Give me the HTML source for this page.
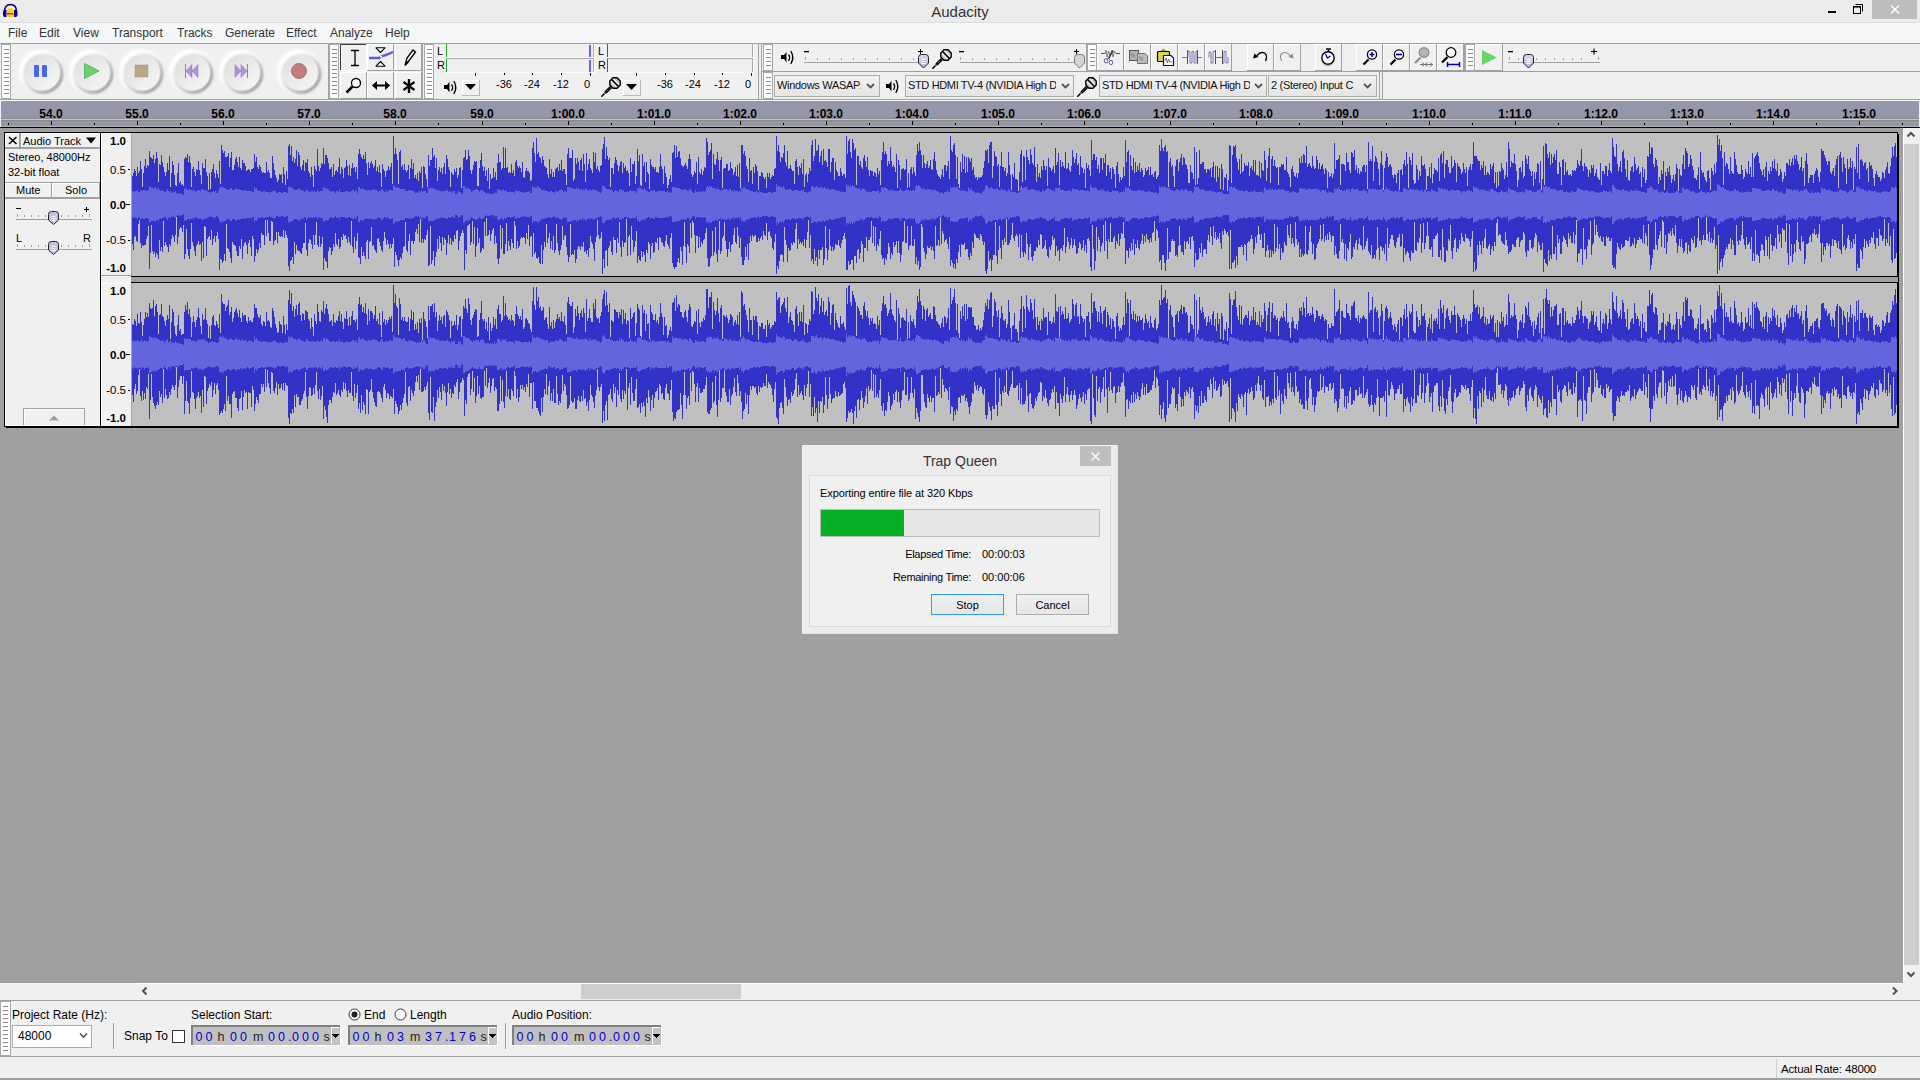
<!DOCTYPE html>
<html><head><meta charset="utf-8">
<style>
*{box-sizing:border-box}
html,body{margin:0;padding:0}
body{width:1920px;height:1080px;position:relative;overflow:hidden;background:#f0f0f0;font-family:"Liberation Sans",sans-serif;font-size:12px;color:#000}
.a{position:absolute}
#title{left:0;top:0;width:1920px;height:23px;background:#ebebeb;border-bottom:1px solid #dcdcdc}
#title .t{position:absolute;left:0;width:1920px;top:3px;text-align:center;font-size:15px;color:#333}
#menu{left:0;top:23px;width:1920px;height:20px;background:#f5f6f7}
#menu span{position:absolute;top:3px;font-size:12px;color:#333}
#tb{left:0;top:43px;width:1920px;height:57px;background:#f0f0f0}
.grip{position:absolute;width:10px;background:#fafafa;border:1px solid #a8a8a8;border-right:2px solid #a8a8a8}
.grip i{position:absolute;left:3px;width:5px;height:1px;background:#888}
.tbr{position:absolute;border-top:1px solid #a0a0a0;border-bottom:1px solid #a0a0a0}
#ruler{left:1px;top:101px;width:1918px;height:26px;background:#9696aa}
.rl{position:absolute;top:6px;width:60px;text-align:center;font-weight:bold;font-size:12px;color:#000}
.rt{position:absolute;top:20px;width:1px;height:4px;background:#000}
.rtm{position:absolute;top:22px;width:1px;height:2px;background:#000}
#tracks{left:0;top:128px;width:1903px;height:855px;background:#a0a0a0}
#vsb{left:1903px;top:128px;width:17px;height:855px;background:#f0f0f0;border-left:1px solid #fff}
#hsb{left:0;top:983px;width:1920px;height:17px;background:#f0f0f0;border-top:1px solid #fff}
#seltb{left:0;top:1000px;width:1920px;height:57px;background:#f0f0f0;border-top:1px solid #a0a0a0;border-bottom:1px solid #a0a0a0}
#status{left:0;top:1057px;width:1920px;height:23px;background:#f0f0f0}
.lbl{position:absolute;font-size:12px;color:#000}
.tc{position:absolute;height:21px;width:150px;background:#c0c0c0;border:1px solid #777;border-right-color:#fff;border-bottom-color:#fff;font-family:"Liberation Sans",sans-serif;font-size:13px}
.tc span{position:absolute;top:2px}
.vr{position:absolute;left:101px;width:25px;text-align:right;font-size:11.5px;line-height:12px}
.vr b{font-weight:bold}
#dlg{left:802px;top:446px;width:316px;height:188px;background:#f0f0f0;border:1px solid #888;box-shadow:0 0 0 1px #ddd}
</style></head><body>
<div id="title" class="a"><div class="t">Audacity</div></div>
<div id="menu" class="a">
<span style="left:8px">File</span><span style="left:39px">Edit</span><span style="left:73px">View</span><span style="left:112px">Transport</span><span style="left:177px">Tracks</span><span style="left:225px">Generate</span><span style="left:286px">Effect</span><span style="left:330px">Analyze</span><span style="left:385px">Help</span>
</div>
<div id="tb" class="a"></div>
<svg class="a" style="left:0;top:0" width="1920" height="100">
<defs>
<filter id="bl1" x="-30%" y="-30%" width="160%" height="160%"><feGaussianBlur stdDeviation="1.6"/></filter>
<filter id="bl2" x="-30%" y="-30%" width="160%" height="160%"><feGaussianBlur stdDeviation="1"/></filter><filter id="bl3" x="-30%" y="-30%" width="160%" height="160%"><feGaussianBlur stdDeviation="0.6"/></filter>
<linearGradient id="face" x1="0.2" y1="0.2" x2="0.8" y2="0.8"><stop offset="0" stop-color="#e3e3e3"/><stop offset="1" stop-color="#f2f2f2"/></linearGradient>
<linearGradient id="thumbg" x1="0" y1="0" x2="0" y2="1"><stop offset="0" stop-color="#d8d8f0"/><stop offset="1" stop-color="#b8b8e0"/></linearGradient>
<linearGradient id="combo" x1="0" y1="0" x2="0" y2="1"><stop offset="0" stop-color="#f2f2f2"/><stop offset="1" stop-color="#e4e4e4"/></linearGradient>
<linearGradient id="ringg" x1="0.15" y1="0.15" x2="0.85" y2="0.85"><stop offset="0" stop-color="#ffffff" stop-opacity="1"/><stop offset="0.55" stop-color="#ffffff" stop-opacity="0.6"/><stop offset="1" stop-color="#ffffff" stop-opacity="0"/></linearGradient>
<linearGradient id="shadg" x1="0.15" y1="0.15" x2="0.85" y2="0.85"><stop offset="0" stop-color="#a0a0a0" stop-opacity="0"/><stop offset="0.5" stop-color="#a0a0a0" stop-opacity="0.35"/><stop offset="1" stop-color="#999" stop-opacity="1"/></linearGradient>
<g id="tbtn"><circle cx="-0.5" cy="-0.5" r="20.5" fill="none" stroke="url(#ringg)" stroke-width="4.5" filter="url(#bl2)"/><circle cx="0.8" cy="0.8" r="19" fill="none" stroke="url(#shadg)" stroke-width="3" filter="url(#bl2)"/><circle cx="0" cy="0" r="17.8" fill="url(#face)" filter="url(#bl3)"/></g>
<g id="thumb"><path d="M0.5 3.5 Q0.5 0.5 3.5 0.5 H7.5 Q10.5 0.5 10.5 3.5 V9 L5.5 14 L0.5 9 Z" fill="url(#thumbg)" stroke="#222" stroke-width="1"/><path d="M3.5 5.5H7.5M3.5 7.5H7.5M3.5 9.5H7.5" stroke="#fff" stroke-width="1"/></g>
<g id="spk"><path d="M0 5 H3 L5.5 2 V12.5 L3 9 H0 Z" fill="#000"/><path d="M7.5 4.5 Q9.8 7.5 7.5 10.8" stroke="#000" stroke-width="1.3" fill="none"/><path d="M9.8 1 Q13.8 7.5 9.8 14" stroke="#000" stroke-width="1.3" fill="none"/></g>
<g id="mic"><path d="M0.8 19.2 L5 15" stroke="#000" stroke-width="1.6" stroke-linecap="round"/><path d="M4.5 15.5 L10 10" stroke="#000" stroke-width="3"/><path d="M3 17 L9.5 10.5" stroke="#fff" stroke-width="0.6" stroke-dasharray="1 1.2"/><path d="M12 0.8 H16 L19.2 4 V8 L16 11.2 H12 L8.8 8 V4 Z" fill="#c4c4c4" stroke="#000" stroke-width="1.4"/><path d="M12.5 2 L18 7.5 M10 4.5 L15.5 10" stroke="#f4f4f4" stroke-width="1.1"/><path d="M10.8 2.8 L17.2 9.2" stroke="#000" stroke-width="1.6"/></g>
<g id="chev"><path d="M0 0 L3.5 3.5 L7 0" stroke="#555" stroke-width="1.8" fill="none"/></g>
</defs>
<!-- dock lines -->
<rect x="0" y="43" width="1920" height="1" fill="#a0a0a0"/>
<rect x="0" y="99" width="1920" height="1" fill="#a0a0a0"/>
<rect x="762" y="71" width="1158" height="1" fill="#a0a0a0"/>
<!-- toolbar separators -->
<rect x="328" y="43" width="1" height="56" fill="#a0a0a0"/>
<rect x="422" y="43" width="1" height="56" fill="#a0a0a0"/>
<rect x="758" y="43" width="1" height="56" fill="#a0a0a0"/>
<rect x="761" y="43" width="1" height="56" fill="#a0a0a0"/>
<rect x="1086" y="43" width="1" height="28" fill="#a0a0a0"/>
<rect x="1464" y="43" width="1" height="28" fill="#a0a0a0"/>
<rect x="1379" y="71" width="1" height="28" fill="#a0a0a0"/>
<rect x="1382" y="71" width="1" height="28" fill="#a0a0a0"/>
<!-- grips -->
<g id="grips"></g>
<rect x="1.5" y="44.5" width="9" height="54" fill="#fcfcfc" stroke="#a8a8a8"/><rect x="4" y="49" width="5" height="1" fill="#8a8a8a"/><rect x="4" y="53" width="5" height="1" fill="#8a8a8a"/><rect x="4" y="57" width="5" height="1" fill="#8a8a8a"/><rect x="4" y="61" width="5" height="1" fill="#8a8a8a"/><rect x="4" y="65" width="5" height="1" fill="#8a8a8a"/><rect x="4" y="69" width="5" height="1" fill="#8a8a8a"/><rect x="4" y="73" width="5" height="1" fill="#8a8a8a"/><rect x="4" y="77" width="5" height="1" fill="#8a8a8a"/><rect x="4" y="81" width="5" height="1" fill="#8a8a8a"/><rect x="4" y="85" width="5" height="1" fill="#8a8a8a"/><rect x="4" y="89" width="5" height="1" fill="#8a8a8a"/><rect x="4" y="93" width="5" height="1" fill="#8a8a8a"/><rect x="329.5" y="44.5" width="9" height="54" fill="#fcfcfc" stroke="#a8a8a8"/><rect x="332" y="49" width="5" height="1" fill="#8a8a8a"/><rect x="332" y="53" width="5" height="1" fill="#8a8a8a"/><rect x="332" y="57" width="5" height="1" fill="#8a8a8a"/><rect x="332" y="61" width="5" height="1" fill="#8a8a8a"/><rect x="332" y="65" width="5" height="1" fill="#8a8a8a"/><rect x="332" y="69" width="5" height="1" fill="#8a8a8a"/><rect x="332" y="73" width="5" height="1" fill="#8a8a8a"/><rect x="332" y="77" width="5" height="1" fill="#8a8a8a"/><rect x="332" y="81" width="5" height="1" fill="#8a8a8a"/><rect x="332" y="85" width="5" height="1" fill="#8a8a8a"/><rect x="332" y="89" width="5" height="1" fill="#8a8a8a"/><rect x="332" y="93" width="5" height="1" fill="#8a8a8a"/><rect x="424.5" y="44.5" width="9" height="54" fill="#fcfcfc" stroke="#a8a8a8"/><rect x="427" y="49" width="5" height="1" fill="#8a8a8a"/><rect x="427" y="53" width="5" height="1" fill="#8a8a8a"/><rect x="427" y="57" width="5" height="1" fill="#8a8a8a"/><rect x="427" y="61" width="5" height="1" fill="#8a8a8a"/><rect x="427" y="65" width="5" height="1" fill="#8a8a8a"/><rect x="427" y="69" width="5" height="1" fill="#8a8a8a"/><rect x="427" y="73" width="5" height="1" fill="#8a8a8a"/><rect x="427" y="77" width="5" height="1" fill="#8a8a8a"/><rect x="427" y="81" width="5" height="1" fill="#8a8a8a"/><rect x="427" y="85" width="5" height="1" fill="#8a8a8a"/><rect x="427" y="89" width="5" height="1" fill="#8a8a8a"/><rect x="427" y="93" width="5" height="1" fill="#8a8a8a"/><rect x="763.5" y="44.5" width="9" height="26" fill="#fcfcfc" stroke="#a8a8a8"/><rect x="766" y="49" width="5" height="1" fill="#8a8a8a"/><rect x="766" y="53" width="5" height="1" fill="#8a8a8a"/><rect x="766" y="57" width="5" height="1" fill="#8a8a8a"/><rect x="766" y="61" width="5" height="1" fill="#8a8a8a"/><rect x="766" y="65" width="5" height="1" fill="#8a8a8a"/><rect x="763.5" y="72.5" width="9" height="26" fill="#fcfcfc" stroke="#a8a8a8"/><rect x="766" y="77" width="5" height="1" fill="#8a8a8a"/><rect x="766" y="81" width="5" height="1" fill="#8a8a8a"/><rect x="766" y="85" width="5" height="1" fill="#8a8a8a"/><rect x="766" y="89" width="5" height="1" fill="#8a8a8a"/><rect x="766" y="93" width="5" height="1" fill="#8a8a8a"/><rect x="1087.5" y="44.5" width="9" height="26" fill="#fcfcfc" stroke="#a8a8a8"/><rect x="1090" y="49" width="5" height="1" fill="#8a8a8a"/><rect x="1090" y="53" width="5" height="1" fill="#8a8a8a"/><rect x="1090" y="57" width="5" height="1" fill="#8a8a8a"/><rect x="1090" y="61" width="5" height="1" fill="#8a8a8a"/><rect x="1090" y="65" width="5" height="1" fill="#8a8a8a"/><rect x="1465.5" y="44.5" width="9" height="26" fill="#fcfcfc" stroke="#a8a8a8"/><rect x="1468" y="49" width="5" height="1" fill="#8a8a8a"/><rect x="1468" y="53" width="5" height="1" fill="#8a8a8a"/><rect x="1468" y="57" width="5" height="1" fill="#8a8a8a"/><rect x="1468" y="61" width="5" height="1" fill="#8a8a8a"/><rect x="1468" y="65" width="5" height="1" fill="#8a8a8a"/>
<!-- transport buttons -->
<use href="#tbtn" x="42" y="72.5"/>
<use href="#tbtn" x="92" y="72.5"/>
<use href="#tbtn" x="142" y="72.5"/>
<use href="#tbtn" x="192" y="72.5"/>
<use href="#tbtn" x="242" y="72.5"/>
<use href="#tbtn" x="300" y="72.5"/>
<rect x="34" y="65" width="5" height="12" rx="1" fill="#4466ee"/>
<rect x="42" y="65" width="5" height="12" rx="1" fill="#4466ee"/>
<path d="M84.5 63.5 L99 71 L84.5 78.5 Z" fill="#6ad46a" stroke="#3a9a3a" stroke-width="0.6"/>
<rect x="135" y="65" width="13" height="12" fill="#b8a888" stroke="#a89878" stroke-width="0.5"/>
<rect x="185" y="64" width="1" height="14" fill="#a070d0"/>
<path d="M186 71 L192 64.5 V77.5 Z M192 71 L198 64.5 V77.5 Z" fill="#b490e0" stroke="#9070c0" stroke-width="0.5"/>
<rect x="247" y="64" width="1" height="14" fill="#a070d0"/>
<path d="M247 71 L241 64.5 V77.5 Z M241 71 L235 64.5 V77.5 Z" fill="#b490e0" stroke="#9070c0" stroke-width="0.5"/>
<circle cx="299" cy="71" r="7.5" fill="#c27f80" stroke="#9a5f60" stroke-width="0.8"/>
<!-- tool buttons -->
<rect x="340" y="44" width="27" height="27" fill="#f0f0f0"/><rect x="340" y="44" width="27" height="1" fill="#404040"/><rect x="340" y="44" width="1" height="27" fill="#404040"/><rect x="340" y="70" width="27" height="1" fill="#fff"/><rect x="366" y="44" width="1" height="27" fill="#fff"/><rect x="367" y="44" width="27" height="27" fill="#f0f0f0"/><rect x="367" y="44" width="27" height="1" fill="#fff"/><rect x="367" y="44" width="1" height="27" fill="#fff"/><rect x="367" y="70" width="27" height="1" fill="#a0a0a0"/><rect x="393" y="44" width="1" height="27" fill="#a0a0a0"/><rect x="395" y="44" width="27" height="27" fill="#f0f0f0"/><rect x="395" y="44" width="27" height="1" fill="#fff"/><rect x="395" y="44" width="1" height="27" fill="#fff"/><rect x="395" y="70" width="27" height="1" fill="#a0a0a0"/><rect x="421" y="44" width="1" height="27" fill="#a0a0a0"/><rect x="340" y="72" width="27" height="27" fill="#f0f0f0"/><rect x="340" y="72" width="27" height="1" fill="#fff"/><rect x="340" y="72" width="1" height="27" fill="#fff"/><rect x="340" y="98" width="27" height="1" fill="#a0a0a0"/><rect x="366" y="72" width="1" height="27" fill="#a0a0a0"/><rect x="367" y="72" width="27" height="27" fill="#f0f0f0"/><rect x="367" y="72" width="27" height="1" fill="#fff"/><rect x="367" y="72" width="1" height="27" fill="#fff"/><rect x="367" y="98" width="27" height="1" fill="#a0a0a0"/><rect x="393" y="72" width="1" height="27" fill="#a0a0a0"/><rect x="395" y="72" width="27" height="27" fill="#f0f0f0"/><rect x="395" y="72" width="27" height="1" fill="#fff"/><rect x="395" y="72" width="1" height="27" fill="#fff"/><rect x="395" y="98" width="27" height="1" fill="#a0a0a0"/><rect x="421" y="72" width="1" height="27" fill="#a0a0a0"/>
<!-- tool icons -->
<path d="M351 50.5H359M351 65.5H359M355 50.5V65.5" stroke="#000" stroke-width="1.3" fill="none"/>
<path d="M376 47.8 H385 L380.5 52.5 Z" fill="#fff" stroke="#000" stroke-width="1.1" stroke-linejoin="round"/>
<path d="M376 66.2 H385 L380.5 61.5 Z" fill="#fff" stroke="#000" stroke-width="1.1" stroke-linejoin="round"/>
<path d="M369 58 H379 L382 56 L386 55 L393 52" stroke="#5a5adc" stroke-width="2.4" fill="none"/>
<circle cx="381" cy="56.5" r="1.1" fill="#fff"/>
<path d="M405 65.5 L407 58 L413 50 L415.5 52 L409.5 60 Z" fill="#fff" stroke="#000" stroke-width="1.3"/>
<path d="M405 65.5 L407 61 L409 62.5 Z" fill="#000"/>
<circle cx="356" cy="83" r="4.5" fill="#fff" stroke="#000" stroke-width="1.3"/>
<path d="M346.5 92.5 L352.5 86.5" stroke="#000" stroke-width="2.5"/>
<path d="M373 85.5 H389" stroke="#000" stroke-width="2"/>
<path d="M372 85.5 L377 81 V90 Z M390 85.5 L385 81 V90 Z" fill="#000"/>
<path d="M409 79 V93" stroke="#000" stroke-width="2.4"/>
<path d="M403.5 82 L409 86 L414.5 82 M403.5 90 L409 86 L414.5 90" stroke="#000" stroke-width="2.2" fill="none"/>
<!-- meters -->
<rect x="446" y="44" width="148" height="13" fill="#f0f0f0"/>
<rect x="446" y="57" width="149" height="1" fill="#ffffff"/>
<rect x="446" y="58" width="148" height="1" fill="#a8a8a8"/>
<rect x="446" y="59" width="148" height="13" fill="#f0f0f0"/>
<rect x="446" y="72" width="149" height="1" fill="#ffffff"/>
<rect x="594" y="44" width="1" height="29" fill="#ffffff"/>
<rect x="593" y="44" width="1" height="13" fill="#a8a8a8"/><rect x="593" y="59" width="1" height="13" fill="#a8a8a8"/>
<rect x="446" y="44" width="1" height="13" fill="#20a020"/>
<rect x="446" y="59" width="1" height="13" fill="#20a020"/>
<rect x="589" y="45" width="2" height="12" fill="#6464ee"/>
<rect x="589" y="60" width="2" height="12" fill="#6464ee"/>
<g fill="#000"><rect x="475" y="73" width="1" height="3"/><rect x="504" y="73" width="1" height="2"/><rect x="532" y="73" width="1" height="2"/><rect x="561" y="73" width="1" height="2"/><rect x="590" y="73" width="1" height="3"/></g>
<rect x="607" y="44" width="146" height="13" fill="#f0f0f0"/>
<rect x="607" y="57" width="147" height="1" fill="#ffffff"/>
<rect x="607" y="58" width="146" height="1" fill="#a8a8a8"/>
<rect x="607" y="72" width="147" height="1" fill="#ffffff"/>
<rect x="753" y="44" width="1" height="29" fill="#ffffff"/>
<rect x="752" y="44" width="1" height="13" fill="#a8a8a8"/><rect x="752" y="59" width="1" height="13" fill="#a8a8a8"/>
<rect x="607" y="44" width="1" height="13" fill="#b03030"/>
<rect x="607" y="59" width="1" height="13" fill="#b03030"/>
<g fill="#000"><rect x="636" y="73" width="1" height="3"/><rect x="665" y="73" width="1" height="2"/><rect x="694" y="73" width="1" height="2"/><rect x="722" y="73" width="1" height="2"/><rect x="751" y="73" width="1" height="3"/></g>
<use href="#spk" x="444" y="80"/>
<rect x="462" y="80" width="18" height="16" fill="#f0f0f0"/><rect x="462" y="80" width="18" height="1" fill="#fff"/><rect x="462" y="80" width="1" height="16" fill="#fff"/><rect x="462" y="95" width="18" height="1" fill="#b8b8b8"/><rect x="479" y="80" width="1" height="16" fill="#b8b8b8"/>
<path d="M465 84 H476 L470.5 90 Z" fill="#000"/>
<use href="#mic" x="601" y="77"/>
<rect x="623" y="80" width="18" height="16" fill="#f0f0f0"/><rect x="623" y="80" width="18" height="1" fill="#fff"/><rect x="623" y="80" width="1" height="16" fill="#fff"/><rect x="623" y="95" width="18" height="1" fill="#b8b8b8"/><rect x="640" y="80" width="1" height="16" fill="#b8b8b8"/>
<path d="M626 84 H637 L631.5 90 Z" fill="#000"/>
<!-- mixer -->
<use href="#spk" x="781" y="50"/>
<rect x="804" y="62" width="118" height="1" fill="#a0a0a0"/>
<g fill="#a0a0a0"><rect x="805" y="57" width="1" height="3"/><rect x="817" y="58" width="1" height="2"/><rect x="829" y="58" width="1" height="2"/><rect x="841" y="58" width="1" height="2"/><rect x="853" y="58" width="1" height="2"/><rect x="865" y="58" width="1" height="2"/><rect x="877" y="58" width="1" height="2"/><rect x="889" y="58" width="1" height="2"/><rect x="901" y="58" width="1" height="2"/><rect x="913" y="58" width="1" height="2"/></g>
<rect x="804" y="51" width="5" height="1.3" fill="#000"/>
<path d="M918 51.5 H923 M920.5 49 V54" stroke="#000" stroke-width="1"/>
<use href="#thumb" x="918" y="54"/>
<use href="#mic" x="932" y="49"/>
<rect x="960" y="62" width="120" height="1" fill="#a0a0a0"/>
<g fill="#a0a0a0"><rect x="960" y="57" width="1" height="3"/><rect x="972" y="58" width="1" height="2"/><rect x="984" y="58" width="1" height="2"/><rect x="996" y="58" width="1" height="2"/><rect x="1008" y="58" width="1" height="2"/><rect x="1020" y="58" width="1" height="2"/><rect x="1032" y="58" width="1" height="2"/><rect x="1044" y="58" width="1" height="2"/><rect x="1056" y="58" width="1" height="2"/><rect x="1068" y="58" width="1" height="2"/></g>
<rect x="959" y="51" width="5" height="1.3" fill="#000"/>
<path d="M1074 51.5 H1079 M1076.5 49 V54" stroke="#000" stroke-width="1"/>
<g transform="translate(1074,54)"><path d="M0.5 3.5 Q0.5 0.5 3.5 0.5 H7.5 Q10.5 0.5 10.5 3.5 V9 L5.5 14 L0.5 9 Z" fill="#d4d4d4" stroke="#777" stroke-width="1"/></g>
<!-- device -->
<rect x="774.5" y="75.5" width="105" height="21" fill="url(#combo)" stroke="#acacac"/>
<use href="#chev" x="867" y="84"/>
<use href="#spk" x="886" y="79"/>
<rect x="905.5" y="75.5" width="168" height="21" fill="url(#combo)" stroke="#acacac"/>
<use href="#chev" x="1062" y="84"/>
<use href="#mic" x="1077" y="77"/>
<rect x="1099.5" y="75.5" width="167" height="21" fill="url(#combo)" stroke="#acacac"/>
<use href="#chev" x="1255" y="84"/>
<rect x="1268.5" y="75.5" width="108" height="21" fill="url(#combo)" stroke="#acacac"/>
<use href="#chev" x="1364" y="84"/>
<!-- edit toolbar buttons -->
<rect x="1097" y="44" width="27" height="27" fill="#f0f0f0"/><rect x="1097" y="44" width="27" height="1" fill="#fff"/><rect x="1097" y="44" width="1" height="27" fill="#fff"/><rect x="1097" y="70" width="27" height="1" fill="#a0a0a0"/><rect x="1123" y="44" width="1" height="27" fill="#a0a0a0"/><rect x="1124" y="44" width="27" height="27" fill="#f0f0f0"/><rect x="1124" y="44" width="27" height="1" fill="#fff"/><rect x="1124" y="44" width="1" height="27" fill="#fff"/><rect x="1124" y="70" width="27" height="1" fill="#a0a0a0"/><rect x="1150" y="44" width="1" height="27" fill="#a0a0a0"/><rect x="1151" y="44" width="27" height="27" fill="#f0f0f0"/><rect x="1151" y="44" width="27" height="1" fill="#fff"/><rect x="1151" y="44" width="1" height="27" fill="#fff"/><rect x="1151" y="70" width="27" height="1" fill="#a0a0a0"/><rect x="1177" y="44" width="1" height="27" fill="#a0a0a0"/><rect x="1178" y="44" width="27" height="27" fill="#f0f0f0"/><rect x="1178" y="44" width="27" height="1" fill="#fff"/><rect x="1178" y="44" width="1" height="27" fill="#fff"/><rect x="1178" y="70" width="27" height="1" fill="#a0a0a0"/><rect x="1204" y="44" width="1" height="27" fill="#a0a0a0"/><rect x="1205" y="44" width="27" height="27" fill="#f0f0f0"/><rect x="1205" y="44" width="27" height="1" fill="#fff"/><rect x="1205" y="44" width="1" height="27" fill="#fff"/><rect x="1205" y="70" width="27" height="1" fill="#a0a0a0"/><rect x="1231" y="44" width="1" height="27" fill="#a0a0a0"/><rect x="1247" y="44" width="27" height="27" fill="#f0f0f0"/><rect x="1247" y="44" width="27" height="1" fill="#fff"/><rect x="1247" y="44" width="1" height="27" fill="#fff"/><rect x="1247" y="70" width="27" height="1" fill="#a0a0a0"/><rect x="1273" y="44" width="1" height="27" fill="#a0a0a0"/><rect x="1274" y="44" width="27" height="27" fill="#f0f0f0"/><rect x="1274" y="44" width="27" height="1" fill="#fff"/><rect x="1274" y="44" width="1" height="27" fill="#fff"/><rect x="1274" y="70" width="27" height="1" fill="#a0a0a0"/><rect x="1300" y="44" width="1" height="27" fill="#a0a0a0"/><rect x="1315" y="44" width="27" height="27" fill="#f0f0f0"/><rect x="1315" y="44" width="27" height="1" fill="#fff"/><rect x="1315" y="44" width="1" height="27" fill="#fff"/><rect x="1315" y="70" width="27" height="1" fill="#a0a0a0"/><rect x="1341" y="44" width="1" height="27" fill="#a0a0a0"/><rect x="1356" y="44" width="27" height="27" fill="#f0f0f0"/><rect x="1356" y="44" width="27" height="1" fill="#fff"/><rect x="1356" y="44" width="1" height="27" fill="#fff"/><rect x="1356" y="70" width="27" height="1" fill="#a0a0a0"/><rect x="1382" y="44" width="1" height="27" fill="#a0a0a0"/><rect x="1383" y="44" width="27" height="27" fill="#f0f0f0"/><rect x="1383" y="44" width="27" height="1" fill="#fff"/><rect x="1383" y="44" width="1" height="27" fill="#fff"/><rect x="1383" y="70" width="27" height="1" fill="#a0a0a0"/><rect x="1409" y="44" width="1" height="27" fill="#a0a0a0"/><rect x="1410" y="44" width="27" height="27" fill="#f0f0f0"/><rect x="1410" y="44" width="27" height="1" fill="#fff"/><rect x="1410" y="44" width="1" height="27" fill="#fff"/><rect x="1410" y="70" width="27" height="1" fill="#a0a0a0"/><rect x="1436" y="44" width="1" height="27" fill="#a0a0a0"/><rect x="1437" y="44" width="27" height="27" fill="#f0f0f0"/><rect x="1437" y="44" width="27" height="1" fill="#fff"/><rect x="1437" y="44" width="1" height="27" fill="#fff"/><rect x="1437" y="70" width="27" height="1" fill="#a0a0a0"/><rect x="1463" y="44" width="1" height="27" fill="#a0a0a0"/><rect x="1475" y="44" width="28" height="27" fill="#f0f0f0"/><rect x="1475" y="44" width="28" height="1" fill="#fff"/><rect x="1475" y="44" width="1" height="27" fill="#fff"/><rect x="1475" y="70" width="28" height="1" fill="#a0a0a0"/><rect x="1502" y="44" width="1" height="27" fill="#a0a0a0"/>
<!-- edit icons -->
<path d="M1101 53.5 H1105 M1116 53.5 H1120" stroke="#505050" stroke-width="1"/>
<path d="M1105 53.5 L1106 50 L1107 57 L1108.5 51 L1110 56 L1111.5 50.5 L1113 57 L1114.5 51 L1116 53.5" stroke="#707070" stroke-width="0.9" fill="none"/>
<path d="M1113 50.5 L1108.5 58.5" stroke="#404040" stroke-width="1.6"/>
<ellipse cx="1106" cy="60.8" rx="1.8" ry="2.2" fill="none" stroke="#6060b0" stroke-width="1"/>
<ellipse cx="1111" cy="62.5" rx="1.8" ry="2.2" fill="none" stroke="#6060b0" stroke-width="1"/>
<path d="M1108.5 58.5 L1106.5 59 M1108.5 58.5 L1110.5 60.5" stroke="#6060b0" stroke-width="0.8"/>
<rect x="1129.5" y="50.5" width="9" height="10" fill="#b4b4b4" stroke="#555" stroke-width="1"/>
<path d="M1137.5 53.5 H1145 L1147.5 56 V63.5 H1137.5 Z" fill="#bcbcbc" stroke="#6a6aaa" stroke-width="1"/>
<path d="M1131 56 l1 -3 l1 5 l1 -4 l1 3 M1139 59 l1 -3 l1 5 l1 -4 l1 3" stroke="#888" stroke-width="0.7" fill="none"/>
<rect x="1157.5" y="51.5" width="12" height="10" rx="1" fill="#d8d840" stroke="#000" stroke-width="1.2"/>
<path d="M1161 51.5 Q1163.5 48 1166 51.5 Z" fill="#ffff40" stroke="#000" stroke-width="0.8"/>
<path d="M1163.5 55.5 H1171 L1173.5 58 V65.5 H1163.5 Z" fill="#fff" stroke="#0000c8" stroke-width="1.2"/>
<path d="M1165 61 l1.2 -3 l1.2 5 l1.2 -4 l1.2 3 H1172" stroke="#444" stroke-width="0.7" fill="none"/>
<path d="M1182 57.5 H1187 M1198 57.5 H1202" stroke="#7070b0" stroke-width="1"/>
<path d="M1187.5 50 V64 M1197.5 50 V64" stroke="#505050" stroke-width="1"/>
<path d="M1188 57 V51.5 H1190 V63 H1192 V51.5 H1194 V63 H1196 V51.5 H1197" stroke="#7070b0" stroke-width="0.9" fill="none"/>
<path d="M1209 57.5 V52 H1211 V63 H1213 V51.5 H1215 M1222 63 H1224 V51.5 H1226 V63 H1228 V57" stroke="#7070b0" stroke-width="0.9" fill="none"/>
<path d="M1215.5 50 V64 M1222.5 50 V64" stroke="#505050" stroke-width="1"/>
<path d="M1216 57.5 H1222" stroke="#7070b0" stroke-width="1"/>
<path d="M1256 57 Q1260 51 1264.5 53 Q1268 55.5 1265.5 61" stroke="#000" stroke-width="1.3" fill="none"/>
<path d="M1253 58.5 L1254.5 53.5 L1258.5 57 Z" fill="#000"/>
<path d="M1291 57 Q1287 51 1282.5 53 Q1279 55.5 1281.5 61" stroke="#8a8a8a" stroke-width="1.1" fill="none"/>
<path d="M1293.5 58.5 L1292.5 53.5 L1288.5 57 Z" fill="#8a8a8a"/>
<circle cx="1328" cy="58" r="6.2" fill="#f8f8f8" stroke="#000" stroke-width="1.4"/>
<path d="M1328.5 52 V50 M1326 49 H1331" stroke="#000" stroke-width="1.4"/>
<path d="M1325.5 54 L1327.5 58 L1330.5 56" stroke="#0000c0" stroke-width="1.2" fill="none"/>
<path d="M1333 63 A6 6 0 0 1 1323 63.5" stroke="#999" stroke-width="0.8" fill="none"/>
<g id="zin"><circle cx="1372" cy="54.5" r="4.6" fill="#fff" stroke="#000" stroke-width="1.3"/><path d="M1363.5 64.5 L1368.5 59.5" stroke="#000" stroke-width="2.3"/></g>
<path d="M1369.5 54.5 H1374.5 M1372 52 V57" stroke="#0000c0" stroke-width="1.6"/>
<circle cx="1399" cy="54.5" r="4.6" fill="#fff" stroke="#000" stroke-width="1.3"/><path d="M1390.5 64.5 L1395.5 59.5" stroke="#000" stroke-width="2.3"/>
<path d="M1396 54.5 H1402" stroke="#0000c0" stroke-width="1.8"/>
<circle cx="1424" cy="52.5" r="4.8" fill="#b4b4b4" stroke="#8a8a8a" stroke-width="1.3"/><path d="M1415 63 L1420.5 57.5" stroke="#8a8a8a" stroke-width="2.3"/>
<path d="M1420 64.5 H1433" stroke="#777" stroke-width="1"/>
<path d="M1422 62.5 L1424.5 64.5 L1422 66.5 M1427.5 62.5 L1425 64.5 L1427.5 66.5 M1430 62.5 L1432.5 64.5 L1430 66.5" stroke="#777" stroke-width="1" fill="none"/>
<circle cx="1451" cy="52.5" r="4.8" fill="#fff" stroke="#000" stroke-width="1.3"/><path d="M1442 62.5 L1447.5 57" stroke="#000" stroke-width="2.3"/>
<path d="M1447.5 64.5 H1459.5 M1447.5 62 V67 M1459.5 62 V67" stroke="#0000b0" stroke-width="1.5"/>
<!-- play at speed -->
<rect x="1508" y="62" width="92" height="1" fill="#a0a0a0"/>
<g fill="#a0a0a0"><rect x="1509" y="57" width="1" height="3"/><rect x="1518" y="58" width="1" height="2"/><rect x="1527" y="58" width="1" height="2"/><rect x="1536" y="58" width="1" height="2"/><rect x="1545" y="58" width="1" height="2"/><rect x="1554" y="58" width="1" height="2"/><rect x="1563" y="58" width="1" height="2"/><rect x="1572" y="58" width="1" height="2"/><rect x="1581" y="58" width="1" height="2"/><rect x="1598" y="57" width="1" height="3"/></g>
<rect x="1508" y="51" width="5" height="1.3" fill="#000"/>
<path d="M1591 51.5 H1597 M1594 48.5 V54.5" stroke="#000" stroke-width="1.2"/>
<use href="#thumb" x="1523" y="54"/>
<path d="M1482 50 L1497 57.5 L1482 65 Z" fill="#6ad46a"/>
</svg>
<div class="lbl" style="left:437px;top:45px;font-size:11px">L</div>
<div class="lbl" style="left:437px;top:59px;font-size:11px">R</div>
<div class="lbl" style="left:598px;top:45px;font-size:11px">L</div>
<div class="lbl" style="left:598px;top:59px;font-size:11px">R</div>
<div class="lbl" style="left:496px;top:78px;font-size:11px">-36</div>
<div class="lbl" style="left:524px;top:78px;font-size:11px">-24</div>
<div class="lbl" style="left:553px;top:78px;font-size:11px">-12</div>
<div class="lbl" style="left:584px;top:78px;font-size:11px">0</div>
<div class="lbl" style="left:657px;top:78px;font-size:11px">-36</div>
<div class="lbl" style="left:685px;top:78px;font-size:11px">-24</div>
<div class="lbl" style="left:714px;top:78px;font-size:11px">-12</div>
<div class="lbl" style="left:745px;top:78px;font-size:11px">0</div>
<div class="lbl" style="left:777px;top:79px;font-size:11px;letter-spacing:-0.3px;color:#111">Windows WASAP<span style="color:#c8a060">.</span></div>
<div class="lbl" style="left:908px;top:79px;font-size:11px;letter-spacing:-0.35px;color:#111;width:148px;overflow:hidden;white-space:nowrap">STD HDMI TV-4 (NVIDIA High D</div>
<div class="lbl" style="left:1102px;top:79px;font-size:11px;letter-spacing:-0.35px;color:#111;width:148px;overflow:hidden;white-space:nowrap">STD HDMI TV-4 (NVIDIA High D</div>
<div class="lbl" style="left:1271px;top:79px;font-size:11px;letter-spacing:-0.3px;color:#111;width:90px;overflow:hidden;white-space:nowrap">2 (Stereo) Input C</div>

<div id="ruler" class="a"><div style="position:absolute;left:0;top:17px;width:1918px;height:1px;background:#8a8a8a"></div><div style="position:absolute;left:0;top:18px;width:1918px;height:1px;background:#c8c8c8"></div><div style="position:absolute;left:0;top:19px;width:1918px;height:1px;background:#8a8a8a"></div><div style="position:absolute;left:0;top:25px;width:1918px;height:1px;background:#b0b0b0"></div><div class="rl" style="left:20px">54.0</div><div class="rl" style="left:106px">55.0</div><div class="rl" style="left:192px">56.0</div><div class="rl" style="left:278px">57.0</div><div class="rl" style="left:364px">58.0</div><div class="rl" style="left:451px">59.0</div><div class="rl" style="left:537px">1:00.0</div><div class="rl" style="left:623px">1:01.0</div><div class="rl" style="left:709px">1:02.0</div><div class="rl" style="left:795px">1:03.0</div><div class="rl" style="left:881px">1:04.0</div><div class="rl" style="left:967px">1:05.0</div><div class="rl" style="left:1053px">1:06.0</div><div class="rl" style="left:1139px">1:07.0</div><div class="rl" style="left:1225px">1:08.0</div><div class="rl" style="left:1311px">1:09.0</div><div class="rl" style="left:1398px">1:10.0</div><div class="rl" style="left:1484px">1:11.0</div><div class="rl" style="left:1570px">1:12.0</div><div class="rl" style="left:1656px">1:13.0</div><div class="rl" style="left:1742px">1:14.0</div><div class="rl" style="left:1828px">1:15.0</div><div class="rt" style="left:50px"></div><div class="rt" style="left:136px"></div><div class="rt" style="left:222px"></div><div class="rt" style="left:308px"></div><div class="rt" style="left:394px"></div><div class="rt" style="left:481px"></div><div class="rt" style="left:567px"></div><div class="rt" style="left:653px"></div><div class="rt" style="left:739px"></div><div class="rt" style="left:825px"></div><div class="rt" style="left:911px"></div><div class="rt" style="left:997px"></div><div class="rt" style="left:1083px"></div><div class="rt" style="left:1169px"></div><div class="rt" style="left:1255px"></div><div class="rt" style="left:1341px"></div><div class="rt" style="left:1428px"></div><div class="rt" style="left:1514px"></div><div class="rt" style="left:1600px"></div><div class="rt" style="left:1686px"></div><div class="rt" style="left:1772px"></div><div class="rt" style="left:1858px"></div><div class="rtm" style="left:7px"></div><div class="rtm" style="left:93px"></div><div class="rtm" style="left:179px"></div><div class="rtm" style="left:265px"></div><div class="rtm" style="left:351px"></div><div class="rtm" style="left:437px"></div><div class="rtm" style="left:524px"></div><div class="rtm" style="left:610px"></div><div class="rtm" style="left:696px"></div><div class="rtm" style="left:782px"></div><div class="rtm" style="left:868px"></div><div class="rtm" style="left:954px"></div><div class="rtm" style="left:1040px"></div><div class="rtm" style="left:1126px"></div><div class="rtm" style="left:1212px"></div><div class="rtm" style="left:1298px"></div><div class="rtm" style="left:1385px"></div><div class="rtm" style="left:1471px"></div><div class="rtm" style="left:1557px"></div><div class="rtm" style="left:1643px"></div><div class="rtm" style="left:1729px"></div><div class="rtm" style="left:1815px"></div><div class="rtm" style="left:1901px"></div></div>
<div class="a" style="left:0;top:100px;width:1920px;height:1px;background:#fff"></div>
<div style="position:absolute;left:0;top:127px;width:1920px;height:1px;background:#000"></div>
<div id="tracks" class="a"></div>
<svg class="a" style="left:0;top:0" width="1920" height="1080" shape-rendering="crispEdges">
<rect x="131" y="133" width="1766" height="143" fill="#c0c0c0"/>
<rect x="131" y="283" width="1766" height="143" fill="#c0c0c0"/>
<rect x="131" y="134" width="1" height="142" fill="#a0a0a0"/>
<rect x="131" y="284" width="1" height="142" fill="#a0a0a0"/>
<path d="M132.5 176V244M133.5 173V250M134.5 169V237M135.5 171V236M136.5 176V241M137.5 167V242M138.5 173V224M139.5 171V220M140.5 161V243M141.5 169V248M142.5 187V245M143.5 173V246M144.5 166V245M145.5 159V245M146.5 168V239M147.5 165V236M148.5 166V226M149.5 151V269M150.5 157V253M151.5 158V225M152.5 159V251M153.5 155V254M154.5 163V252M155.5 159V257M156.5 152V253M157.5 158V255M158.5 182V259M159.5 164V240M160.5 165V251M161.5 155V247M162.5 162V252M163.5 167V221M164.5 172V246M165.5 176V242M166.5 172V245M167.5 163V247M168.5 170V252M169.5 156V244M170.5 187V246M171.5 173V239M172.5 161V235M173.5 165V237M174.5 175V242M175.5 185V235M176.5 186V217M177.5 173V244M178.5 163V237M179.5 183V229M180.5 181V227M181.5 185V228M182.5 184V232M183.5 186V225M184.5 159V259M185.5 157V254M186.5 158V229M187.5 154V249M188.5 162V256M189.5 156V259M190.5 163V249M191.5 187V223M192.5 169V242M193.5 167V246M194.5 172V251M195.5 176V256M196.5 169V246M197.5 170V244M198.5 161V241M199.5 170V245M200.5 175V244M201.5 184V261M202.5 163V242M203.5 168V258M204.5 168V226M205.5 159V227M206.5 172V256M207.5 176V239M208.5 190V237M209.5 173V236M210.5 189V240M211.5 172V230M212.5 169V245M213.5 164V239M214.5 173V236M215.5 178V242M216.5 170V236M217.5 174V232M218.5 178V239M219.5 161V270M220.5 184V259M221.5 145V260M222.5 150V263M223.5 153V261M224.5 151V254M225.5 157V261M226.5 157V224M227.5 156V248M228.5 153V249M229.5 167V252M230.5 158V258M231.5 152V263M232.5 170V242M233.5 170V244M234.5 165V245M235.5 159V246M236.5 157V251M237.5 162V256M238.5 167V256M239.5 157V246M240.5 168V249M241.5 170V239M242.5 160V259M243.5 163V246M244.5 163V243M245.5 166V242M246.5 171V245M247.5 170V254M248.5 169V243M249.5 170V240M250.5 172V247M251.5 169V256M252.5 169V236M253.5 168V239M254.5 154V262M255.5 162V256M256.5 157V249M257.5 167V253M258.5 169V250M259.5 165V243M260.5 167V248M261.5 171V233M262.5 173V235M263.5 172V235M264.5 173V245M265.5 173V220M266.5 162V236M267.5 172V220M268.5 170V233M269.5 173V241M270.5 178V241M271.5 178V221M272.5 156V222M273.5 163V245M274.5 170V241M275.5 175V240M276.5 178V232M277.5 182V243M278.5 180V232M279.5 174V236M280.5 175V237M281.5 174V236M282.5 183V237M283.5 167V230M284.5 174V238M285.5 185V231M286.5 171V235M287.5 179V238M288.5 146V266M289.5 144V271M290.5 155V261M291.5 146V260M292.5 161V257M293.5 157V264M294.5 163V242M295.5 159V254M296.5 150V245M297.5 166V250M298.5 152V251M299.5 155V251M300.5 167V253M301.5 170V254M302.5 165V248M303.5 160V243M304.5 171V243M305.5 162V223M306.5 163V250M307.5 159V256M308.5 171V243M309.5 173V239M310.5 177V240M311.5 167V244M312.5 175V249M313.5 187V235M314.5 166V245M315.5 169V235M316.5 171V222M317.5 149V245M318.5 166V247M319.5 171V236M320.5 168V247M321.5 163V244M322.5 164V237M323.5 148V270M324.5 164V258M325.5 155V261M326.5 155V262M327.5 158V268M328.5 163V251M329.5 169V247M330.5 169V248M331.5 167V255M332.5 177V251M333.5 164V244M334.5 175V247M335.5 171V233M336.5 170V244M337.5 172V246M338.5 167V239M339.5 158V249M340.5 174V247M341.5 167V237M342.5 169V240M343.5 178V234M344.5 168V236M345.5 167V235M346.5 160V239M347.5 166V243M348.5 175V237M349.5 165V242M350.5 176V245M351.5 168V221M352.5 163V247M353.5 168V253M354.5 167V237M355.5 172V249M356.5 167V241M357.5 179V233M358.5 154V257M359.5 149V258M360.5 154V264M361.5 157V247M362.5 159V256M363.5 155V252M364.5 159V256M365.5 152V259M366.5 163V242M367.5 175V240M368.5 162V259M369.5 168V242M370.5 163V241M371.5 161V227M372.5 164V246M373.5 168V245M374.5 166V249M375.5 160V251M376.5 171V253M377.5 167V239M378.5 172V238M379.5 165V242M380.5 173V246M381.5 187V250M382.5 164V252M383.5 169V241M384.5 171V232M385.5 177V238M386.5 171V245M387.5 170V240M388.5 166V244M389.5 170V249M390.5 167V244M391.5 163V248M392.5 184V244M393.5 136V238M394.5 154V267M395.5 148V252M396.5 154V255M397.5 160V260M398.5 184V266M399.5 152V260M400.5 150V257M401.5 167V259M402.5 165V253M403.5 170V247M404.5 164V246M405.5 170V222M406.5 172V250M407.5 170V252M408.5 165V241M409.5 179V234M410.5 168V255M411.5 159V241M412.5 169V241M413.5 163V244M414.5 178V241M415.5 175V232M416.5 179V229M417.5 173V234M418.5 181V224M419.5 171V242M420.5 173V219M421.5 167V243M422.5 188V239M423.5 166V243M424.5 167V239M425.5 174V240M426.5 179V235M427.5 187V230M428.5 155V266M429.5 166V265M430.5 160V226M431.5 160V264M432.5 148V260M433.5 157V251M434.5 155V266M435.5 168V257M436.5 158V252M437.5 181V239M438.5 170V249M439.5 167V236M440.5 172V243M441.5 168V251M442.5 174V237M443.5 167V245M444.5 163V238M445.5 174V240M446.5 155V255M447.5 159V243M448.5 167V235M449.5 170V244M450.5 187V238M451.5 172V245M452.5 174V241M453.5 175V242M454.5 169V235M455.5 172V239M456.5 168V231M457.5 178V230M458.5 175V250M459.5 168V241M460.5 167V236M461.5 188V233M462.5 170V230M463.5 158V233M464.5 157V270M465.5 150V250M466.5 160V254M467.5 159V226M468.5 150V225M469.5 156V224M470.5 170V245M471.5 174V242M472.5 170V221M473.5 165V244M474.5 161V227M475.5 162V257M476.5 161V246M477.5 186V228M478.5 186V243M479.5 168V238M480.5 160V253M481.5 153V251M482.5 166V248M483.5 171V249M484.5 167V222M485.5 176V236M486.5 170V218M487.5 181V236M488.5 168V235M489.5 189V230M490.5 174V241M491.5 179V234M492.5 178V230M493.5 168V228M494.5 177V244M495.5 172V236M496.5 180V243M497.5 163V259M498.5 154V264M499.5 162V258M500.5 162V225M501.5 170V249M502.5 168V228M503.5 147V254M504.5 168V254M505.5 148V244M506.5 168V223M507.5 167V251M508.5 173V241M509.5 172V246M510.5 173V250M511.5 164V239M512.5 173V243M513.5 170V248M514.5 176V221M515.5 162V226M516.5 160V249M517.5 166V241M518.5 168V248M519.5 166V246M520.5 168V239M521.5 172V237M522.5 162V238M523.5 177V237M524.5 178V238M525.5 171V244M526.5 168V233M527.5 171V239M528.5 171V225M529.5 173V246M530.5 181V237M531.5 180V236M532.5 148V257M533.5 142V233M534.5 153V254M535.5 162V252M536.5 138V258M537.5 154V259M538.5 152V257M539.5 157V263M540.5 158V264M541.5 163V245M542.5 156V264M543.5 160V250M544.5 166V242M545.5 167V247M546.5 168V224M547.5 174V243M548.5 178V238M549.5 159V233M550.5 174V249M551.5 169V241M552.5 177V250M553.5 172V236M554.5 177V253M555.5 169V250M556.5 168V224M557.5 167V243M558.5 171V251M559.5 164V255M560.5 170V250M561.5 160V245M562.5 171V226M563.5 169V240M564.5 169V236M565.5 174V235M566.5 185V247M567.5 154V255M568.5 148V262M569.5 158V257M570.5 158V224M571.5 158V255M572.5 150V254M573.5 181V255M574.5 179V250M575.5 158V263M576.5 164V259M577.5 158V249M578.5 162V246M579.5 170V247M580.5 160V250M581.5 158V246M582.5 171V247M583.5 154V242M584.5 164V252M585.5 182V251M586.5 153V254M587.5 170V250M588.5 164V257M589.5 159V248M590.5 168V236M591.5 170V242M592.5 173V244M593.5 152V249M594.5 162V261M595.5 153V242M596.5 169V237M597.5 166V220M598.5 170V235M599.5 172V239M600.5 166V238M601.5 165V232M602.5 149V274M603.5 144V259M604.5 137V268M605.5 159V251M606.5 147V250M607.5 156V266M608.5 160V248M609.5 158V246M610.5 187V241M611.5 168V252M612.5 168V255M613.5 174V237M614.5 163V240M615.5 157V240M616.5 160V253M617.5 165V238M618.5 171V243M619.5 166V222M620.5 162V247M621.5 161V257M622.5 173V241M623.5 163V247M624.5 168V243M625.5 166V242M626.5 171V219M627.5 170V256M628.5 173V237M629.5 186V235M630.5 158V255M631.5 172V226M632.5 164V240M633.5 164V252M634.5 161V247M635.5 184V241M636.5 176V231M637.5 149V263M638.5 161V256M639.5 155V260M640.5 185V261M641.5 186V251M642.5 154V257M643.5 166V252M644.5 162V255M645.5 182V262M646.5 162V250M647.5 172V253M648.5 174V242M649.5 189V244M650.5 159V259M651.5 165V246M652.5 167V243M653.5 167V253M654.5 169V252M655.5 167V242M656.5 172V243M657.5 172V238M658.5 173V250M659.5 167V237M660.5 154V238M661.5 166V242M662.5 169V243M663.5 184V246M664.5 166V247M665.5 173V241M666.5 177V235M667.5 188V244M668.5 185V246M669.5 179V249M670.5 175V238M671.5 182V233M672.5 153V263M673.5 152V267M674.5 145V269M675.5 158V267M676.5 146V267M677.5 157V262M678.5 152V258M679.5 151V263M680.5 158V247M681.5 165V251M682.5 166V265M683.5 167V246M684.5 165V222M685.5 163V247M686.5 166V263M687.5 169V244M688.5 159V246M689.5 154V253M690.5 159V223M691.5 174V238M692.5 177V221M693.5 175V223M694.5 171V235M695.5 173V253M696.5 162V236M697.5 184V236M698.5 157V248M699.5 172V237M700.5 174V247M701.5 169V242M702.5 175V244M703.5 171V240M704.5 167V239M705.5 168V233M706.5 138V228M707.5 142V258M708.5 155V267M709.5 152V266M710.5 150V258M711.5 143V256M712.5 179V231M713.5 154V256M714.5 164V252M715.5 165V227M716.5 159V254M717.5 152V262M718.5 160V250M719.5 171V221M720.5 160V254M721.5 157V251M722.5 188V238M723.5 169V236M724.5 168V222M725.5 168V241M726.5 164V249M727.5 164V257M728.5 171V249M729.5 170V242M730.5 162V252M731.5 168V245M732.5 169V244M733.5 175V235M734.5 172V228M735.5 167V242M736.5 176V244M737.5 165V227M738.5 177V236M739.5 163V248M740.5 188V238M741.5 145V257M742.5 145V265M743.5 154V265M744.5 151V260M745.5 156V247M746.5 166V257M747.5 169V244M748.5 182V260M749.5 158V243M750.5 171V236M751.5 170V241M752.5 184V235M753.5 167V237M754.5 173V236M755.5 164V235M756.5 166V242M757.5 171V242M758.5 190V238M759.5 176V241M760.5 176V238M761.5 172V236M762.5 173V240M763.5 177V231M764.5 179V235M765.5 177V236M766.5 188V223M767.5 173V240M768.5 177V232M769.5 173V231M770.5 179V236M771.5 177V238M772.5 175V248M773.5 176V250M774.5 169V242M775.5 168V234M776.5 136V274M777.5 151V266M778.5 145V269M779.5 152V261M780.5 162V255M781.5 157V254M782.5 158V255M783.5 153V262M784.5 145V227M785.5 162V240M786.5 166V245M787.5 151V262M788.5 169V248M789.5 168V251M790.5 165V250M791.5 169V243M792.5 171V245M793.5 171V242M794.5 184V243M795.5 161V229M796.5 159V223M797.5 167V249M798.5 175V239M799.5 166V244M800.5 168V242M801.5 163V244M802.5 174V242M803.5 159V246M804.5 187V239M805.5 175V248M806.5 173V240M807.5 182V232M808.5 174V220M809.5 168V248M810.5 171V235M811.5 145V261M812.5 140V259M813.5 161V264M814.5 156V249M815.5 139V261M816.5 151V257M817.5 150V266M818.5 145V250M819.5 162V259M820.5 156V250M821.5 151V250M822.5 165V247M823.5 149V265M824.5 161V259M825.5 160V226M826.5 162V248M827.5 167V260M828.5 149V250M829.5 149V229M830.5 172V246M831.5 162V251M832.5 158V247M833.5 158V251M834.5 180V249M835.5 162V244M836.5 170V245M837.5 172V245M838.5 176V240M839.5 176V246M840.5 168V248M841.5 172V243M842.5 176V240M843.5 174V236M844.5 174V233M845.5 178V239M846.5 136V270M847.5 154V270M848.5 141V261M849.5 139V265M850.5 152V264M851.5 158V260M852.5 139V260M853.5 143V270M854.5 150V256M855.5 148V256M856.5 185V263M857.5 156V250M858.5 156V249M859.5 165V259M860.5 161V253M861.5 167V241M862.5 169V244M863.5 158V262M864.5 155V248M865.5 161V248M866.5 167V237M867.5 157V251M868.5 170V240M869.5 176V240M870.5 170V237M871.5 171V221M872.5 171V243M873.5 176V226M874.5 172V246M875.5 173V227M876.5 177V251M877.5 168V244M878.5 174V246M879.5 171V239M880.5 185V231M881.5 160V255M882.5 152V259M883.5 142V258M884.5 154V265M885.5 151V258M886.5 154V260M887.5 166V254M888.5 161V243M889.5 164V247M890.5 147V259M891.5 161V253M892.5 167V255M893.5 165V242M894.5 167V247M895.5 172V245M896.5 154V241M897.5 188V253M898.5 160V241M899.5 165V253M900.5 180V262M901.5 169V255M902.5 169V242M903.5 168V241M904.5 170V221M905.5 169V243M906.5 159V243M907.5 188V226M908.5 173V250M909.5 187V246M910.5 169V245M911.5 167V226M912.5 174V246M913.5 167V246M914.5 172V239M915.5 176V264M916.5 155V257M917.5 144V265M918.5 151V261M919.5 142V270M920.5 150V267M921.5 155V224M922.5 168V227M923.5 155V248M924.5 163V252M925.5 168V259M926.5 164V254M927.5 161V246M928.5 168V248M929.5 166V248M930.5 160V246M931.5 169V250M932.5 170V247M933.5 159V251M934.5 152V259M935.5 161V226M936.5 170V246M937.5 174V245M938.5 176V240M939.5 177V246M940.5 179V217M941.5 175V244M942.5 169V231M943.5 177V234M944.5 165V242M945.5 165V240M946.5 171V239M947.5 166V244M948.5 161V249M949.5 179V237M950.5 136V266M951.5 150V260M952.5 152V263M953.5 145V268M954.5 143V264M955.5 155V269M956.5 179V259M957.5 157V263M958.5 184V252M959.5 188V245M960.5 162V257M961.5 172V244M962.5 154V245M963.5 169V245M964.5 156V243M965.5 173V250M966.5 157V249M967.5 172V249M968.5 157V257M969.5 159V260M970.5 162V253M971.5 158V256M972.5 170V242M973.5 167V248M974.5 175V233M975.5 178V235M976.5 177V238M977.5 180V238M978.5 177V238M979.5 178V240M980.5 177V234M981.5 177V236M982.5 175V241M983.5 168V245M984.5 161V242M985.5 150V271M986.5 151V274M987.5 149V269M988.5 163V251M989.5 145V261M990.5 142V259M991.5 142V271M992.5 178V260M993.5 166V255M994.5 151V255M995.5 156V222M996.5 157V256M997.5 166V264M998.5 164V250M999.5 187V226M1000.5 166V248M1001.5 152V259M1002.5 167V240M1003.5 167V245M1004.5 171V238M1005.5 168V242M1006.5 176V219M1007.5 173V245M1008.5 152V245M1009.5 165V243M1010.5 175V240M1011.5 190V235M1012.5 174V223M1013.5 177V238M1014.5 163V241M1015.5 179V236M1016.5 179V234M1017.5 180V236M1018.5 191V247M1019.5 172V234M1020.5 154V258M1021.5 150V235M1022.5 182V252M1023.5 156V257M1024.5 157V252M1025.5 180V254M1026.5 150V233M1027.5 157V244M1028.5 160V260M1029.5 164V247M1030.5 149V244M1031.5 155V257M1032.5 163V261M1033.5 165V256M1034.5 147V251M1035.5 167V251M1036.5 182V247M1037.5 164V248M1038.5 177V240M1039.5 173V245M1040.5 178V234M1041.5 166V235M1042.5 170V249M1043.5 160V248M1044.5 166V246M1045.5 170V240M1046.5 166V249M1047.5 186V256M1048.5 158V258M1049.5 167V247M1050.5 168V250M1051.5 171V245M1052.5 169V236M1053.5 166V240M1054.5 173V238M1055.5 148V256M1056.5 165V246M1057.5 162V251M1058.5 153V250M1059.5 185V261M1060.5 160V249M1061.5 167V248M1062.5 162V251M1063.5 166V245M1064.5 168V228M1065.5 152V253M1066.5 169V247M1067.5 168V237M1068.5 163V242M1069.5 170V249M1070.5 172V245M1071.5 166V238M1072.5 150V248M1073.5 157V245M1074.5 163V239M1075.5 159V246M1076.5 153V254M1077.5 165V253M1078.5 163V248M1079.5 175V242M1080.5 156V244M1081.5 167V250M1082.5 168V248M1083.5 173V240M1084.5 169V251M1085.5 188V245M1086.5 163V253M1087.5 168V239M1088.5 165V238M1089.5 170V241M1090.5 176V267M1091.5 140V271M1092.5 160V225M1093.5 154V249M1094.5 154V270M1095.5 160V261M1096.5 157V227M1097.5 169V251M1098.5 165V237M1099.5 173V240M1100.5 158V252M1101.5 158V246M1102.5 170V243M1103.5 158V225M1104.5 163V251M1105.5 154V221M1106.5 176V241M1107.5 165V259M1108.5 165V239M1109.5 172V242M1110.5 168V223M1111.5 179V242M1112.5 167V242M1113.5 169V238M1114.5 174V236M1115.5 188V249M1116.5 166V241M1117.5 162V244M1118.5 174V234M1119.5 182V246M1120.5 177V239M1121.5 180V233M1122.5 178V234M1123.5 167V222M1124.5 176V238M1125.5 140V264M1126.5 162V250M1127.5 152V251M1128.5 150V258M1129.5 186V248M1130.5 155V251M1131.5 166V243M1132.5 170V250M1133.5 158V239M1134.5 173V255M1135.5 162V244M1136.5 172V248M1137.5 166V240M1138.5 170V248M1139.5 163V250M1140.5 172V244M1141.5 168V241M1142.5 170V234M1143.5 177V244M1144.5 175V236M1145.5 168V242M1146.5 171V234M1147.5 170V239M1148.5 167V240M1149.5 175V243M1150.5 167V238M1151.5 175V242M1152.5 174V233M1153.5 177V232M1154.5 172V221M1155.5 171V241M1156.5 179V229M1157.5 177V231M1158.5 175V238M1159.5 145V262M1160.5 151V260M1161.5 139V270M1162.5 148V255M1163.5 151V255M1164.5 147V263M1165.5 145V271M1166.5 152V260M1167.5 151V228M1168.5 187V259M1169.5 162V252M1170.5 158V252M1171.5 167V241M1172.5 165V239M1173.5 176V241M1174.5 187V241M1175.5 166V256M1176.5 160V255M1177.5 159V257M1178.5 171V246M1179.5 162V226M1180.5 158V245M1181.5 154V252M1182.5 165V252M1183.5 157V255M1184.5 158V241M1185.5 164V249M1186.5 165V242M1187.5 169V241M1188.5 183V244M1189.5 183V237M1190.5 165V249M1191.5 172V237M1192.5 173V236M1193.5 179V241M1194.5 147V267M1195.5 185V253M1196.5 152V260M1197.5 184V260M1198.5 178V259M1199.5 150V248M1200.5 164V253M1201.5 164V243M1202.5 162V257M1203.5 162V250M1204.5 169V249M1205.5 169V249M1206.5 173V254M1207.5 169V240M1208.5 169V235M1209.5 170V242M1210.5 168V227M1211.5 177V236M1212.5 167V245M1213.5 162V226M1214.5 178V238M1215.5 166V232M1216.5 182V240M1217.5 166V237M1218.5 177V239M1219.5 168V233M1220.5 189V243M1221.5 164V249M1222.5 169V231M1223.5 190V235M1224.5 177V229M1225.5 178V231M1226.5 174V234M1227.5 191V232M1228.5 180V236M1229.5 145V269M1230.5 146V230M1231.5 183V269M1232.5 155V263M1233.5 146V262M1234.5 147V260M1235.5 145V268M1236.5 158V256M1237.5 162V265M1238.5 170V247M1239.5 159V247M1240.5 174V247M1241.5 154V245M1242.5 172V247M1243.5 171V255M1244.5 163V244M1245.5 166V245M1246.5 165V261M1247.5 166V243M1248.5 162V241M1249.5 176V242M1250.5 168V239M1251.5 166V235M1252.5 170V239M1253.5 160V254M1254.5 172V249M1255.5 160V237M1256.5 175V243M1257.5 175V235M1258.5 176V226M1259.5 161V234M1260.5 178V240M1261.5 163V234M1262.5 170V248M1263.5 171V248M1264.5 151V233M1265.5 160V257M1266.5 181V251M1267.5 168V245M1268.5 156V250M1269.5 148V258M1270.5 183V250M1271.5 159V257M1272.5 156V251M1273.5 166V254M1274.5 160V224M1275.5 166V252M1276.5 168V248M1277.5 167V227M1278.5 185V249M1279.5 167V244M1280.5 167V260M1281.5 164V248M1282.5 165V253M1283.5 164V252M1284.5 170V242M1285.5 170V245M1286.5 157V246M1287.5 172V225M1288.5 174V235M1289.5 177V238M1290.5 187V224M1291.5 169V244M1292.5 166V238M1293.5 172V243M1294.5 176V247M1295.5 177V222M1296.5 173V239M1297.5 178V245M1298.5 173V242M1299.5 158V257M1300.5 163V249M1301.5 156V257M1302.5 163V254M1303.5 154V256M1304.5 155V254M1305.5 163V226M1306.5 146V254M1307.5 167V255M1308.5 164V250M1309.5 163V232M1310.5 166V226M1311.5 168V242M1312.5 156V254M1313.5 166V244M1314.5 169V260M1315.5 168V259M1316.5 156V248M1317.5 160V244M1318.5 169V242M1319.5 163V239M1320.5 169V225M1321.5 166V241M1322.5 164V239M1323.5 169V224M1324.5 174V242M1325.5 168V236M1326.5 170V240M1327.5 188V234M1328.5 172V240M1329.5 177V232M1330.5 176V235M1331.5 173V242M1332.5 178V236M1333.5 174V236M1334.5 143V255M1335.5 169V246M1336.5 160V254M1337.5 160V258M1338.5 159V259M1339.5 155V251M1340.5 185V224M1341.5 164V242M1342.5 164V239M1343.5 164V243M1344.5 165V259M1345.5 171V244M1346.5 153V261M1347.5 162V248M1348.5 162V250M1349.5 170V242M1350.5 173V234M1351.5 152V259M1352.5 153V257M1353.5 157V247M1354.5 150V249M1355.5 170V243M1356.5 165V240M1357.5 173V250M1358.5 168V244M1359.5 174V238M1360.5 171V245M1361.5 172V246M1362.5 167V250M1363.5 165V226M1364.5 165V249M1365.5 172V246M1366.5 165V241M1367.5 189V238M1368.5 142V251M1369.5 161V253M1370.5 159V255M1371.5 161V245M1372.5 146V259M1373.5 181V258M1374.5 162V255M1375.5 156V259M1376.5 158V250M1377.5 162V227M1378.5 169V248M1379.5 185V260M1380.5 163V246M1381.5 151V247M1382.5 165V251M1383.5 190V248M1384.5 168V254M1385.5 161V244M1386.5 153V261M1387.5 157V228M1388.5 167V248M1389.5 165V244M1390.5 164V239M1391.5 167V235M1392.5 175V235M1393.5 178V240M1394.5 174V246M1395.5 175V248M1396.5 183V242M1397.5 173V238M1398.5 170V237M1399.5 190V234M1400.5 170V247M1401.5 169V246M1402.5 175V234M1403.5 164V262M1404.5 160V248M1405.5 166V255M1406.5 152V253M1407.5 164V251M1408.5 188V253M1409.5 157V258M1410.5 160V261M1411.5 165V251M1412.5 153V253M1413.5 180V253M1414.5 184V222M1415.5 183V250M1416.5 165V251M1417.5 169V242M1418.5 180V243M1419.5 171V238M1420.5 176V224M1421.5 156V253M1422.5 165V243M1423.5 166V223M1424.5 164V249M1425.5 169V243M1426.5 190V236M1427.5 176V222M1428.5 176V236M1429.5 167V249M1430.5 178V250M1431.5 163V247M1432.5 183V257M1433.5 174V239M1434.5 168V239M1435.5 170V236M1436.5 170V235M1437.5 172V233M1438.5 158V257M1439.5 181V257M1440.5 155V250M1441.5 153V260M1442.5 163V229M1443.5 151V247M1444.5 178V262M1445.5 164V262M1446.5 160V250M1447.5 160V251M1448.5 167V239M1449.5 173V241M1450.5 173V225M1451.5 156V251M1452.5 168V259M1453.5 166V248M1454.5 160V240M1455.5 163V238M1456.5 182V252M1457.5 163V248M1458.5 166V249M1459.5 167V240M1460.5 169V244M1461.5 174V233M1462.5 172V237M1463.5 163V241M1464.5 169V242M1465.5 173V234M1466.5 167V238M1467.5 186V238M1468.5 170V239M1469.5 167V241M1470.5 164V247M1471.5 170V239M1472.5 164V231M1473.5 142V272M1474.5 156V262M1475.5 156V271M1476.5 156V269M1477.5 159V245M1478.5 161V255M1479.5 161V241M1480.5 170V245M1481.5 165V254M1482.5 168V241M1483.5 161V248M1484.5 175V238M1485.5 166V229M1486.5 175V248M1487.5 172V249M1488.5 173V246M1489.5 175V244M1490.5 164V255M1491.5 169V249M1492.5 166V246M1493.5 163V251M1494.5 183V242M1495.5 172V246M1496.5 188V223M1497.5 172V219M1498.5 186V236M1499.5 171V234M1500.5 172V235M1501.5 163V241M1502.5 168V243M1503.5 170V244M1504.5 179V245M1505.5 175V232M1506.5 162V240M1507.5 177V246M1508.5 142V254M1509.5 149V252M1510.5 167V252M1511.5 161V250M1512.5 163V244M1513.5 163V245M1514.5 154V247M1515.5 164V247M1516.5 171V240M1517.5 187V238M1518.5 180V237M1519.5 168V247M1520.5 167V242M1521.5 172V240M1522.5 161V240M1523.5 178V232M1524.5 176V234M1525.5 155V252M1526.5 159V257M1527.5 164V250M1528.5 156V251M1529.5 169V240M1530.5 171V240M1531.5 176V248M1532.5 171V249M1533.5 186V247M1534.5 172V238M1535.5 179V233M1536.5 172V235M1537.5 163V252M1538.5 164V242M1539.5 183V245M1540.5 161V250M1541.5 190V250M1542.5 179V243M1543.5 146V272M1544.5 185V259M1545.5 143V263M1546.5 144V264M1547.5 154V266M1548.5 158V250M1549.5 152V261M1550.5 165V255M1551.5 154V259M1552.5 163V226M1553.5 157V254M1554.5 154V254M1555.5 160V247M1556.5 150V260M1557.5 174V235M1558.5 174V243M1559.5 162V239M1560.5 167V254M1561.5 185V254M1562.5 160V242M1563.5 159V236M1564.5 175V238M1565.5 162V240M1566.5 172V244M1567.5 170V247M1568.5 175V233M1569.5 175V239M1570.5 174V236M1571.5 176V243M1572.5 170V243M1573.5 171V232M1574.5 170V244M1575.5 171V235M1576.5 168V220M1577.5 160V262M1578.5 164V254M1579.5 166V253M1580.5 161V249M1581.5 149V249M1582.5 166V265M1583.5 171V228M1584.5 163V250M1585.5 166V249M1586.5 167V259M1587.5 169V246M1588.5 177V239M1589.5 170V240M1590.5 173V221M1591.5 165V255M1592.5 168V245M1593.5 165V243M1594.5 176V219M1595.5 173V235M1596.5 169V225M1597.5 177V232M1598.5 179V236M1599.5 180V238M1600.5 163V236M1601.5 185V241M1602.5 171V242M1603.5 171V237M1604.5 174V246M1605.5 166V246M1606.5 166V236M1607.5 176V238M1608.5 170V237M1609.5 163V241M1610.5 171V241M1611.5 173V238M1612.5 138V265M1613.5 147V268M1614.5 156V267M1615.5 157V269M1616.5 144V254M1617.5 164V243M1618.5 171V247M1619.5 167V249M1620.5 161V250M1621.5 172V244M1622.5 152V248M1623.5 150V247M1624.5 158V246M1625.5 169V240M1626.5 177V240M1627.5 160V241M1628.5 180V241M1629.5 181V237M1630.5 171V247M1631.5 167V246M1632.5 166V243M1633.5 172V245M1634.5 157V238M1635.5 164V248M1636.5 170V244M1637.5 168V240M1638.5 166V240M1639.5 174V237M1640.5 172V239M1641.5 187V239M1642.5 167V243M1643.5 177V225M1644.5 169V244M1645.5 183V233M1646.5 180V236M1647.5 156V246M1648.5 157V224M1649.5 142V255M1650.5 154V270M1651.5 147V265M1652.5 148V258M1653.5 164V249M1654.5 167V250M1655.5 158V222M1656.5 160V245M1657.5 166V250M1658.5 184V239M1659.5 177V235M1660.5 180V231M1661.5 170V247M1662.5 174V220M1663.5 161V222M1664.5 190V248M1665.5 172V235M1666.5 176V254M1667.5 168V242M1668.5 172V233M1669.5 166V234M1670.5 175V231M1671.5 183V236M1672.5 179V228M1673.5 175V234M1674.5 181V236M1675.5 174V225M1676.5 164V243M1677.5 168V253M1678.5 191V246M1679.5 169V239M1680.5 175V247M1681.5 176V239M1682.5 164V248M1683.5 155V253M1684.5 169V251M1685.5 148V243M1686.5 151V242M1687.5 153V254M1688.5 167V245M1689.5 164V251M1690.5 155V252M1691.5 159V238M1692.5 166V240M1693.5 170V243M1694.5 178V236M1695.5 178V248M1696.5 180V247M1697.5 175V238M1698.5 167V218M1699.5 189V241M1700.5 152V240M1701.5 170V245M1702.5 173V240M1703.5 172V235M1704.5 177V240M1705.5 180V240M1706.5 182V217M1707.5 171V234M1708.5 170V241M1709.5 178V232M1710.5 190V243M1711.5 168V238M1712.5 171V243M1713.5 175V240M1714.5 164V227M1715.5 173V249M1716.5 162V245M1717.5 135V274M1718.5 145V235M1719.5 139V270M1720.5 151V262M1721.5 145V259M1722.5 158V267M1723.5 185V258M1724.5 152V255M1725.5 166V250M1726.5 163V247M1727.5 164V249M1728.5 169V244M1729.5 174V244M1730.5 157V238M1731.5 171V249M1732.5 173V240M1733.5 174V245M1734.5 152V255M1735.5 159V255M1736.5 165V225M1737.5 172V241M1738.5 174V245M1739.5 174V240M1740.5 174V241M1741.5 165V235M1742.5 170V221M1743.5 179V239M1744.5 177V245M1745.5 169V249M1746.5 172V237M1747.5 174V245M1748.5 161V244M1749.5 174V242M1750.5 167V249M1751.5 177V237M1752.5 153V261M1753.5 177V253M1754.5 158V261M1755.5 156V230M1756.5 154V255M1757.5 152V254M1758.5 156V256M1759.5 163V263M1760.5 169V251M1761.5 171V244M1762.5 175V245M1763.5 169V250M1764.5 177V256M1765.5 167V236M1766.5 162V240M1767.5 181V256M1768.5 171V237M1769.5 174V259M1770.5 167V234M1771.5 171V245M1772.5 161V251M1773.5 168V246M1774.5 159V246M1775.5 169V238M1776.5 171V249M1777.5 163V225M1778.5 176V234M1779.5 175V242M1780.5 169V234M1781.5 172V248M1782.5 182V228M1783.5 179V230M1784.5 172V230M1785.5 176V242M1786.5 163V223M1787.5 163V253M1788.5 165V265M1789.5 159V224M1790.5 166V256M1791.5 162V244M1792.5 158V262M1793.5 165V254M1794.5 155V244M1795.5 159V252M1796.5 155V240M1797.5 161V222M1798.5 164V242M1799.5 170V249M1800.5 167V251M1801.5 157V236M1802.5 171V242M1803.5 168V241M1804.5 186V264M1805.5 161V259M1806.5 153V244M1807.5 164V244M1808.5 183V243M1809.5 178V237M1810.5 175V235M1811.5 175V242M1812.5 175V233M1813.5 183V234M1814.5 174V229M1815.5 171V235M1816.5 168V234M1817.5 170V238M1818.5 177V234M1819.5 182V224M1820.5 172V243M1821.5 149V262M1822.5 151V243M1823.5 151V255M1824.5 155V247M1825.5 158V250M1826.5 161V243M1827.5 165V243M1828.5 161V246M1829.5 161V244M1830.5 172V258M1831.5 174V246M1832.5 171V239M1833.5 168V246M1834.5 176V240M1835.5 165V240M1836.5 159V243M1837.5 156V248M1838.5 188V241M1839.5 155V249M1840.5 152V250M1841.5 158V254M1842.5 172V224M1843.5 157V247M1844.5 164V245M1845.5 168V250M1846.5 184V248M1847.5 159V238M1848.5 169V235M1849.5 167V240M1850.5 158V249M1851.5 168V242M1852.5 161V248M1853.5 190V239M1854.5 167V244M1855.5 169V234M1856.5 147V271M1857.5 173V264M1858.5 144V268M1859.5 179V268M1860.5 160V249M1861.5 159V251M1862.5 161V259M1863.5 166V247M1864.5 163V239M1865.5 162V248M1866.5 170V241M1867.5 168V244M1868.5 182V247M1869.5 162V240M1870.5 166V243M1871.5 165V237M1872.5 169V238M1873.5 178V232M1874.5 186V244M1875.5 174V249M1876.5 171V238M1877.5 175V238M1878.5 177V246M1879.5 177V229M1880.5 181V235M1881.5 179V236M1882.5 172V241M1883.5 173V239M1884.5 178V219M1885.5 170V246M1886.5 167V239M1887.5 162V243M1888.5 173V223M1889.5 174V246M1890.5 166V236M1891.5 158V260M1892.5 147V263M1893.5 156V229M1894.5 146V259M1895.5 143V258M1896.5 157V253" stroke="#3232c8" stroke-width="1" fill="none"/><path d="M132.5 191V218M133.5 191V218M134.5 192V217M135.5 191V218M136.5 191V218M137.5 190V219M138.5 192V217M139.5 192V217M140.5 190V219M141.5 190V219M142.5 191V218M143.5 190V219M144.5 190V219M145.5 191V218M146.5 191V218M147.5 191V218M148.5 190V219M149.5 186V223M150.5 187V222M151.5 188V221M152.5 188V221M153.5 188V221M154.5 188V221M155.5 187V222M156.5 189V220M157.5 189V220M158.5 188V221M159.5 190V219M160.5 191V218M161.5 190V219M162.5 191V218M163.5 191V218M164.5 192V217M165.5 192V217M166.5 191V218M167.5 189V220M168.5 191V218M169.5 192V217M170.5 191V218M171.5 193V216M172.5 192V217M173.5 193V216M174.5 192V217M175.5 191V218M176.5 193V216M177.5 194V215M178.5 193V216M179.5 194V215M180.5 193V216M181.5 194V215M182.5 194V215M183.5 195V214M184.5 188V221M185.5 189V220M186.5 188V221M187.5 190V219M188.5 190V219M189.5 189V220M190.5 190V219M191.5 190V219M192.5 191V218M193.5 189V220M194.5 191V218M195.5 192V217M196.5 191V218M197.5 191V218M198.5 190V219M199.5 190V219M200.5 191V218M201.5 189V220M202.5 189V220M203.5 190V219M204.5 190V219M205.5 190V219M206.5 191V218M207.5 191V218M208.5 192V217M209.5 192V217M210.5 193V216M211.5 192V217M212.5 192V217M213.5 191V218M214.5 192V217M215.5 191V218M216.5 193V216M217.5 193V216M218.5 191V218M219.5 188V221M220.5 187V222M221.5 186V223M222.5 188V221M223.5 187V222M224.5 188V221M225.5 188V221M226.5 189V220M227.5 190V219M228.5 190V219M229.5 189V220M230.5 188V221M231.5 188V221M232.5 190V219M233.5 190V219M234.5 190V219M235.5 189V220M236.5 188V221M237.5 189V220M238.5 190V219M239.5 189V220M240.5 190V219M241.5 190V219M242.5 190V219M243.5 191V218M244.5 190V219M245.5 190V219M246.5 191V218M247.5 191V218M248.5 191V218M249.5 191V218M250.5 191V218M251.5 191V218M252.5 192V217M253.5 192V217M254.5 187V222M255.5 189V220M256.5 188V221M257.5 190V219M258.5 191V218M259.5 191V218M260.5 191V218M261.5 192V217M262.5 192V217M263.5 191V218M264.5 191V218M265.5 192V217M266.5 192V217M267.5 192V217M268.5 192V217M269.5 193V216M270.5 192V217M271.5 192V217M272.5 191V218M273.5 191V218M274.5 190V219M275.5 191V218M276.5 193V216M277.5 193V216M278.5 192V217M279.5 192V217M280.5 192V217M281.5 193V216M282.5 193V216M283.5 192V217M284.5 192V217M285.5 192V217M286.5 193V216M287.5 193V216M288.5 187V222M289.5 186V223M290.5 188V221M291.5 187V222M292.5 188V221M293.5 189V220M294.5 190V219M295.5 190V219M296.5 190V219M297.5 189V220M298.5 189V220M299.5 188V221M300.5 190V219M301.5 190V219M302.5 190V219M303.5 191V218M304.5 192V217M305.5 191V218M306.5 189V220M307.5 190V219M308.5 192V217M309.5 191V218M310.5 192V217M311.5 191V218M312.5 191V218M313.5 192V217M314.5 191V218M315.5 192V217M316.5 192V217M317.5 190V219M318.5 191V218M319.5 192V217M320.5 191V218M321.5 191V218M322.5 191V218M323.5 187V222M324.5 188V221M325.5 189V220M326.5 188V221M327.5 189V220M328.5 189V220M329.5 191V218M330.5 191V218M331.5 192V217M332.5 191V218M333.5 191V218M334.5 192V217M335.5 193V216M336.5 191V218M337.5 191V218M338.5 192V217M339.5 189V220M340.5 192V217M341.5 192V217M342.5 192V217M343.5 192V217M344.5 192V217M345.5 191V218M346.5 191V218M347.5 191V218M348.5 192V217M349.5 192V217M350.5 191V218M351.5 191V218M352.5 190V219M353.5 190V219M354.5 192V217M355.5 190V219M356.5 191V218M357.5 193V216M358.5 187V222M359.5 187V222M360.5 189V220M361.5 189V220M362.5 188V221M363.5 189V220M364.5 190V219M365.5 190V219M366.5 190V219M367.5 191V218M368.5 190V219M369.5 190V219M370.5 190V219M371.5 191V218M372.5 189V220M373.5 190V219M374.5 189V220M375.5 190V219M376.5 190V219M377.5 191V218M378.5 192V217M379.5 191V218M380.5 191V218M381.5 189V220M382.5 189V220M383.5 191V218M384.5 192V217M385.5 192V217M386.5 190V219M387.5 192V217M388.5 191V218M389.5 190V219M390.5 190V219M391.5 190V219M392.5 191V218M393.5 185V224M394.5 186V223M395.5 187V222M396.5 188V221M397.5 187V222M398.5 188V221M399.5 188V221M400.5 189V220M401.5 189V220M402.5 189V220M403.5 189V220M404.5 189V220M405.5 191V218M406.5 191V218M407.5 191V218M408.5 190V219M409.5 191V218M410.5 190V219M411.5 190V219M412.5 191V218M413.5 191V218M414.5 192V217M415.5 193V216M416.5 193V216M417.5 192V217M418.5 193V216M419.5 191V218M420.5 192V217M421.5 190V219M422.5 192V217M423.5 191V218M424.5 191V218M425.5 191V218M426.5 193V216M427.5 193V216M428.5 187V222M429.5 189V220M430.5 188V221M431.5 188V221M432.5 188V221M433.5 188V221M434.5 189V220M435.5 190V219M436.5 189V220M437.5 191V218M438.5 190V219M439.5 191V218M440.5 191V218M441.5 192V217M442.5 191V218M443.5 191V218M444.5 191V218M445.5 191V218M446.5 190V219M447.5 190V219M448.5 192V217M449.5 191V218M450.5 192V217M451.5 191V218M452.5 193V216M453.5 191V218M454.5 191V218M455.5 194V215M456.5 194V215M457.5 193V216M458.5 191V218M459.5 192V217M460.5 192V217M461.5 194V215M462.5 194V215M463.5 186V223M464.5 186V223M465.5 188V221M466.5 189V220M467.5 188V221M468.5 188V221M469.5 189V220M470.5 190V219M471.5 192V217M472.5 191V218M473.5 190V219M474.5 190V219M475.5 189V220M476.5 189V220M477.5 190V219M478.5 190V219M479.5 192V217M480.5 190V219M481.5 190V219M482.5 190V219M483.5 191V218M484.5 192V217M485.5 193V216M486.5 194V215M487.5 193V216M488.5 193V216M489.5 194V215M490.5 193V216M491.5 194V215M492.5 194V215M493.5 194V215M494.5 192V217M495.5 193V216M496.5 193V216M497.5 189V220M498.5 190V219M499.5 189V220M500.5 190V219M501.5 191V218M502.5 190V219M503.5 189V220M504.5 191V218M505.5 190V219M506.5 191V218M507.5 192V217M508.5 192V217M509.5 192V217M510.5 191V218M511.5 192V217M512.5 192V217M513.5 192V217M514.5 193V216M515.5 190V219M516.5 191V218M517.5 191V218M518.5 191V218M519.5 191V218M520.5 192V217M521.5 192V217M522.5 193V216M523.5 192V217M524.5 193V216M525.5 192V217M526.5 192V217M527.5 192V217M528.5 192V217M529.5 191V218M530.5 193V216M531.5 193V216M532.5 186V223M533.5 188V221M534.5 187V222M535.5 188V221M536.5 188V221M537.5 186V223M538.5 187V222M539.5 188V221M540.5 188V221M541.5 190V219M542.5 190V219M543.5 190V219M544.5 190V219M545.5 191V218M546.5 191V218M547.5 191V218M548.5 192V217M549.5 192V217M550.5 191V218M551.5 191V218M552.5 192V217M553.5 192V217M554.5 193V216M555.5 191V218M556.5 191V218M557.5 192V217M558.5 191V218M559.5 190V219M560.5 190V219M561.5 189V220M562.5 190V219M563.5 192V217M564.5 191V218M565.5 191V218M566.5 192V217M567.5 187V222M568.5 187V222M569.5 187V222M570.5 188V221M571.5 188V221M572.5 188V221M573.5 189V220M574.5 189V220M575.5 189V220M576.5 187V222M577.5 189V220M578.5 188V221M579.5 190V219M580.5 189V220M581.5 189V220M582.5 191V218M583.5 189V220M584.5 190V219M585.5 188V221M586.5 189V220M587.5 190V219M588.5 191V218M589.5 189V220M590.5 191V218M591.5 190V219M592.5 190V219M593.5 189V220M594.5 190V219M595.5 190V219M596.5 191V218M597.5 191V218M598.5 192V217M599.5 192V217M600.5 193V216M601.5 192V217M602.5 186V223M603.5 186V223M604.5 186V223M605.5 188V221M606.5 189V220M607.5 189V220M608.5 189V220M609.5 189V220M610.5 190V219M611.5 189V220M612.5 191V218M613.5 192V217M614.5 191V218M615.5 190V219M616.5 191V218M617.5 191V218M618.5 192V217M619.5 189V220M620.5 190V219M621.5 189V220M622.5 191V218M623.5 190V219M624.5 192V217M625.5 192V217M626.5 192V217M627.5 191V218M628.5 192V217M629.5 191V218M630.5 190V219M631.5 191V218M632.5 191V218M633.5 191V218M634.5 191V218M635.5 191V218M636.5 193V216M637.5 188V221M638.5 189V220M639.5 187V222M640.5 188V221M641.5 189V220M642.5 189V220M643.5 190V219M644.5 188V221M645.5 190V219M646.5 191V218M647.5 191V218M648.5 192V217M649.5 192V217M650.5 190V219M651.5 191V218M652.5 191V218M653.5 190V219M654.5 190V219M655.5 192V217M656.5 192V217M657.5 191V218M658.5 191V218M659.5 191V218M660.5 191V218M661.5 191V218M662.5 191V218M663.5 191V218M664.5 191V218M665.5 192V217M666.5 192V217M667.5 191V218M668.5 192V217M669.5 193V216M670.5 192V217M671.5 193V216M672.5 187V222M673.5 187V222M674.5 187V222M675.5 187V222M676.5 188V221M677.5 188V221M678.5 188V221M679.5 188V221M680.5 189V220M681.5 190V219M682.5 189V220M683.5 190V219M684.5 189V220M685.5 189V220M686.5 190V219M687.5 191V218M688.5 191V218M689.5 189V220M690.5 189V220M691.5 191V218M692.5 192V217M693.5 193V216M694.5 193V216M695.5 190V219M696.5 192V217M697.5 192V217M698.5 191V218M699.5 192V217M700.5 192V217M701.5 191V218M702.5 192V217M703.5 191V218M704.5 192V217M705.5 191V218M706.5 187V222M707.5 186V223M708.5 188V221M709.5 186V223M710.5 187V222M711.5 186V223M712.5 188V221M713.5 188V221M714.5 188V221M715.5 189V220M716.5 189V220M717.5 188V221M718.5 189V220M719.5 190V219M720.5 191V218M721.5 189V220M722.5 190V219M723.5 190V219M724.5 189V220M725.5 189V220M726.5 189V220M727.5 190V219M728.5 191V218M729.5 189V220M730.5 189V220M731.5 191V218M732.5 190V219M733.5 192V217M734.5 190V219M735.5 191V218M736.5 191V218M737.5 191V218M738.5 192V217M739.5 190V219M740.5 192V217M741.5 188V221M742.5 189V220M743.5 187V222M744.5 187V222M745.5 189V220M746.5 189V220M747.5 190V219M748.5 189V220M749.5 190V219M750.5 191V218M751.5 191V218M752.5 191V218M753.5 192V217M754.5 192V217M755.5 192V217M756.5 190V219M757.5 192V217M758.5 193V216M759.5 191V218M760.5 192V217M761.5 192V217M762.5 193V216M763.5 193V216M764.5 193V216M765.5 193V216M766.5 193V216M767.5 193V216M768.5 192V217M769.5 192V217M770.5 192V217M771.5 193V216M772.5 193V216M773.5 192V217M774.5 192V217M775.5 192V217M776.5 184V225M777.5 187V222M778.5 185V224M779.5 187V222M780.5 187V222M781.5 187V222M782.5 188V221M783.5 186V223M784.5 188V221M785.5 190V219M786.5 190V219M787.5 189V220M788.5 190V219M789.5 189V220M790.5 189V220M791.5 190V219M792.5 191V218M793.5 191V218M794.5 190V219M795.5 190V219M796.5 190V219M797.5 190V219M798.5 191V218M799.5 191V218M800.5 191V218M801.5 190V219M802.5 191V218M803.5 189V220M804.5 192V217M805.5 192V217M806.5 192V217M807.5 193V216M808.5 192V217M809.5 191V218M810.5 192V217M811.5 186V223M812.5 186V223M813.5 187V222M814.5 188V221M815.5 187V222M816.5 186V223M817.5 187V222M818.5 188V221M819.5 188V221M820.5 187V222M821.5 187V222M822.5 189V220M823.5 188V221M824.5 187V222M825.5 188V221M826.5 189V220M827.5 189V220M828.5 188V221M829.5 190V219M830.5 190V219M831.5 189V220M832.5 189V220M833.5 189V220M834.5 190V219M835.5 190V219M836.5 191V218M837.5 190V219M838.5 191V218M839.5 191V218M840.5 192V217M841.5 191V218M842.5 192V217M843.5 192V217M844.5 192V217M845.5 192V217M846.5 184V225M847.5 186V223M848.5 185V224M849.5 187V222M850.5 185V224M851.5 187V222M852.5 185V224M853.5 186V223M854.5 186V223M855.5 188V221M856.5 188V221M857.5 188V221M858.5 189V220M859.5 188V221M860.5 190V219M861.5 190V219M862.5 188V221M863.5 189V220M864.5 189V220M865.5 190V219M866.5 191V218M867.5 192V217M868.5 192V217M869.5 191V218M870.5 192V217M871.5 192V217M872.5 191V218M873.5 191V218M874.5 191V218M875.5 191V218M876.5 192V217M877.5 190V219M878.5 191V218M879.5 193V216M880.5 192V217M881.5 187V222M882.5 188V221M883.5 188V221M884.5 187V222M885.5 188V221M886.5 188V221M887.5 189V220M888.5 190V219M889.5 191V218M890.5 190V219M891.5 189V220M892.5 191V218M893.5 190V219M894.5 191V218M895.5 191V218M896.5 191V218M897.5 191V218M898.5 191V218M899.5 190V219M900.5 188V221M901.5 190V219M902.5 191V218M903.5 191V218M904.5 191V218M905.5 190V219M906.5 189V220M907.5 190V219M908.5 190V219M909.5 191V218M910.5 190V219M911.5 191V218M912.5 190V219M913.5 190V219M914.5 191V218M915.5 187V222M916.5 185V224M917.5 186V223M918.5 185V224M919.5 186V223M920.5 187V222M921.5 189V220M922.5 189V220M923.5 188V221M924.5 190V219M925.5 189V220M926.5 190V219M927.5 189V220M928.5 189V220M929.5 189V220M930.5 190V219M931.5 189V220M932.5 191V218M933.5 190V219M934.5 189V220M935.5 190V219M936.5 191V218M937.5 191V218M938.5 192V217M939.5 193V216M940.5 193V216M941.5 192V217M942.5 193V216M943.5 194V215M944.5 192V217M945.5 192V217M946.5 192V217M947.5 190V219M948.5 192V217M949.5 192V217M950.5 187V222M951.5 188V221M952.5 188V221M953.5 187V222M954.5 187V222M955.5 188V221M956.5 187V222M957.5 187V222M958.5 189V220M959.5 190V219M960.5 191V218M961.5 190V219M962.5 191V218M963.5 190V219M964.5 191V218M965.5 191V218M966.5 191V218M967.5 192V217M968.5 187V222M969.5 189V220M970.5 190V219M971.5 188V221M972.5 191V218M973.5 191V218M974.5 192V217M975.5 193V216M976.5 193V216M977.5 192V217M978.5 193V216M979.5 193V216M980.5 193V216M981.5 194V215M982.5 192V217M983.5 191V218M984.5 190V219M985.5 186V223M986.5 185V224M987.5 186V223M988.5 188V221M989.5 188V221M990.5 188V221M991.5 187V222M992.5 188V221M993.5 189V220M994.5 189V220M995.5 189V220M996.5 189V220M997.5 188V221M998.5 190V219M999.5 190V219M1000.5 190V219M1001.5 188V221M1002.5 190V219M1003.5 190V219M1004.5 190V219M1005.5 190V219M1006.5 192V217M1007.5 191V218M1008.5 189V220M1009.5 190V219M1010.5 192V217M1011.5 191V218M1012.5 192V217M1013.5 192V217M1014.5 192V217M1015.5 192V217M1016.5 193V216M1017.5 193V216M1018.5 193V216M1019.5 192V217M1020.5 187V222M1021.5 186V223M1022.5 188V221M1023.5 188V221M1024.5 188V221M1025.5 187V222M1026.5 187V222M1027.5 189V220M1028.5 190V219M1029.5 190V219M1030.5 190V219M1031.5 189V220M1032.5 189V220M1033.5 189V220M1034.5 190V219M1035.5 190V219M1036.5 191V218M1037.5 190V219M1038.5 192V217M1039.5 190V219M1040.5 192V217M1041.5 192V217M1042.5 190V219M1043.5 191V218M1044.5 191V218M1045.5 190V219M1046.5 189V220M1047.5 188V221M1048.5 188V221M1049.5 189V220M1050.5 189V220M1051.5 190V219M1052.5 191V218M1053.5 190V219M1054.5 192V217M1055.5 188V221M1056.5 188V221M1057.5 188V221M1058.5 188V221M1059.5 187V222M1060.5 189V220M1061.5 190V219M1062.5 190V219M1063.5 190V219M1064.5 191V218M1065.5 191V218M1066.5 191V218M1067.5 191V218M1068.5 190V219M1069.5 190V219M1070.5 192V217M1071.5 191V218M1072.5 188V221M1073.5 189V220M1074.5 190V219M1075.5 189V220M1076.5 189V220M1077.5 190V219M1078.5 190V219M1079.5 191V218M1080.5 190V219M1081.5 190V219M1082.5 190V219M1083.5 190V219M1084.5 191V218M1085.5 191V218M1086.5 191V218M1087.5 190V219M1088.5 191V218M1089.5 192V217M1090.5 185V224M1091.5 187V222M1092.5 188V221M1093.5 188V221M1094.5 187V222M1095.5 188V221M1096.5 188V221M1097.5 190V219M1098.5 190V219M1099.5 191V218M1100.5 189V220M1101.5 189V220M1102.5 191V218M1103.5 189V220M1104.5 191V218M1105.5 191V218M1106.5 192V217M1107.5 190V219M1108.5 191V218M1109.5 192V217M1110.5 192V217M1111.5 192V217M1112.5 190V219M1113.5 191V218M1114.5 191V218M1115.5 191V218M1116.5 191V218M1117.5 191V218M1118.5 192V217M1119.5 193V216M1120.5 192V217M1121.5 192V217M1122.5 192V217M1123.5 190V219M1124.5 192V217M1125.5 187V222M1126.5 188V221M1127.5 188V221M1128.5 187V222M1129.5 189V220M1130.5 189V220M1131.5 190V219M1132.5 191V218M1133.5 191V218M1134.5 191V218M1135.5 191V218M1136.5 191V218M1137.5 191V218M1138.5 189V220M1139.5 190V219M1140.5 191V218M1141.5 190V219M1142.5 191V218M1143.5 190V219M1144.5 192V217M1145.5 191V218M1146.5 192V217M1147.5 192V217M1148.5 191V218M1149.5 191V218M1150.5 192V217M1151.5 192V217M1152.5 192V217M1153.5 193V216M1154.5 193V216M1155.5 192V217M1156.5 193V216M1157.5 194V215M1158.5 193V216M1159.5 186V223M1160.5 188V221M1161.5 186V223M1162.5 187V222M1163.5 188V221M1164.5 186V223M1165.5 187V222M1166.5 188V221M1167.5 188V221M1168.5 188V221M1169.5 188V221M1170.5 190V219M1171.5 190V219M1172.5 190V219M1173.5 191V218M1174.5 191V218M1175.5 190V219M1176.5 189V220M1177.5 189V220M1178.5 190V219M1179.5 190V219M1180.5 191V218M1181.5 189V220M1182.5 189V220M1183.5 191V218M1184.5 190V219M1185.5 189V220M1186.5 189V220M1187.5 191V218M1188.5 191V218M1189.5 191V218M1190.5 191V218M1191.5 191V218M1192.5 193V216M1193.5 192V217M1194.5 186V223M1195.5 187V222M1196.5 187V222M1197.5 187V222M1198.5 187V222M1199.5 189V220M1200.5 190V219M1201.5 189V220M1202.5 189V220M1203.5 190V219M1204.5 190V219M1205.5 191V218M1206.5 191V218M1207.5 191V218M1208.5 191V218M1209.5 191V218M1210.5 190V219M1211.5 192V217M1212.5 191V218M1213.5 191V218M1214.5 192V217M1215.5 192V217M1216.5 193V216M1217.5 192V217M1218.5 192V217M1219.5 192V217M1220.5 192V217M1221.5 191V218M1222.5 193V216M1223.5 194V215M1224.5 194V215M1225.5 194V215M1226.5 194V215M1227.5 194V215M1228.5 194V215M1229.5 187V222M1230.5 187V222M1231.5 186V223M1232.5 188V221M1233.5 187V222M1234.5 187V222M1235.5 189V220M1236.5 189V220M1237.5 189V220M1238.5 191V218M1239.5 190V219M1240.5 191V218M1241.5 190V219M1242.5 191V218M1243.5 191V218M1244.5 192V217M1245.5 191V218M1246.5 190V219M1247.5 191V218M1248.5 192V217M1249.5 192V217M1250.5 192V217M1251.5 191V218M1252.5 192V217M1253.5 191V218M1254.5 190V219M1255.5 192V217M1256.5 192V217M1257.5 192V217M1258.5 192V217M1259.5 192V217M1260.5 192V217M1261.5 192V217M1262.5 191V218M1263.5 193V216M1264.5 187V222M1265.5 188V221M1266.5 190V219M1267.5 190V219M1268.5 189V220M1269.5 190V219M1270.5 188V221M1271.5 190V219M1272.5 189V220M1273.5 190V219M1274.5 190V219M1275.5 189V220M1276.5 190V219M1277.5 190V219M1278.5 189V220M1279.5 189V220M1280.5 190V219M1281.5 189V220M1282.5 189V220M1283.5 190V219M1284.5 190V219M1285.5 191V218M1286.5 191V218M1287.5 191V218M1288.5 191V218M1289.5 193V216M1290.5 192V217M1291.5 193V216M1292.5 192V217M1293.5 191V218M1294.5 192V217M1295.5 192V217M1296.5 193V216M1297.5 193V216M1298.5 192V217M1299.5 188V221M1300.5 188V221M1301.5 189V220M1302.5 188V221M1303.5 189V220M1304.5 188V221M1305.5 190V219M1306.5 189V220M1307.5 190V219M1308.5 188V221M1309.5 189V220M1310.5 189V220M1311.5 189V220M1312.5 189V220M1313.5 189V220M1314.5 189V220M1315.5 189V220M1316.5 188V221M1317.5 190V219M1318.5 189V220M1319.5 190V219M1320.5 192V217M1321.5 190V219M1322.5 190V219M1323.5 190V219M1324.5 191V218M1325.5 190V219M1326.5 192V217M1327.5 193V216M1328.5 191V218M1329.5 193V216M1330.5 192V217M1331.5 192V217M1332.5 193V216M1333.5 193V216M1334.5 188V221M1335.5 189V220M1336.5 189V220M1337.5 189V220M1338.5 187V222M1339.5 189V220M1340.5 190V219M1341.5 190V219M1342.5 191V218M1343.5 191V218M1344.5 190V219M1345.5 191V218M1346.5 189V220M1347.5 189V220M1348.5 190V219M1349.5 189V220M1350.5 192V217M1351.5 189V220M1352.5 188V221M1353.5 189V220M1354.5 190V219M1355.5 189V220M1356.5 189V220M1357.5 189V220M1358.5 191V218M1359.5 191V218M1360.5 191V218M1361.5 191V218M1362.5 191V218M1363.5 189V220M1364.5 190V219M1365.5 191V218M1366.5 191V218M1367.5 193V216M1368.5 189V220M1369.5 188V221M1370.5 189V220M1371.5 190V219M1372.5 188V221M1373.5 189V220M1374.5 189V220M1375.5 189V220M1376.5 190V219M1377.5 189V220M1378.5 190V219M1379.5 190V219M1380.5 189V220M1381.5 189V220M1382.5 189V220M1383.5 192V217M1384.5 190V219M1385.5 189V220M1386.5 187V222M1387.5 189V220M1388.5 190V219M1389.5 189V220M1390.5 191V218M1391.5 191V218M1392.5 191V218M1393.5 192V217M1394.5 191V218M1395.5 190V219M1396.5 191V218M1397.5 192V217M1398.5 190V219M1399.5 191V218M1400.5 192V217M1401.5 192V217M1402.5 192V217M1403.5 188V221M1404.5 188V221M1405.5 189V220M1406.5 189V220M1407.5 190V219M1408.5 190V219M1409.5 189V220M1410.5 189V220M1411.5 189V220M1412.5 190V219M1413.5 189V220M1414.5 190V219M1415.5 190V219M1416.5 189V220M1417.5 190V219M1418.5 190V219M1419.5 191V218M1420.5 191V218M1421.5 189V220M1422.5 191V218M1423.5 192V217M1424.5 190V219M1425.5 190V219M1426.5 192V217M1427.5 191V218M1428.5 191V218M1429.5 191V218M1430.5 192V217M1431.5 189V220M1432.5 190V219M1433.5 191V218M1434.5 191V218M1435.5 191V218M1436.5 192V217M1437.5 192V217M1438.5 187V222M1439.5 188V221M1440.5 189V220M1441.5 188V221M1442.5 189V220M1443.5 189V220M1444.5 188V221M1445.5 190V219M1446.5 190V219M1447.5 189V220M1448.5 191V218M1449.5 191V218M1450.5 191V218M1451.5 189V220M1452.5 190V219M1453.5 190V219M1454.5 190V219M1455.5 191V218M1456.5 190V219M1457.5 190V219M1458.5 190V219M1459.5 191V218M1460.5 191V218M1461.5 193V216M1462.5 192V217M1463.5 191V218M1464.5 191V218M1465.5 192V217M1466.5 191V218M1467.5 190V219M1468.5 190V219M1469.5 190V219M1470.5 191V218M1471.5 191V218M1472.5 192V217M1473.5 186V223M1474.5 187V222M1475.5 188V221M1476.5 187V222M1477.5 189V220M1478.5 188V221M1479.5 190V219M1480.5 190V219M1481.5 189V220M1482.5 190V219M1483.5 189V220M1484.5 191V218M1485.5 190V219M1486.5 191V218M1487.5 191V218M1488.5 190V219M1489.5 192V217M1490.5 189V220M1491.5 189V220M1492.5 189V220M1493.5 190V219M1494.5 191V218M1495.5 191V218M1496.5 192V217M1497.5 192V217M1498.5 193V216M1499.5 192V217M1500.5 192V217M1501.5 190V219M1502.5 191V218M1503.5 192V217M1504.5 192V217M1505.5 192V217M1506.5 191V218M1507.5 193V216M1508.5 187V222M1509.5 189V220M1510.5 189V220M1511.5 190V219M1512.5 190V219M1513.5 190V219M1514.5 191V218M1515.5 191V218M1516.5 192V217M1517.5 192V217M1518.5 193V216M1519.5 192V217M1520.5 192V217M1521.5 192V217M1522.5 191V218M1523.5 192V217M1524.5 193V216M1525.5 189V220M1526.5 189V220M1527.5 190V219M1528.5 191V218M1529.5 190V219M1530.5 190V219M1531.5 191V218M1532.5 192V217M1533.5 192V217M1534.5 192V217M1535.5 192V217M1536.5 192V217M1537.5 190V219M1538.5 190V219M1539.5 190V219M1540.5 189V220M1541.5 192V217M1542.5 193V216M1543.5 186V223M1544.5 187V222M1545.5 186V223M1546.5 186V223M1547.5 188V221M1548.5 187V222M1549.5 187V222M1550.5 189V220M1551.5 189V220M1552.5 189V220M1553.5 189V220M1554.5 188V221M1555.5 190V219M1556.5 190V219M1557.5 191V218M1558.5 191V218M1559.5 190V219M1560.5 190V219M1561.5 190V219M1562.5 190V219M1563.5 192V217M1564.5 192V217M1565.5 192V217M1566.5 191V218M1567.5 192V217M1568.5 193V216M1569.5 192V217M1570.5 193V216M1571.5 191V218M1572.5 191V218M1573.5 192V217M1574.5 192V217M1575.5 192V217M1576.5 191V218M1577.5 188V221M1578.5 188V221M1579.5 189V220M1580.5 189V220M1581.5 190V219M1582.5 190V219M1583.5 191V218M1584.5 191V218M1585.5 190V219M1586.5 190V219M1587.5 190V219M1588.5 192V217M1589.5 191V218M1590.5 192V217M1591.5 191V218M1592.5 191V218M1593.5 191V218M1594.5 192V217M1595.5 193V216M1596.5 192V217M1597.5 193V216M1598.5 192V217M1599.5 193V216M1600.5 192V217M1601.5 192V217M1602.5 192V217M1603.5 190V219M1604.5 191V218M1605.5 191V218M1606.5 191V218M1607.5 192V217M1608.5 192V217M1609.5 191V218M1610.5 191V218M1611.5 193V216M1612.5 185V224M1613.5 185V224M1614.5 187V222M1615.5 188V221M1616.5 189V220M1617.5 189V220M1618.5 190V219M1619.5 190V219M1620.5 190V219M1621.5 191V218M1622.5 189V220M1623.5 189V220M1624.5 191V218M1625.5 190V219M1626.5 191V218M1627.5 191V218M1628.5 192V217M1629.5 192V217M1630.5 190V219M1631.5 190V219M1632.5 191V218M1633.5 191V218M1634.5 191V218M1635.5 189V220M1636.5 191V218M1637.5 190V219M1638.5 191V218M1639.5 191V218M1640.5 191V218M1641.5 192V217M1642.5 192V217M1643.5 192V217M1644.5 192V217M1645.5 193V216M1646.5 193V216M1647.5 188V221M1648.5 188V221M1649.5 188V221M1650.5 186V223M1651.5 187V222M1652.5 188V221M1653.5 190V219M1654.5 189V220M1655.5 190V219M1656.5 190V219M1657.5 189V220M1658.5 192V217M1659.5 192V217M1660.5 193V216M1661.5 192V217M1662.5 191V218M1663.5 192V217M1664.5 193V216M1665.5 193V216M1666.5 192V217M1667.5 191V218M1668.5 193V216M1669.5 193V216M1670.5 193V216M1671.5 193V216M1672.5 193V216M1673.5 193V216M1674.5 193V216M1675.5 192V217M1676.5 191V218M1677.5 191V218M1678.5 192V217M1679.5 193V216M1680.5 193V216M1681.5 193V216M1682.5 188V221M1683.5 187V222M1684.5 190V219M1685.5 189V220M1686.5 189V220M1687.5 189V220M1688.5 190V219M1689.5 189V220M1690.5 191V218M1691.5 192V217M1692.5 191V218M1693.5 191V218M1694.5 192V217M1695.5 193V216M1696.5 193V216M1697.5 193V216M1698.5 193V216M1699.5 192V217M1700.5 191V218M1701.5 190V219M1702.5 192V217M1703.5 192V217M1704.5 192V217M1705.5 194V215M1706.5 193V216M1707.5 192V217M1708.5 192V217M1709.5 193V216M1710.5 192V217M1711.5 192V217M1712.5 191V218M1713.5 191V218M1714.5 190V219M1715.5 191V218M1716.5 191V218M1717.5 184V225M1718.5 185V224M1719.5 185V224M1720.5 187V222M1721.5 188V221M1722.5 187V222M1723.5 187V222M1724.5 189V220M1725.5 189V220M1726.5 190V219M1727.5 190V219M1728.5 190V219M1729.5 192V217M1730.5 191V218M1731.5 191V218M1732.5 191V218M1733.5 191V218M1734.5 189V220M1735.5 189V220M1736.5 191V218M1737.5 190V219M1738.5 191V218M1739.5 192V217M1740.5 192V217M1741.5 193V216M1742.5 191V218M1743.5 193V216M1744.5 192V217M1745.5 192V217M1746.5 192V217M1747.5 191V218M1748.5 192V217M1749.5 192V217M1750.5 192V217M1751.5 192V217M1752.5 188V221M1753.5 188V221M1754.5 188V221M1755.5 188V221M1756.5 189V220M1757.5 189V220M1758.5 189V220M1759.5 189V220M1760.5 189V220M1761.5 191V218M1762.5 191V218M1763.5 191V218M1764.5 191V218M1765.5 191V218M1766.5 190V219M1767.5 190V219M1768.5 190V219M1769.5 190V219M1770.5 191V218M1771.5 191V218M1772.5 189V220M1773.5 189V220M1774.5 191V218M1775.5 191V218M1776.5 190V219M1777.5 191V218M1778.5 192V217M1779.5 193V216M1780.5 192V217M1781.5 191V218M1782.5 194V215M1783.5 193V216M1784.5 194V215M1785.5 193V216M1786.5 188V221M1787.5 189V220M1788.5 189V220M1789.5 189V220M1790.5 190V219M1791.5 189V220M1792.5 191V218M1793.5 190V219M1794.5 190V219M1795.5 189V220M1796.5 191V218M1797.5 189V220M1798.5 191V218M1799.5 192V217M1800.5 191V218M1801.5 190V219M1802.5 191V218M1803.5 191V218M1804.5 189V220M1805.5 189V220M1806.5 189V220M1807.5 191V218M1808.5 192V217M1809.5 193V216M1810.5 193V216M1811.5 191V218M1812.5 193V216M1813.5 193V216M1814.5 193V216M1815.5 192V217M1816.5 193V216M1817.5 192V217M1818.5 192V217M1819.5 193V216M1820.5 193V216M1821.5 187V222M1822.5 189V220M1823.5 189V220M1824.5 188V221M1825.5 189V220M1826.5 190V219M1827.5 190V219M1828.5 190V219M1829.5 189V220M1830.5 191V218M1831.5 191V218M1832.5 191V218M1833.5 192V217M1834.5 192V217M1835.5 191V218M1836.5 192V217M1837.5 191V218M1838.5 192V217M1839.5 190V219M1840.5 189V220M1841.5 190V219M1842.5 191V218M1843.5 190V219M1844.5 191V218M1845.5 191V218M1846.5 192V217M1847.5 193V216M1848.5 192V217M1849.5 191V218M1850.5 190V219M1851.5 190V219M1852.5 190V219M1853.5 192V217M1854.5 192V217M1855.5 192V217M1856.5 187V222M1857.5 186V223M1858.5 188V221M1859.5 187V222M1860.5 189V220M1861.5 189V220M1862.5 189V220M1863.5 189V220M1864.5 191V218M1865.5 190V219M1866.5 191V218M1867.5 192V217M1868.5 190V219M1869.5 190V219M1870.5 191V218M1871.5 191V218M1872.5 191V218M1873.5 192V217M1874.5 191V218M1875.5 191V218M1876.5 192V217M1877.5 193V216M1878.5 192V217M1879.5 193V216M1880.5 193V216M1881.5 192V217M1882.5 192V217M1883.5 191V218M1884.5 192V217M1885.5 191V218M1886.5 191V218M1887.5 192V217M1888.5 192V217M1889.5 192V217M1890.5 191V218M1891.5 187V222M1892.5 187V222M1893.5 188V221M1894.5 188V221M1895.5 186V223M1896.5 188V221" stroke="#6464dc" stroke-width="1" fill="none"/>
<path d="M132.5 324V395M133.5 325V402M134.5 319V389M135.5 321V384M136.5 326V394M137.5 314V391M138.5 323V375M139.5 324V369M140.5 312V396M141.5 322V401M142.5 336V391M143.5 325V400M144.5 319V393M145.5 312V399M146.5 317V387M147.5 313V389M148.5 317V374M149.5 303V419M150.5 308V400M151.5 309V374M152.5 308V397M153.5 300V403M154.5 316V406M155.5 306V409M156.5 304V405M157.5 312V402M158.5 334V405M159.5 315V391M160.5 314V397M161.5 304V394M162.5 316V403M163.5 317V369M164.5 321V398M165.5 326V389M166.5 320V395M167.5 315V399M168.5 319V398M169.5 305V392M170.5 339V395M171.5 322V389M172.5 309V385M173.5 312V387M174.5 326V390M175.5 334V385M176.5 336V367M177.5 325V398M178.5 315V387M179.5 331V380M180.5 329V376M181.5 335V376M182.5 334V384M183.5 334V376M184.5 312V414M185.5 305V401M186.5 310V381M187.5 302V401M188.5 314V403M189.5 309V414M190.5 317V398M191.5 337V371M192.5 322V392M193.5 316V393M194.5 322V399M195.5 327V409M196.5 320V398M197.5 317V396M198.5 308V392M199.5 318V398M200.5 326V396M201.5 334V413M202.5 314V390M203.5 320V407M204.5 319V376M205.5 308V377M206.5 320V404M207.5 324V391M208.5 338V388M209.5 326V384M210.5 339V386M211.5 325V382M212.5 317V397M213.5 315V390M214.5 325V383M215.5 326V394M216.5 321V385M217.5 324V383M218.5 328V390M219.5 314V415M220.5 333V413M221.5 294V411M222.5 302V413M223.5 304V409M224.5 304V404M225.5 311V411M226.5 307V376M227.5 305V401M228.5 300V396M229.5 315V404M230.5 312V404M231.5 307V418M232.5 322V394M233.5 318V392M234.5 312V391M235.5 310V398M236.5 308V398M237.5 313V408M238.5 317V411M239.5 310V399M240.5 318V398M241.5 322V391M242.5 313V410M243.5 316V397M244.5 315V390M245.5 315V393M246.5 321V392M247.5 323V409M248.5 317V392M249.5 321V393M250.5 320V393M251.5 322V407M252.5 322V386M253.5 318V390M254.5 304V411M255.5 308V404M256.5 308V397M257.5 314V400M258.5 317V403M259.5 318V394M260.5 315V394M261.5 324V384M262.5 326V387M263.5 321V384M264.5 322V392M265.5 326V369M266.5 312V387M267.5 321V370M268.5 320V383M269.5 322V388M270.5 327V394M271.5 328V372M272.5 308V373M273.5 311V391M274.5 317V393M275.5 324V388M276.5 328V382M277.5 333V395M278.5 332V384M279.5 321V389M280.5 324V388M281.5 325V384M282.5 333V390M283.5 316V383M284.5 325V391M285.5 334V383M286.5 324V385M287.5 330V386M288.5 300V418M289.5 290V424M290.5 304V413M291.5 293V414M292.5 311V409M293.5 306V413M294.5 317V395M295.5 309V407M296.5 305V394M297.5 315V397M298.5 304V397M299.5 302V405M300.5 315V405M301.5 321V401M302.5 313V399M303.5 314V394M304.5 320V391M305.5 310V372M306.5 311V397M307.5 312V409M308.5 319V396M309.5 321V387M310.5 329V388M311.5 318V396M312.5 327V395M313.5 336V388M314.5 314V394M315.5 321V385M316.5 324V372M317.5 304V391M318.5 312V399M319.5 321V389M320.5 322V400M321.5 310V396M322.5 312V386M323.5 301V419M324.5 314V406M325.5 308V410M326.5 304V417M327.5 309V423M328.5 314V405M329.5 322V400M330.5 321V400M331.5 320V403M332.5 326V397M333.5 314V392M334.5 322V393M335.5 323V383M336.5 320V395M337.5 321V393M338.5 316V390M339.5 311V395M340.5 321V397M341.5 314V390M342.5 322V392M343.5 329V382M344.5 318V389M345.5 319V383M346.5 311V391M347.5 319V397M348.5 326V390M349.5 317V393M350.5 325V393M351.5 316V372M352.5 311V396M353.5 320V401M354.5 320V384M355.5 322V398M356.5 319V393M357.5 330V385M358.5 304V409M359.5 297V403M360.5 305V413M361.5 304V395M362.5 312V410M363.5 307V402M364.5 313V405M365.5 303V414M366.5 314V389M367.5 325V390M368.5 309V414M369.5 321V392M370.5 311V390M371.5 311V379M372.5 313V392M373.5 319V398M374.5 315V402M375.5 306V406M376.5 321V407M377.5 319V392M378.5 324V391M379.5 313V392M380.5 325V394M381.5 337V398M382.5 311V402M383.5 322V387M384.5 319V384M385.5 325V390M386.5 320V398M387.5 323V393M388.5 320V394M389.5 317V399M390.5 319V396M391.5 316V397M392.5 332V398M393.5 285V389M394.5 303V414M395.5 294V401M396.5 306V404M397.5 308V407M398.5 335V414M399.5 298V411M400.5 304V405M401.5 320V410M402.5 317V403M403.5 321V398M404.5 317V394M405.5 321V372M406.5 322V403M407.5 322V406M408.5 317V387M409.5 331V386M410.5 319V401M411.5 310V390M412.5 320V393M413.5 312V396M414.5 330V391M415.5 324V382M416.5 329V376M417.5 322V382M418.5 333V375M419.5 319V390M420.5 323V369M421.5 318V392M422.5 340V392M423.5 312V391M424.5 319V387M425.5 321V390M426.5 327V386M427.5 338V382M428.5 306V413M429.5 320V420M430.5 306V377M431.5 306V412M432.5 304V413M433.5 312V397M434.5 303V421M435.5 317V407M436.5 312V402M437.5 331V390M438.5 321V398M439.5 315V387M440.5 320V392M441.5 317V400M442.5 324V384M443.5 316V391M444.5 315V386M445.5 327V393M446.5 310V406M447.5 312V392M448.5 315V383M449.5 320V394M450.5 338V389M451.5 321V398M452.5 326V393M453.5 325V394M454.5 321V385M455.5 325V387M456.5 315V382M457.5 330V379M458.5 325V399M459.5 317V392M460.5 316V383M461.5 337V382M462.5 319V378M463.5 306V380M464.5 308V416M465.5 299V400M466.5 309V404M467.5 313V377M468.5 298V374M469.5 304V373M470.5 320V395M471.5 325V389M472.5 318V371M473.5 315V392M474.5 312V378M475.5 309V403M476.5 310V396M477.5 337V376M478.5 336V394M479.5 320V386M480.5 313V398M481.5 301V399M482.5 319V397M483.5 321V397M484.5 319V371M485.5 329V386M486.5 322V368M487.5 331V388M488.5 317V383M489.5 340V378M490.5 323V393M491.5 331V386M492.5 328V379M493.5 317V378M494.5 325V391M495.5 319V387M496.5 329V389M497.5 309V411M498.5 305V411M499.5 314V404M500.5 314V376M501.5 322V401M502.5 320V380M503.5 296V402M504.5 316V408M505.5 303V396M506.5 315V371M507.5 317V397M508.5 320V389M509.5 319V399M510.5 321V400M511.5 315V389M512.5 320V391M513.5 321V396M514.5 326V371M515.5 314V376M516.5 306V398M517.5 314V389M518.5 316V402M519.5 319V397M520.5 316V385M521.5 320V389M522.5 309V385M523.5 329V390M524.5 327V387M525.5 319V392M526.5 318V384M527.5 320V387M528.5 323V374M529.5 324V397M530.5 329V383M531.5 332V383M532.5 301V409M533.5 287V382M534.5 305V401M535.5 310V401M536.5 287V408M537.5 301V408M538.5 297V411M539.5 308V414M540.5 306V416M541.5 311V398M542.5 310V412M543.5 307V397M544.5 320V389M545.5 318V394M546.5 317V374M547.5 324V395M548.5 329V386M549.5 307V381M550.5 326V401M551.5 322V393M552.5 329V401M553.5 320V389M554.5 328V403M555.5 322V403M556.5 319V376M557.5 314V394M558.5 319V405M559.5 317V401M560.5 321V403M561.5 312V394M562.5 321V375M563.5 322V391M564.5 316V384M565.5 325V386M566.5 334V395M567.5 302V409M568.5 297V408M569.5 304V405M570.5 306V376M571.5 306V401M572.5 302V403M573.5 333V402M574.5 327V398M575.5 309V409M576.5 316V409M577.5 306V400M578.5 313V396M579.5 320V401M580.5 313V402M581.5 310V396M582.5 317V401M583.5 308V390M584.5 313V399M585.5 332V398M586.5 299V406M587.5 321V402M588.5 318V411M589.5 309V400M590.5 318V385M591.5 322V395M592.5 322V397M593.5 303V402M594.5 309V408M595.5 299V396M596.5 317V390M597.5 319V369M598.5 318V387M599.5 323V391M600.5 316V387M601.5 312V384M602.5 299V423M603.5 294V411M604.5 290V421M605.5 306V405M606.5 292V401M607.5 305V420M608.5 312V395M609.5 303V394M610.5 337V389M611.5 320V399M612.5 321V402M613.5 322V384M614.5 309V393M615.5 310V387M616.5 312V407M617.5 312V390M618.5 318V395M619.5 312V373M620.5 315V399M621.5 309V402M622.5 324V390M623.5 310V399M624.5 319V391M625.5 313V394M626.5 324V369M627.5 320V410M628.5 321V388M629.5 338V383M630.5 308V405M631.5 319V377M632.5 317V393M633.5 313V401M634.5 312V401M635.5 336V389M636.5 323V379M637.5 304V408M638.5 308V407M639.5 310V404M640.5 336V413M641.5 338V403M642.5 305V407M643.5 313V402M644.5 310V406M645.5 331V417M646.5 314V398M647.5 324V403M648.5 323V390M649.5 339V397M650.5 305V411M651.5 312V400M652.5 314V395M653.5 320V408M654.5 320V398M655.5 314V392M656.5 322V391M657.5 320V388M658.5 324V400M659.5 317V384M660.5 303V386M661.5 313V394M662.5 317V393M663.5 335V399M664.5 317V400M665.5 326V388M666.5 325V384M667.5 338V393M668.5 335V394M669.5 330V400M670.5 327V390M671.5 331V380M672.5 303V412M673.5 302V421M674.5 298V418M675.5 311V419M676.5 295V412M677.5 307V410M678.5 304V410M679.5 305V409M680.5 312V393M681.5 312V405M682.5 317V419M683.5 318V395M684.5 312V372M685.5 310V395M686.5 317V409M687.5 322V398M688.5 310V396M689.5 304V405M690.5 307V373M691.5 326V391M692.5 327V371M693.5 324V372M694.5 321V384M695.5 322V402M696.5 311V387M697.5 334V383M698.5 309V402M699.5 323V388M700.5 327V393M701.5 321V393M702.5 322V392M703.5 318V389M704.5 320V389M705.5 315V385M706.5 289V377M707.5 289V412M708.5 308V414M709.5 297V414M710.5 297V410M711.5 292V408M712.5 329V382M713.5 302V403M714.5 310V401M715.5 315V376M716.5 311V405M717.5 298V417M718.5 313V400M719.5 322V370M720.5 308V402M721.5 305V398M722.5 339V388M723.5 315V388M724.5 316V371M725.5 317V392M726.5 315V396M727.5 318V402M728.5 323V402M729.5 320V389M730.5 314V405M731.5 315V396M732.5 317V394M733.5 326V387M734.5 322V378M735.5 320V392M736.5 324V396M737.5 315V375M738.5 325V383M739.5 312V396M740.5 337V391M741.5 291V402M742.5 293V419M743.5 306V411M744.5 304V409M745.5 310V393M746.5 315V404M747.5 320V395M748.5 332V414M749.5 308V395M750.5 320V386M751.5 320V390M752.5 335V386M753.5 316V386M754.5 320V388M755.5 316V387M756.5 316V393M757.5 322V395M758.5 340V386M759.5 326V392M760.5 327V387M761.5 323V388M762.5 323V387M763.5 329V383M764.5 329V386M765.5 325V386M766.5 337V374M767.5 320V388M768.5 325V382M769.5 323V384M770.5 329V385M771.5 327V388M772.5 325V395M773.5 325V402M774.5 321V389M775.5 322V382M776.5 292V417M777.5 300V419M778.5 298V424M779.5 297V408M780.5 313V403M781.5 306V402M782.5 304V408M783.5 302V414M784.5 298V379M785.5 308V387M786.5 312V397M787.5 297V406M788.5 323V400M789.5 317V399M790.5 312V403M791.5 320V392M792.5 321V396M793.5 325V394M794.5 332V390M795.5 309V379M796.5 306V373M797.5 314V397M798.5 326V385M799.5 312V395M800.5 321V393M801.5 312V391M802.5 322V395M803.5 305V400M804.5 335V385M805.5 323V396M806.5 324V388M807.5 333V384M808.5 325V371M809.5 319V397M810.5 321V384M811.5 291V416M812.5 292V407M813.5 314V416M814.5 310V397M815.5 287V413M816.5 298V408M817.5 301V422M818.5 294V401M819.5 314V413M820.5 306V401M821.5 298V402M822.5 312V397M823.5 301V413M824.5 315V405M825.5 312V377M826.5 310V395M827.5 316V409M828.5 297V399M829.5 302V377M830.5 325V394M831.5 313V403M832.5 305V399M833.5 304V398M834.5 330V398M835.5 313V391M836.5 320V396M837.5 323V397M838.5 327V392M839.5 328V396M840.5 316V395M841.5 324V394M842.5 324V393M843.5 322V384M844.5 327V382M845.5 330V388M846.5 288V422M847.5 304V418M848.5 286V411M849.5 285V413M850.5 302V412M851.5 306V409M852.5 291V413M853.5 295V424M854.5 298V411M855.5 302V406M856.5 336V418M857.5 306V400M858.5 308V399M859.5 311V410M860.5 315V400M861.5 315V391M862.5 319V398M863.5 306V408M864.5 302V402M865.5 310V396M866.5 316V388M867.5 311V404M868.5 318V386M869.5 325V391M870.5 318V389M871.5 321V370M872.5 318V391M873.5 324V374M874.5 323V398M875.5 324V375M876.5 329V397M877.5 316V394M878.5 325V398M879.5 320V390M880.5 335V379M881.5 311V406M882.5 303V411M883.5 296V403M884.5 305V416M885.5 304V410M886.5 308V411M887.5 316V402M888.5 313V392M889.5 310V396M890.5 293V410M891.5 309V406M892.5 314V404M893.5 316V394M894.5 320V400M895.5 322V392M896.5 300V390M897.5 340V402M898.5 308V392M899.5 314V402M900.5 328V408M901.5 318V400M902.5 317V391M903.5 318V390M904.5 320V372M905.5 321V395M906.5 309V395M907.5 339V377M908.5 322V401M909.5 338V399M910.5 315V393M911.5 321V377M912.5 322V393M913.5 319V398M914.5 325V389M915.5 328V419M916.5 310V408M917.5 296V413M918.5 302V417M919.5 289V422M920.5 301V411M921.5 305V375M922.5 319V375M923.5 306V394M924.5 309V402M925.5 321V407M926.5 310V408M927.5 308V394M928.5 317V398M929.5 315V402M930.5 313V396M931.5 319V402M932.5 319V398M933.5 306V398M934.5 307V412M935.5 315V376M936.5 321V396M937.5 322V395M938.5 324V392M939.5 325V394M940.5 328V368M941.5 323V398M942.5 318V379M943.5 327V385M944.5 316V392M945.5 317V388M946.5 323V389M947.5 318V391M948.5 308V400M949.5 330V387M950.5 288V414M951.5 304V406M952.5 300V407M953.5 297V421M954.5 289V411M955.5 303V415M956.5 330V409M957.5 304V411M958.5 333V398M959.5 338V397M960.5 311V403M961.5 319V395M962.5 306V396M963.5 316V396M964.5 304V394M965.5 321V401M966.5 304V398M967.5 319V402M968.5 307V407M969.5 307V414M970.5 308V406M971.5 307V402M972.5 317V393M973.5 317V394M974.5 325V382M975.5 326V386M976.5 330V390M977.5 329V385M978.5 325V391M979.5 331V388M980.5 328V386M981.5 330V387M982.5 327V393M983.5 320V395M984.5 312V389M985.5 303V415M986.5 306V419M987.5 299V415M988.5 309V402M989.5 300V407M990.5 293V411M991.5 292V420M992.5 327V406M993.5 316V409M994.5 299V409M995.5 302V372M996.5 311V405M997.5 317V416M998.5 310V402M999.5 337V378M1000.5 318V394M1001.5 306V406M1002.5 313V391M1003.5 320V393M1004.5 321V386M1005.5 319V392M1006.5 328V370M1007.5 324V394M1008.5 300V396M1009.5 312V391M1010.5 328V387M1011.5 340V384M1012.5 326V371M1013.5 325V388M1014.5 313V388M1015.5 329V388M1016.5 329V386M1017.5 332V385M1018.5 341V400M1019.5 321V383M1020.5 309V404M1021.5 296V388M1022.5 332V405M1023.5 306V404M1024.5 309V404M1025.5 328V401M1026.5 295V380M1027.5 307V396M1028.5 310V412M1029.5 312V394M1030.5 299V393M1031.5 303V404M1032.5 310V408M1033.5 319V409M1034.5 299V406M1035.5 317V398M1036.5 330V401M1037.5 317V396M1038.5 325V393M1039.5 321V392M1040.5 330V382M1041.5 319V383M1042.5 321V401M1043.5 308V396M1044.5 318V398M1045.5 317V390M1046.5 317V398M1047.5 335V403M1048.5 312V406M1049.5 321V400M1050.5 321V399M1051.5 324V393M1052.5 322V389M1053.5 317V392M1054.5 323V386M1055.5 294V409M1056.5 311V392M1057.5 312V403M1058.5 307V403M1059.5 337V416M1060.5 306V394M1061.5 315V399M1062.5 311V403M1063.5 314V396M1064.5 319V377M1065.5 307V402M1066.5 319V394M1067.5 318V387M1068.5 313V395M1069.5 323V402M1070.5 321V395M1071.5 319V391M1072.5 299V400M1073.5 304V395M1074.5 316V390M1075.5 305V395M1076.5 303V409M1077.5 317V405M1078.5 316V399M1079.5 324V394M1080.5 304V398M1081.5 316V402M1082.5 318V397M1083.5 322V392M1084.5 319V404M1085.5 337V394M1086.5 316V400M1087.5 316V390M1088.5 312V389M1089.5 322V388M1090.5 329V421M1091.5 293V424M1092.5 313V374M1093.5 302V398M1094.5 301V415M1095.5 308V417M1096.5 311V376M1097.5 322V401M1098.5 312V389M1099.5 322V387M1100.5 306V403M1101.5 313V392M1102.5 324V389M1103.5 311V377M1104.5 310V397M1105.5 307V370M1106.5 327V389M1107.5 312V413M1108.5 315V387M1109.5 325V391M1110.5 318V372M1111.5 329V390M1112.5 319V393M1113.5 321V387M1114.5 327V386M1115.5 339V403M1116.5 316V393M1117.5 313V392M1118.5 326V386M1119.5 331V392M1120.5 328V387M1121.5 330V383M1122.5 325V382M1123.5 317V373M1124.5 325V386M1125.5 292V417M1126.5 313V400M1127.5 299V399M1128.5 303V409M1129.5 336V401M1130.5 300V403M1131.5 314V395M1132.5 319V403M1133.5 311V392M1134.5 320V402M1135.5 314V394M1136.5 322V399M1137.5 316V392M1138.5 321V396M1139.5 316V400M1140.5 320V397M1141.5 320V389M1142.5 318V383M1143.5 330V395M1144.5 323V387M1145.5 314V395M1146.5 319V384M1147.5 323V393M1148.5 321V393M1149.5 328V392M1150.5 316V390M1151.5 323V390M1152.5 327V385M1153.5 328V381M1154.5 320V370M1155.5 318V388M1156.5 330V377M1157.5 328V379M1158.5 324V386M1159.5 300V415M1160.5 305V405M1161.5 285V419M1162.5 300V409M1163.5 298V402M1164.5 297V418M1165.5 290V422M1166.5 303V415M1167.5 299V380M1168.5 338V408M1169.5 310V404M1170.5 305V404M1171.5 315V394M1172.5 317V387M1173.5 327V389M1174.5 337V388M1175.5 315V408M1176.5 314V404M1177.5 311V411M1178.5 322V394M1179.5 311V377M1180.5 309V397M1181.5 305V407M1182.5 314V399M1183.5 307V406M1184.5 307V392M1185.5 313V396M1186.5 312V390M1187.5 315V392M1188.5 333V394M1189.5 332V387M1190.5 316V398M1191.5 324V389M1192.5 325V387M1193.5 329V392M1194.5 294V419M1195.5 337V405M1196.5 300V411M1197.5 334V406M1198.5 330V413M1199.5 297V396M1200.5 310V406M1201.5 313V391M1202.5 307V403M1203.5 312V403M1204.5 319V396M1205.5 317V400M1206.5 326V402M1207.5 322V387M1208.5 316V387M1209.5 322V390M1210.5 319V379M1211.5 325V384M1212.5 314V398M1213.5 311V377M1214.5 326V389M1215.5 319V381M1216.5 331V391M1217.5 313V390M1218.5 324V387M1219.5 319V384M1220.5 339V397M1221.5 313V396M1222.5 316V379M1223.5 340V385M1224.5 329V381M1225.5 331V384M1226.5 322V383M1227.5 341V381M1228.5 328V387M1229.5 293V422M1230.5 299V378M1231.5 334V419M1232.5 305V408M1233.5 300V409M1234.5 299V412M1235.5 291V422M1236.5 307V403M1237.5 316V411M1238.5 320V394M1239.5 305V397M1240.5 324V399M1241.5 306V394M1242.5 325V396M1243.5 319V407M1244.5 317V394M1245.5 315V392M1246.5 315V415M1247.5 318V393M1248.5 311V389M1249.5 325V394M1250.5 321V392M1251.5 316V387M1252.5 320V391M1253.5 307V400M1254.5 320V398M1255.5 312V385M1256.5 325V391M1257.5 322V383M1258.5 325V376M1259.5 311V385M1260.5 327V391M1261.5 315V385M1262.5 322V398M1263.5 319V400M1264.5 303V380M1265.5 311V407M1266.5 331V397M1267.5 315V397M1268.5 308V396M1269.5 302V406M1270.5 332V402M1271.5 312V405M1272.5 303V399M1273.5 318V403M1274.5 315V372M1275.5 316V398M1276.5 320V400M1277.5 318V376M1278.5 336V396M1279.5 321V390M1280.5 318V414M1281.5 316V394M1282.5 318V401M1283.5 311V404M1284.5 317V389M1285.5 321V396M1286.5 303V399M1287.5 323V373M1288.5 322V383M1289.5 328V388M1290.5 338V373M1291.5 322V392M1292.5 317V387M1293.5 321V392M1294.5 328V396M1295.5 329V372M1296.5 324V386M1297.5 330V392M1298.5 321V391M1299.5 308V403M1300.5 311V399M1301.5 307V405M1302.5 315V404M1303.5 302V409M1304.5 308V409M1305.5 317V376M1306.5 297V401M1307.5 314V410M1308.5 313V398M1309.5 316V380M1310.5 313V378M1311.5 315V389M1312.5 307V405M1313.5 314V397M1314.5 322V412M1315.5 318V405M1316.5 310V397M1317.5 311V391M1318.5 316V392M1319.5 316V391M1320.5 319V374M1321.5 316V390M1322.5 314V387M1323.5 317V376M1324.5 321V393M1325.5 319V386M1326.5 320V387M1327.5 339V387M1328.5 324V391M1329.5 328V384M1330.5 328V383M1331.5 323V390M1332.5 326V388M1333.5 326V383M1334.5 289V403M1335.5 316V399M1336.5 312V401M1337.5 311V412M1338.5 309V408M1339.5 300V399M1340.5 334V374M1341.5 311V389M1342.5 311V388M1343.5 317V389M1344.5 318V407M1345.5 318V396M1346.5 304V409M1347.5 313V396M1348.5 313V403M1349.5 316V391M1350.5 320V387M1351.5 306V405M1352.5 306V404M1353.5 303V400M1354.5 301V401M1355.5 318V390M1356.5 318V390M1357.5 321V396M1358.5 315V395M1359.5 323V387M1360.5 318V394M1361.5 319V393M1362.5 317V398M1363.5 315V376M1364.5 317V398M1365.5 319V395M1366.5 319V392M1367.5 338V389M1368.5 292V404M1369.5 313V407M1370.5 310V405M1371.5 310V395M1372.5 297V405M1373.5 332V412M1374.5 309V403M1375.5 307V405M1376.5 312V398M1377.5 310V379M1378.5 318V397M1379.5 335V416M1380.5 316V398M1381.5 304V398M1382.5 311V398M1383.5 340V396M1384.5 321V402M1385.5 308V391M1386.5 306V417M1387.5 309V380M1388.5 319V395M1389.5 317V396M1390.5 312V389M1391.5 318V382M1392.5 325V385M1393.5 330V389M1394.5 324V400M1395.5 327V394M1396.5 332V393M1397.5 324V389M1398.5 320V389M1399.5 340V385M1400.5 317V394M1401.5 318V394M1402.5 326V383M1403.5 315V412M1404.5 309V399M1405.5 319V406M1406.5 304V399M1407.5 317V397M1408.5 338V402M1409.5 311V404M1410.5 314V412M1411.5 312V397M1412.5 304V406M1413.5 331V399M1414.5 333V370M1415.5 333V403M1416.5 311V403M1417.5 317V395M1418.5 327V396M1419.5 320V385M1420.5 325V373M1421.5 304V399M1422.5 316V393M1423.5 316V374M1424.5 313V403M1425.5 320V393M1426.5 341V386M1427.5 327V373M1428.5 324V383M1429.5 318V402M1430.5 329V397M1431.5 314V393M1432.5 333V412M1433.5 321V392M1434.5 319V386M1435.5 321V385M1436.5 318V383M1437.5 324V383M1438.5 309V406M1439.5 329V411M1440.5 300V396M1441.5 308V407M1442.5 313V380M1443.5 305V398M1444.5 329V411M1445.5 318V414M1446.5 310V399M1447.5 308V405M1448.5 316V391M1449.5 320V387M1450.5 323V375M1451.5 311V401M1452.5 315V413M1453.5 315V402M1454.5 306V393M1455.5 315V389M1456.5 333V398M1457.5 313V397M1458.5 315V396M1459.5 317V392M1460.5 320V393M1461.5 327V385M1462.5 319V385M1463.5 315V387M1464.5 318V389M1465.5 324V385M1466.5 319V390M1467.5 334V388M1468.5 321V388M1469.5 321V394M1470.5 314V401M1471.5 321V387M1472.5 312V380M1473.5 290V418M1474.5 304V408M1475.5 308V419M1476.5 307V424M1477.5 305V396M1478.5 314V409M1479.5 307V391M1480.5 319V393M1481.5 317V407M1482.5 316V388M1483.5 307V402M1484.5 323V390M1485.5 317V377M1486.5 325V395M1487.5 319V399M1488.5 324V399M1489.5 323V391M1490.5 315V400M1491.5 319V401M1492.5 317V397M1493.5 315V402M1494.5 332V393M1495.5 323V399M1496.5 337V373M1497.5 320V367M1498.5 337V385M1499.5 322V385M1500.5 324V384M1501.5 312V394M1502.5 321V390M1503.5 317V398M1504.5 327V391M1505.5 325V384M1506.5 314V386M1507.5 325V400M1508.5 294V406M1509.5 302V398M1510.5 318V401M1511.5 315V398M1512.5 317V397M1513.5 316V391M1514.5 303V398M1515.5 315V395M1516.5 319V389M1517.5 338V388M1518.5 330V386M1519.5 322V395M1520.5 320V391M1521.5 322V388M1522.5 314V388M1523.5 328V381M1524.5 323V384M1525.5 306V407M1526.5 308V411M1527.5 315V395M1528.5 302V401M1529.5 317V389M1530.5 320V387M1531.5 326V396M1532.5 322V398M1533.5 336V401M1534.5 321V390M1535.5 329V385M1536.5 325V387M1537.5 317V407M1538.5 313V395M1539.5 333V398M1540.5 311V400M1541.5 339V403M1542.5 328V396M1543.5 299V415M1544.5 334V409M1545.5 298V408M1546.5 289V417M1547.5 300V418M1548.5 304V400M1549.5 300V413M1550.5 317V402M1551.5 307V407M1552.5 316V376M1553.5 310V399M1554.5 306V399M1555.5 306V399M1556.5 304V415M1557.5 325V385M1558.5 325V392M1559.5 314V390M1560.5 313V401M1561.5 337V403M1562.5 308V390M1563.5 308V388M1564.5 325V385M1565.5 311V386M1566.5 322V392M1567.5 320V396M1568.5 324V382M1569.5 323V390M1570.5 324V389M1571.5 326V394M1572.5 317V395M1573.5 323V383M1574.5 323V393M1575.5 320V387M1576.5 315V371M1577.5 307V417M1578.5 311V401M1579.5 319V400M1580.5 310V399M1581.5 301V401M1582.5 316V421M1583.5 323V376M1584.5 316V400M1585.5 316V401M1586.5 318V414M1587.5 319V393M1588.5 329V387M1589.5 323V387M1590.5 321V370M1591.5 311V402M1592.5 315V394M1593.5 311V392M1594.5 325V369M1595.5 322V387M1596.5 316V373M1597.5 327V380M1598.5 330V388M1599.5 331V388M1600.5 311V385M1601.5 333V394M1602.5 323V396M1603.5 319V389M1604.5 324V398M1605.5 313V398M1606.5 315V384M1607.5 329V388M1608.5 323V386M1609.5 309V392M1610.5 319V390M1611.5 324V389M1612.5 292V413M1613.5 302V421M1614.5 309V416M1615.5 311V416M1616.5 296V401M1617.5 313V396M1618.5 318V398M1619.5 316V402M1620.5 310V396M1621.5 319V391M1622.5 300V396M1623.5 303V395M1624.5 312V396M1625.5 319V392M1626.5 327V392M1627.5 309V390M1628.5 330V391M1629.5 329V385M1630.5 322V401M1631.5 319V398M1632.5 318V396M1633.5 324V397M1634.5 303V389M1635.5 313V399M1636.5 319V395M1637.5 316V392M1638.5 319V390M1639.5 326V388M1640.5 321V389M1641.5 338V391M1642.5 314V391M1643.5 328V374M1644.5 322V395M1645.5 331V382M1646.5 332V387M1647.5 306V398M1648.5 306V374M1649.5 290V408M1650.5 304V422M1651.5 295V409M1652.5 293V409M1653.5 312V396M1654.5 314V401M1655.5 307V371M1656.5 308V394M1657.5 315V398M1658.5 334V387M1659.5 330V383M1660.5 330V382M1661.5 323V398M1662.5 322V370M1663.5 313V371M1664.5 340V396M1665.5 324V383M1666.5 326V404M1667.5 321V392M1668.5 322V381M1669.5 314V386M1670.5 323V379M1671.5 330V387M1672.5 329V376M1673.5 325V387M1674.5 330V386M1675.5 324V374M1676.5 312V395M1677.5 319V405M1678.5 340V394M1679.5 319V388M1680.5 325V400M1681.5 328V391M1682.5 316V401M1683.5 302V403M1684.5 321V397M1685.5 297V391M1686.5 300V395M1687.5 298V402M1688.5 316V397M1689.5 316V397M1690.5 309V399M1691.5 310V385M1692.5 317V387M1693.5 319V390M1694.5 330V385M1695.5 328V398M1696.5 329V400M1697.5 324V387M1698.5 318V369M1699.5 340V394M1700.5 305V392M1701.5 324V395M1702.5 324V389M1703.5 323V385M1704.5 330V387M1705.5 329V390M1706.5 332V369M1707.5 319V386M1708.5 321V391M1709.5 328V379M1710.5 339V396M1711.5 315V391M1712.5 318V397M1713.5 323V393M1714.5 310V375M1715.5 322V401M1716.5 309V396M1717.5 291V420M1718.5 296V385M1719.5 285V417M1720.5 306V410M1721.5 293V409M1722.5 309V421M1723.5 335V406M1724.5 303V403M1725.5 317V403M1726.5 312V396M1727.5 317V401M1728.5 317V395M1729.5 322V395M1730.5 307V389M1731.5 321V400M1732.5 323V387M1733.5 323V391M1734.5 301V404M1735.5 308V402M1736.5 315V375M1737.5 324V391M1738.5 322V395M1739.5 326V393M1740.5 323V390M1741.5 312V386M1742.5 322V372M1743.5 331V392M1744.5 329V395M1745.5 317V398M1746.5 323V385M1747.5 322V392M1748.5 308V397M1749.5 326V391M1750.5 315V400M1751.5 328V383M1752.5 302V413M1753.5 329V406M1754.5 304V414M1755.5 308V380M1756.5 302V406M1757.5 307V405M1758.5 309V406M1759.5 311V419M1760.5 321V398M1761.5 322V393M1762.5 327V395M1763.5 317V399M1764.5 329V407M1765.5 316V389M1766.5 312V387M1767.5 332V405M1768.5 317V387M1769.5 324V410M1770.5 318V382M1771.5 321V393M1772.5 308V399M1773.5 316V397M1774.5 310V393M1775.5 318V389M1776.5 325V398M1777.5 315V377M1778.5 327V382M1779.5 327V394M1780.5 318V385M1781.5 323V396M1782.5 333V378M1783.5 330V383M1784.5 322V379M1785.5 327V392M1786.5 315V374M1787.5 314V399M1788.5 318V414M1789.5 310V373M1790.5 317V402M1791.5 308V391M1792.5 305V416M1793.5 317V400M1794.5 308V393M1795.5 312V398M1796.5 305V386M1797.5 314V373M1798.5 313V393M1799.5 319V402M1800.5 316V403M1801.5 311V387M1802.5 324V389M1803.5 320V393M1804.5 337V418M1805.5 311V404M1806.5 305V391M1807.5 318V391M1808.5 332V392M1809.5 329V388M1810.5 326V387M1811.5 326V394M1812.5 323V382M1813.5 334V384M1814.5 321V377M1815.5 321V385M1816.5 319V387M1817.5 318V386M1818.5 327V387M1819.5 329V373M1820.5 320V395M1821.5 304V414M1822.5 303V396M1823.5 303V408M1824.5 308V400M1825.5 311V403M1826.5 309V393M1827.5 316V391M1828.5 314V394M1829.5 313V393M1830.5 320V409M1831.5 326V393M1832.5 318V389M1833.5 320V396M1834.5 327V387M1835.5 311V390M1836.5 306V389M1837.5 304V397M1838.5 338V394M1839.5 306V399M1840.5 307V398M1841.5 309V408M1842.5 325V376M1843.5 311V395M1844.5 316V395M1845.5 318V396M1846.5 335V399M1847.5 312V387M1848.5 322V386M1849.5 317V392M1850.5 305V396M1851.5 318V393M1852.5 314V399M1853.5 338V392M1854.5 316V393M1855.5 322V383M1856.5 301V424M1857.5 320V414M1858.5 300V412M1859.5 331V415M1860.5 313V399M1861.5 313V403M1862.5 310V410M1863.5 318V397M1864.5 313V389M1865.5 313V399M1866.5 317V390M1867.5 318V391M1868.5 331V400M1869.5 315V394M1870.5 317V391M1871.5 318V386M1872.5 316V388M1873.5 330V383M1874.5 335V396M1875.5 325V398M1876.5 324V389M1877.5 327V390M1878.5 325V395M1879.5 327V380M1880.5 333V383M1881.5 330V384M1882.5 320V392M1883.5 321V390M1884.5 326V369M1885.5 323V393M1886.5 315V390M1887.5 312V396M1888.5 323V373M1889.5 322V393M1890.5 313V385M1891.5 310V409M1892.5 301V416M1893.5 305V377M1894.5 295V415M1895.5 289V413M1896.5 303V405" stroke="#3232c8" stroke-width="1" fill="none"/><path d="M132.5 341V368M133.5 340V369M134.5 342V367M135.5 341V368M136.5 341V368M137.5 340V369M138.5 341V368M139.5 342V367M140.5 341V368M141.5 339V370M142.5 342V367M143.5 341V368M144.5 340V369M145.5 341V368M146.5 341V368M147.5 342V367M148.5 341V368M149.5 336V373M150.5 337V372M151.5 337V372M152.5 338V371M153.5 337V372M154.5 339V370M155.5 337V372M156.5 338V371M157.5 339V370M158.5 339V370M159.5 340V369M160.5 341V368M161.5 341V368M162.5 340V369M163.5 341V368M164.5 343V366M165.5 341V368M166.5 340V369M167.5 339V370M168.5 342V367M169.5 342V367M170.5 340V369M171.5 343V366M172.5 342V367M173.5 343V366M174.5 343V366M175.5 341V368M176.5 343V366M177.5 343V366M178.5 342V367M179.5 344V365M180.5 343V366M181.5 344V365M182.5 344V365M183.5 345V364M184.5 338V371M185.5 339V370M186.5 339V370M187.5 339V370M188.5 339V370M189.5 339V370M190.5 339V370M191.5 341V368M192.5 341V368M193.5 340V369M194.5 341V368M195.5 342V367M196.5 341V368M197.5 341V368M198.5 339V370M199.5 340V369M200.5 340V369M201.5 339V370M202.5 339V370M203.5 340V369M204.5 339V370M205.5 341V368M206.5 341V368M207.5 342V367M208.5 343V366M209.5 342V367M210.5 342V367M211.5 342V367M212.5 341V368M213.5 342V367M214.5 342V367M215.5 342V367M216.5 343V366M217.5 343V366M218.5 342V367M219.5 337V372M220.5 337V372M221.5 336V373M222.5 338V371M223.5 336V373M224.5 338V371M225.5 338V371M226.5 339V370M227.5 340V369M228.5 340V369M229.5 339V370M230.5 338V371M231.5 339V370M232.5 340V369M233.5 340V369M234.5 340V369M235.5 339V370M236.5 338V371M237.5 340V369M238.5 340V369M239.5 339V370M240.5 341V368M241.5 340V369M242.5 339V370M243.5 341V368M244.5 340V369M245.5 340V369M246.5 341V368M247.5 342V367M248.5 341V368M249.5 340V369M250.5 341V368M251.5 341V368M252.5 342V367M253.5 342V367M254.5 336V373M255.5 340V369M256.5 338V371M257.5 340V369M258.5 341V368M259.5 341V368M260.5 341V368M261.5 342V367M262.5 342V367M263.5 341V368M264.5 341V368M265.5 342V367M266.5 342V367M267.5 341V368M268.5 343V366M269.5 342V367M270.5 342V367M271.5 342V367M272.5 341V368M273.5 342V367M274.5 340V369M275.5 341V368M276.5 342V367M277.5 343V366M278.5 343V366M279.5 343V366M280.5 342V367M281.5 343V366M282.5 343V366M283.5 343V366M284.5 343V366M285.5 341V368M286.5 343V366M287.5 342V367M288.5 336V373M289.5 337V372M290.5 338V371M291.5 336V373M292.5 337V372M293.5 339V370M294.5 339V370M295.5 339V370M296.5 340V369M297.5 340V369M298.5 339V370M299.5 338V371M300.5 340V369M301.5 340V369M302.5 341V368M303.5 341V368M304.5 342V367M305.5 341V368M306.5 339V370M307.5 339V370M308.5 341V368M309.5 341V368M310.5 342V367M311.5 341V368M312.5 341V368M313.5 342V367M314.5 341V368M315.5 342V367M316.5 342V367M317.5 340V369M318.5 341V368M319.5 342V367M320.5 341V368M321.5 340V369M322.5 342V367M323.5 338V371M324.5 338V371M325.5 340V369M326.5 338V371M327.5 339V370M328.5 340V369M329.5 341V368M330.5 342V367M331.5 342V367M332.5 341V368M333.5 341V368M334.5 342V367M335.5 342V367M336.5 341V368M337.5 341V368M338.5 342V367M339.5 339V370M340.5 342V367M341.5 342V367M342.5 341V368M343.5 343V366M344.5 343V366M345.5 342V367M346.5 341V368M347.5 342V367M348.5 342V367M349.5 342V367M350.5 342V367M351.5 341V368M352.5 340V369M353.5 340V369M354.5 342V367M355.5 340V369M356.5 341V368M357.5 343V366M358.5 338V371M359.5 337V372M360.5 340V369M361.5 339V370M362.5 338V371M363.5 339V370M364.5 340V369M365.5 341V368M366.5 340V369M367.5 341V368M368.5 340V369M369.5 340V369M370.5 341V368M371.5 340V369M372.5 339V370M373.5 340V369M374.5 339V370M375.5 340V369M376.5 340V369M377.5 341V368M378.5 342V367M379.5 342V367M380.5 341V368M381.5 339V370M382.5 339V370M383.5 342V367M384.5 342V367M385.5 341V368M386.5 341V368M387.5 342V367M388.5 341V368M389.5 340V369M390.5 340V369M391.5 341V368M392.5 341V368M393.5 335V374M394.5 337V372M395.5 337V372M396.5 338V371M397.5 337V372M398.5 338V371M399.5 338V371M400.5 338V371M401.5 340V369M402.5 339V370M403.5 339V370M404.5 338V371M405.5 341V368M406.5 341V368M407.5 342V367M408.5 340V369M409.5 341V368M410.5 341V368M411.5 340V369M412.5 341V368M413.5 341V368M414.5 342V367M415.5 342V367M416.5 343V366M417.5 342V367M418.5 343V366M419.5 342V367M420.5 342V367M421.5 340V369M422.5 342V367M423.5 340V369M424.5 340V369M425.5 342V367M426.5 344V365M427.5 344V365M428.5 337V372M429.5 339V370M430.5 337V372M431.5 338V371M432.5 338V371M433.5 338V371M434.5 338V371M435.5 340V369M436.5 339V370M437.5 340V369M438.5 339V370M439.5 341V368M440.5 341V368M441.5 341V368M442.5 340V369M443.5 341V368M444.5 341V368M445.5 341V368M446.5 340V369M447.5 340V369M448.5 342V367M449.5 341V368M450.5 343V366M451.5 341V368M452.5 342V367M453.5 341V368M454.5 341V368M455.5 344V365M456.5 344V365M457.5 344V365M458.5 341V368M459.5 342V367M460.5 341V368M461.5 344V365M462.5 345V364M463.5 336V373M464.5 336V373M465.5 337V372M466.5 338V371M467.5 338V371M468.5 338V371M469.5 339V370M470.5 340V369M471.5 341V368M472.5 342V367M473.5 340V369M474.5 341V368M475.5 340V369M476.5 340V369M477.5 340V369M478.5 340V369M479.5 342V367M480.5 340V369M481.5 340V369M482.5 339V370M483.5 340V369M484.5 342V367M485.5 344V365M486.5 343V366M487.5 343V366M488.5 343V366M489.5 344V365M490.5 343V366M491.5 344V365M492.5 343V366M493.5 344V365M494.5 342V367M495.5 344V365M496.5 343V366M497.5 339V370M498.5 339V370M499.5 339V370M500.5 341V368M501.5 341V368M502.5 339V370M503.5 340V369M504.5 340V369M505.5 339V370M506.5 341V368M507.5 342V367M508.5 342V367M509.5 341V368M510.5 341V368M511.5 342V367M512.5 342V367M513.5 342V367M514.5 344V365M515.5 340V369M516.5 341V368M517.5 341V368M518.5 341V368M519.5 341V368M520.5 342V367M521.5 342V367M522.5 343V366M523.5 342V367M524.5 342V367M525.5 342V367M526.5 342V367M527.5 342V367M528.5 342V367M529.5 341V368M530.5 343V366M531.5 342V367M532.5 335V374M533.5 338V371M534.5 337V372M535.5 338V371M536.5 337V372M537.5 337V372M538.5 337V372M539.5 338V371M540.5 339V370M541.5 339V370M542.5 339V370M543.5 340V369M544.5 340V369M545.5 341V368M546.5 340V369M547.5 340V369M548.5 343V366M549.5 343V366M550.5 341V368M551.5 342V367M552.5 341V368M553.5 342V367M554.5 342V367M555.5 340V369M556.5 340V369M557.5 341V368M558.5 341V368M559.5 339V370M560.5 339V370M561.5 340V369M562.5 340V369M563.5 342V367M564.5 341V368M565.5 341V368M566.5 342V367M567.5 337V372M568.5 337V372M569.5 337V372M570.5 338V371M571.5 337V372M572.5 338V371M573.5 339V370M574.5 339V370M575.5 339V370M576.5 337V372M577.5 339V370M578.5 339V370M579.5 340V369M580.5 339V370M581.5 339V370M582.5 340V369M583.5 339V370M584.5 339V370M585.5 338V371M586.5 339V370M587.5 340V369M588.5 341V368M589.5 338V371M590.5 341V368M591.5 340V369M592.5 340V369M593.5 339V370M594.5 340V369M595.5 339V370M596.5 341V368M597.5 341V368M598.5 341V368M599.5 342V367M600.5 343V366M601.5 342V367M602.5 337V372M603.5 336V373M604.5 335V374M605.5 338V371M606.5 339V370M607.5 339V370M608.5 339V370M609.5 338V371M610.5 340V369M611.5 340V369M612.5 340V369M613.5 341V368M614.5 341V368M615.5 341V368M616.5 340V369M617.5 341V368M618.5 341V368M619.5 338V371M620.5 340V369M621.5 338V371M622.5 340V369M623.5 340V369M624.5 342V367M625.5 342V367M626.5 341V368M627.5 342V367M628.5 342V367M629.5 341V368M630.5 339V370M631.5 341V368M632.5 341V368M633.5 342V367M634.5 341V368M635.5 341V368M636.5 343V366M637.5 338V371M638.5 338V371M639.5 337V372M640.5 338V371M641.5 339V370M642.5 340V369M643.5 340V369M644.5 339V370M645.5 340V369M646.5 341V368M647.5 341V368M648.5 342V367M649.5 342V367M650.5 339V370M651.5 342V367M652.5 341V368M653.5 340V369M654.5 341V368M655.5 342V367M656.5 342V367M657.5 341V368M658.5 341V368M659.5 341V368M660.5 341V368M661.5 341V368M662.5 341V368M663.5 341V368M664.5 341V368M665.5 341V368M666.5 343V366M667.5 341V368M668.5 341V368M669.5 343V366M670.5 342V367M671.5 343V366M672.5 336V373M673.5 338V371M674.5 338V371M675.5 337V372M676.5 338V371M677.5 338V371M678.5 339V370M679.5 338V371M680.5 338V371M681.5 340V369M682.5 339V370M683.5 340V369M684.5 339V370M685.5 339V370M686.5 339V370M687.5 340V369M688.5 341V368M689.5 338V371M690.5 339V370M691.5 340V369M692.5 342V367M693.5 343V366M694.5 343V366M695.5 340V369M696.5 341V368M697.5 342V367M698.5 340V369M699.5 342V367M700.5 342V367M701.5 341V368M702.5 341V368M703.5 341V368M704.5 342V367M705.5 342V367M706.5 338V371M707.5 337V372M708.5 338V371M709.5 336V373M710.5 337V372M711.5 337V372M712.5 339V370M713.5 339V370M714.5 337V372M715.5 339V370M716.5 338V371M717.5 337V372M718.5 339V370M719.5 340V369M720.5 340V369M721.5 339V370M722.5 341V368M723.5 341V368M724.5 338V371M725.5 339V370M726.5 339V370M727.5 340V369M728.5 341V368M729.5 339V370M730.5 339V370M731.5 341V368M732.5 340V369M733.5 341V368M734.5 340V369M735.5 341V368M736.5 341V368M737.5 341V368M738.5 341V368M739.5 339V370M740.5 342V367M741.5 338V371M742.5 338V371M743.5 336V373M744.5 338V371M745.5 339V370M746.5 340V369M747.5 339V370M748.5 339V370M749.5 340V369M750.5 341V368M751.5 341V368M752.5 341V368M753.5 342V367M754.5 342V367M755.5 342V367M756.5 341V368M757.5 342V367M758.5 342V367M759.5 341V368M760.5 342V367M761.5 342V367M762.5 343V366M763.5 343V366M764.5 343V366M765.5 343V366M766.5 343V366M767.5 343V366M768.5 343V366M769.5 342V367M770.5 342V367M771.5 343V366M772.5 343V366M773.5 343V366M774.5 342V367M775.5 342V367M776.5 334V375M777.5 337V372M778.5 336V373M779.5 337V372M780.5 338V371M781.5 338V371M782.5 338V371M783.5 336V373M784.5 337V372M785.5 340V369M786.5 339V370M787.5 339V370M788.5 339V370M789.5 339V370M790.5 339V370M791.5 340V369M792.5 341V368M793.5 341V368M794.5 339V370M795.5 339V370M796.5 340V369M797.5 341V368M798.5 341V368M799.5 342V367M800.5 341V368M801.5 340V369M802.5 341V368M803.5 339V370M804.5 342V367M805.5 342V367M806.5 343V366M807.5 343V366M808.5 342V367M809.5 341V368M810.5 342V367M811.5 336V373M812.5 336V373M813.5 336V373M814.5 338V371M815.5 336V373M816.5 335V374M817.5 337V372M818.5 338V371M819.5 338V371M820.5 337V372M821.5 337V372M822.5 340V369M823.5 338V371M824.5 337V372M825.5 338V371M826.5 339V370M827.5 338V371M828.5 338V371M829.5 339V370M830.5 340V369M831.5 339V370M832.5 339V370M833.5 339V370M834.5 340V369M835.5 340V369M836.5 341V368M837.5 340V369M838.5 341V368M839.5 341V368M840.5 342V367M841.5 341V368M842.5 342V367M843.5 343V366M844.5 342V367M845.5 342V367M846.5 333V376M847.5 337V372M848.5 335V374M849.5 337V372M850.5 335V374M851.5 337V372M852.5 336V373M853.5 336V373M854.5 336V373M855.5 338V371M856.5 338V371M857.5 339V370M858.5 339V370M859.5 338V371M860.5 340V369M861.5 340V369M862.5 338V371M863.5 339V370M864.5 338V371M865.5 339V370M866.5 341V368M867.5 342V367M868.5 343V366M869.5 341V368M870.5 342V367M871.5 342V367M872.5 341V368M873.5 341V368M874.5 340V369M875.5 341V368M876.5 342V367M877.5 340V369M878.5 341V368M879.5 344V365M880.5 341V368M881.5 337V372M882.5 337V372M883.5 338V371M884.5 338V371M885.5 338V371M886.5 338V371M887.5 339V370M888.5 340V369M889.5 341V368M890.5 340V369M891.5 340V369M892.5 341V368M893.5 340V369M894.5 340V369M895.5 340V369M896.5 340V369M897.5 341V368M898.5 341V368M899.5 341V368M900.5 337V372M901.5 341V368M902.5 342V367M903.5 342V367M904.5 341V368M905.5 340V369M906.5 339V370M907.5 340V369M908.5 340V369M909.5 340V369M910.5 341V368M911.5 341V368M912.5 340V369M913.5 339V370M914.5 342V367M915.5 338V371M916.5 335V374M917.5 335V374M918.5 336V373M919.5 336V373M920.5 337V372M921.5 339V370M922.5 339V370M923.5 339V370M924.5 340V369M925.5 339V370M926.5 340V369M927.5 339V370M928.5 339V370M929.5 340V369M930.5 339V370M931.5 340V369M932.5 341V368M933.5 340V369M934.5 339V370M935.5 340V369M936.5 341V368M937.5 340V369M938.5 341V368M939.5 342V367M940.5 343V366M941.5 342V367M942.5 344V365M943.5 344V365M944.5 341V368M945.5 341V368M946.5 341V368M947.5 340V369M948.5 342V367M949.5 342V367M950.5 337V372M951.5 338V371M952.5 337V372M953.5 337V372M954.5 337V372M955.5 338V371M956.5 336V373M957.5 338V371M958.5 338V371M959.5 340V369M960.5 341V368M961.5 339V370M962.5 341V368M963.5 340V369M964.5 341V368M965.5 342V367M966.5 340V369M967.5 341V368M968.5 337V372M969.5 339V370M970.5 340V369M971.5 338V371M972.5 341V368M973.5 342V367M974.5 342V367M975.5 343V366M976.5 343V366M977.5 342V367M978.5 343V366M979.5 343V366M980.5 343V366M981.5 343V366M982.5 341V368M983.5 340V369M984.5 340V369M985.5 336V373M986.5 335V374M987.5 337V372M988.5 338V371M989.5 338V371M990.5 338V371M991.5 338V371M992.5 338V371M993.5 339V370M994.5 339V370M995.5 339V370M996.5 340V369M997.5 339V370M998.5 341V368M999.5 341V368M1000.5 340V369M1001.5 338V371M1002.5 340V369M1003.5 340V369M1004.5 339V370M1005.5 340V369M1006.5 342V367M1007.5 341V368M1008.5 339V370M1009.5 340V369M1010.5 342V367M1011.5 342V367M1012.5 342V367M1013.5 342V367M1014.5 342V367M1015.5 341V368M1016.5 343V366M1017.5 343V366M1018.5 343V366M1019.5 342V367M1020.5 338V371M1021.5 336V373M1022.5 338V371M1023.5 337V372M1024.5 338V371M1025.5 337V372M1026.5 338V371M1027.5 339V370M1028.5 340V369M1029.5 340V369M1030.5 341V368M1031.5 338V371M1032.5 339V370M1033.5 340V369M1034.5 339V370M1035.5 340V369M1036.5 341V368M1037.5 340V369M1038.5 341V368M1039.5 340V369M1040.5 342V367M1041.5 342V367M1042.5 340V369M1043.5 341V368M1044.5 340V369M1045.5 340V369M1046.5 339V370M1047.5 339V370M1048.5 338V371M1049.5 339V370M1050.5 339V370M1051.5 340V369M1052.5 341V368M1053.5 339V370M1054.5 342V367M1055.5 337V372M1056.5 338V371M1057.5 338V371M1058.5 338V371M1059.5 337V372M1060.5 338V371M1061.5 339V370M1062.5 340V369M1063.5 340V369M1064.5 341V368M1065.5 340V369M1066.5 341V368M1067.5 341V368M1068.5 340V369M1069.5 340V369M1070.5 342V367M1071.5 340V369M1072.5 339V370M1073.5 339V370M1074.5 340V369M1075.5 339V370M1076.5 338V371M1077.5 341V368M1078.5 340V369M1079.5 341V368M1080.5 341V368M1081.5 340V369M1082.5 340V369M1083.5 339V370M1084.5 340V369M1085.5 341V368M1086.5 341V368M1087.5 340V369M1088.5 341V368M1089.5 342V367M1090.5 335V374M1091.5 336V373M1092.5 338V371M1093.5 339V370M1094.5 337V372M1095.5 338V371M1096.5 338V371M1097.5 340V369M1098.5 341V368M1099.5 340V369M1100.5 338V371M1101.5 339V370M1102.5 340V369M1103.5 340V369M1104.5 341V368M1105.5 341V368M1106.5 342V367M1107.5 340V369M1108.5 341V368M1109.5 342V367M1110.5 342V367M1111.5 342V367M1112.5 340V369M1113.5 342V367M1114.5 341V368M1115.5 341V368M1116.5 342V367M1117.5 341V368M1118.5 342V367M1119.5 342V367M1120.5 342V367M1121.5 343V366M1122.5 342V367M1123.5 340V369M1124.5 342V367M1125.5 338V371M1126.5 337V372M1127.5 338V371M1128.5 336V373M1129.5 339V370M1130.5 339V370M1131.5 340V369M1132.5 340V369M1133.5 341V368M1134.5 340V369M1135.5 342V367M1136.5 341V368M1137.5 341V368M1138.5 339V370M1139.5 340V369M1140.5 340V369M1141.5 340V369M1142.5 341V368M1143.5 340V369M1144.5 342V367M1145.5 341V368M1146.5 342V367M1147.5 342V367M1148.5 341V368M1149.5 340V369M1150.5 342V367M1151.5 342V367M1152.5 342V367M1153.5 343V366M1154.5 343V366M1155.5 342V367M1156.5 343V366M1157.5 344V365M1158.5 343V366M1159.5 336V373M1160.5 338V371M1161.5 336V373M1162.5 337V372M1163.5 338V371M1164.5 337V372M1165.5 338V371M1166.5 338V371M1167.5 338V371M1168.5 338V371M1169.5 338V371M1170.5 339V370M1171.5 340V369M1172.5 340V369M1173.5 341V368M1174.5 341V368M1175.5 340V369M1176.5 338V371M1177.5 339V370M1178.5 340V369M1179.5 339V370M1180.5 341V368M1181.5 338V371M1182.5 340V369M1183.5 341V368M1184.5 341V368M1185.5 339V370M1186.5 339V370M1187.5 341V368M1188.5 342V367M1189.5 341V368M1190.5 341V368M1191.5 341V368M1192.5 342V367M1193.5 342V367M1194.5 337V372M1195.5 338V371M1196.5 337V372M1197.5 337V372M1198.5 337V372M1199.5 339V370M1200.5 340V369M1201.5 339V370M1202.5 338V371M1203.5 340V369M1204.5 341V368M1205.5 341V368M1206.5 341V368M1207.5 342V367M1208.5 341V368M1209.5 341V368M1210.5 341V368M1211.5 342V367M1212.5 340V369M1213.5 341V368M1214.5 343V366M1215.5 343V366M1216.5 343V366M1217.5 342V367M1218.5 342V367M1219.5 342V367M1220.5 342V367M1221.5 342V367M1222.5 344V365M1223.5 344V365M1224.5 343V366M1225.5 344V365M1226.5 344V365M1227.5 345V364M1228.5 345V364M1229.5 337V372M1230.5 337V372M1231.5 337V372M1232.5 338V371M1233.5 337V372M1234.5 338V371M1235.5 339V370M1236.5 339V370M1237.5 338V371M1238.5 340V369M1239.5 340V369M1240.5 341V368M1241.5 340V369M1242.5 340V369M1243.5 341V368M1244.5 342V367M1245.5 341V368M1246.5 340V369M1247.5 341V368M1248.5 341V368M1249.5 342V367M1250.5 343V366M1251.5 341V368M1252.5 342V367M1253.5 341V368M1254.5 340V369M1255.5 342V367M1256.5 341V368M1257.5 342V367M1258.5 341V368M1259.5 341V368M1260.5 342V367M1261.5 342V367M1262.5 342V367M1263.5 343V366M1264.5 337V372M1265.5 338V371M1266.5 340V369M1267.5 339V370M1268.5 339V370M1269.5 339V370M1270.5 339V370M1271.5 339V370M1272.5 339V370M1273.5 339V370M1274.5 339V370M1275.5 339V370M1276.5 340V369M1277.5 340V369M1278.5 340V369M1279.5 339V370M1280.5 340V369M1281.5 339V370M1282.5 340V369M1283.5 340V369M1284.5 341V368M1285.5 341V368M1286.5 340V369M1287.5 341V368M1288.5 341V368M1289.5 343V366M1290.5 343V366M1291.5 343V366M1292.5 343V366M1293.5 341V368M1294.5 342V367M1295.5 343V366M1296.5 343V366M1297.5 343V366M1298.5 342V367M1299.5 338V371M1300.5 338V371M1301.5 339V370M1302.5 338V371M1303.5 340V369M1304.5 339V370M1305.5 340V369M1306.5 338V371M1307.5 340V369M1308.5 338V371M1309.5 338V371M1310.5 338V371M1311.5 339V370M1312.5 338V371M1313.5 339V370M1314.5 340V369M1315.5 338V371M1316.5 338V371M1317.5 340V369M1318.5 339V370M1319.5 340V369M1320.5 342V367M1321.5 340V369M1322.5 340V369M1323.5 339V370M1324.5 341V368M1325.5 340V369M1326.5 342V367M1327.5 343V366M1328.5 341V368M1329.5 343V366M1330.5 343V366M1331.5 342V367M1332.5 343V366M1333.5 343V366M1334.5 337V372M1335.5 339V370M1336.5 339V370M1337.5 338V371M1338.5 337V372M1339.5 338V371M1340.5 340V369M1341.5 340V369M1342.5 340V369M1343.5 340V369M1344.5 340V369M1345.5 341V368M1346.5 339V370M1347.5 339V370M1348.5 339V370M1349.5 340V369M1350.5 342V367M1351.5 338V371M1352.5 339V370M1353.5 338V371M1354.5 340V369M1355.5 340V369M1356.5 339V370M1357.5 340V369M1358.5 341V368M1359.5 341V368M1360.5 342V367M1361.5 341V368M1362.5 341V368M1363.5 338V371M1364.5 340V369M1365.5 341V368M1366.5 341V368M1367.5 344V365M1368.5 339V370M1369.5 338V371M1370.5 338V371M1371.5 340V369M1372.5 338V371M1373.5 339V370M1374.5 340V369M1375.5 339V370M1376.5 340V369M1377.5 339V370M1378.5 340V369M1379.5 339V370M1380.5 339V370M1381.5 339V370M1382.5 339V370M1383.5 342V367M1384.5 340V369M1385.5 339V370M1386.5 336V373M1387.5 339V370M1388.5 340V369M1389.5 339V370M1390.5 341V368M1391.5 341V368M1392.5 342V367M1393.5 341V368M1394.5 342V367M1395.5 340V369M1396.5 341V368M1397.5 342V367M1398.5 340V369M1399.5 342V367M1400.5 341V368M1401.5 342V367M1402.5 343V366M1403.5 338V371M1404.5 338V371M1405.5 338V371M1406.5 340V369M1407.5 340V369M1408.5 339V370M1409.5 339V370M1410.5 339V370M1411.5 338V371M1412.5 340V369M1413.5 339V370M1414.5 339V370M1415.5 340V369M1416.5 339V370M1417.5 341V368M1418.5 340V369M1419.5 342V367M1420.5 341V368M1421.5 339V370M1422.5 341V368M1423.5 341V368M1424.5 340V369M1425.5 341V368M1426.5 341V368M1427.5 341V368M1428.5 341V368M1429.5 341V368M1430.5 342V367M1431.5 339V370M1432.5 340V369M1433.5 341V368M1434.5 341V368M1435.5 341V368M1436.5 341V368M1437.5 341V368M1438.5 337V372M1439.5 338V371M1440.5 339V370M1441.5 337V372M1442.5 339V370M1443.5 339V370M1444.5 339V370M1445.5 339V370M1446.5 340V369M1447.5 340V369M1448.5 341V368M1449.5 341V368M1450.5 341V368M1451.5 339V370M1452.5 340V369M1453.5 339V370M1454.5 340V369M1455.5 340V369M1456.5 340V369M1457.5 341V368M1458.5 340V369M1459.5 341V368M1460.5 341V368M1461.5 342V367M1462.5 342V367M1463.5 341V368M1464.5 341V368M1465.5 342V367M1466.5 341V368M1467.5 341V368M1468.5 339V370M1469.5 340V369M1470.5 341V368M1471.5 340V369M1472.5 343V366M1473.5 336V373M1474.5 337V372M1475.5 338V371M1476.5 336V373M1477.5 339V370M1478.5 338V371M1479.5 339V370M1480.5 340V369M1481.5 339V370M1482.5 340V369M1483.5 340V369M1484.5 341V368M1485.5 340V369M1486.5 340V369M1487.5 342V367M1488.5 340V369M1489.5 341V368M1490.5 339V370M1491.5 339V370M1492.5 339V370M1493.5 340V369M1494.5 340V369M1495.5 341V368M1496.5 343V366M1497.5 341V368M1498.5 343V366M1499.5 342V367M1500.5 342V367M1501.5 339V370M1502.5 342V367M1503.5 341V368M1504.5 342V367M1505.5 342V367M1506.5 342V367M1507.5 343V366M1508.5 338V371M1509.5 339V370M1510.5 339V370M1511.5 340V369M1512.5 340V369M1513.5 340V369M1514.5 341V368M1515.5 340V369M1516.5 341V368M1517.5 342V367M1518.5 343V366M1519.5 341V368M1520.5 342V367M1521.5 341V368M1522.5 340V369M1523.5 342V367M1524.5 343V366M1525.5 338V371M1526.5 338V371M1527.5 340V369M1528.5 341V368M1529.5 340V369M1530.5 341V368M1531.5 341V368M1532.5 342V367M1533.5 342V367M1534.5 343V366M1535.5 342V367M1536.5 342V367M1537.5 340V369M1538.5 339V370M1539.5 340V369M1540.5 339V370M1541.5 342V367M1542.5 342V367M1543.5 336V373M1544.5 336V373M1545.5 337V372M1546.5 336V373M1547.5 339V370M1548.5 336V373M1549.5 337V372M1550.5 339V370M1551.5 338V371M1552.5 339V370M1553.5 339V370M1554.5 338V371M1555.5 339V370M1556.5 340V369M1557.5 340V369M1558.5 341V368M1559.5 339V370M1560.5 341V368M1561.5 340V369M1562.5 340V369M1563.5 341V368M1564.5 342V367M1565.5 342V367M1566.5 340V369M1567.5 342V367M1568.5 343V366M1569.5 342V367M1570.5 343V366M1571.5 341V368M1572.5 341V368M1573.5 342V367M1574.5 342V367M1575.5 341V368M1576.5 340V369M1577.5 339V370M1578.5 337V372M1579.5 339V370M1580.5 338V371M1581.5 340V369M1582.5 340V369M1583.5 341V368M1584.5 341V368M1585.5 340V369M1586.5 340V369M1587.5 341V368M1588.5 342V367M1589.5 341V368M1590.5 342V367M1591.5 341V368M1592.5 341V368M1593.5 341V368M1594.5 342V367M1595.5 343V366M1596.5 342V367M1597.5 343V366M1598.5 342V367M1599.5 344V365M1600.5 342V367M1601.5 343V366M1602.5 341V368M1603.5 341V368M1604.5 342V367M1605.5 342V367M1606.5 341V368M1607.5 342V367M1608.5 342V367M1609.5 341V368M1610.5 341V368M1611.5 342V367M1612.5 334V375M1613.5 336V373M1614.5 337V372M1615.5 338V371M1616.5 338V371M1617.5 340V369M1618.5 340V369M1619.5 340V369M1620.5 340V369M1621.5 341V368M1622.5 338V371M1623.5 340V369M1624.5 340V369M1625.5 341V368M1626.5 342V367M1627.5 342V367M1628.5 342V367M1629.5 343V366M1630.5 340V369M1631.5 340V369M1632.5 341V368M1633.5 341V368M1634.5 340V369M1635.5 339V370M1636.5 341V368M1637.5 341V368M1638.5 341V368M1639.5 341V368M1640.5 342V367M1641.5 341V368M1642.5 342V367M1643.5 341V368M1644.5 341V368M1645.5 343V366M1646.5 343V366M1647.5 338V371M1648.5 339V370M1649.5 338V371M1650.5 337V372M1651.5 336V373M1652.5 338V371M1653.5 340V369M1654.5 339V370M1655.5 339V370M1656.5 340V369M1657.5 339V370M1658.5 342V367M1659.5 342V367M1660.5 343V366M1661.5 343V366M1662.5 341V368M1663.5 342V367M1664.5 343V366M1665.5 343V366M1666.5 343V366M1667.5 341V368M1668.5 343V366M1669.5 342V367M1670.5 342V367M1671.5 343V366M1672.5 344V365M1673.5 343V366M1674.5 343V366M1675.5 342V367M1676.5 341V368M1677.5 342V367M1678.5 342V367M1679.5 342V367M1680.5 343V366M1681.5 342V367M1682.5 337V372M1683.5 337V372M1684.5 340V369M1685.5 339V370M1686.5 339V370M1687.5 338V371M1688.5 340V369M1689.5 339V370M1690.5 341V368M1691.5 342V367M1692.5 341V368M1693.5 341V368M1694.5 342V367M1695.5 343V366M1696.5 343V366M1697.5 344V365M1698.5 343V366M1699.5 341V368M1700.5 341V368M1701.5 341V368M1702.5 342V367M1703.5 343V366M1704.5 341V368M1705.5 343V366M1706.5 343V366M1707.5 341V368M1708.5 342V367M1709.5 343V366M1710.5 342V367M1711.5 342V367M1712.5 341V368M1713.5 342V367M1714.5 339V370M1715.5 341V368M1716.5 342V367M1717.5 333V376M1718.5 334V375M1719.5 334V375M1720.5 337V372M1721.5 338V371M1722.5 337V372M1723.5 338V371M1724.5 339V370M1725.5 339V370M1726.5 340V369M1727.5 341V368M1728.5 340V369M1729.5 342V367M1730.5 340V369M1731.5 341V368M1732.5 341V368M1733.5 341V368M1734.5 338V371M1735.5 339V370M1736.5 341V368M1737.5 340V369M1738.5 341V368M1739.5 341V368M1740.5 342V367M1741.5 343V366M1742.5 341V368M1743.5 343V366M1744.5 342V367M1745.5 342V367M1746.5 342V367M1747.5 340V369M1748.5 342V367M1749.5 342V367M1750.5 341V368M1751.5 341V368M1752.5 338V371M1753.5 338V371M1754.5 338V371M1755.5 338V371M1756.5 340V369M1757.5 339V370M1758.5 338V371M1759.5 339V370M1760.5 340V369M1761.5 341V368M1762.5 341V368M1763.5 340V369M1764.5 341V368M1765.5 341V368M1766.5 339V370M1767.5 341V368M1768.5 340V369M1769.5 339V370M1770.5 341V368M1771.5 341V368M1772.5 340V369M1773.5 338V371M1774.5 341V368M1775.5 340V369M1776.5 340V369M1777.5 340V369M1778.5 343V366M1779.5 343V366M1780.5 342V367M1781.5 341V368M1782.5 344V365M1783.5 343V366M1784.5 345V364M1785.5 343V366M1786.5 338V371M1787.5 339V370M1788.5 339V370M1789.5 339V370M1790.5 340V369M1791.5 339V370M1792.5 341V368M1793.5 340V369M1794.5 340V369M1795.5 340V369M1796.5 340V369M1797.5 338V371M1798.5 341V368M1799.5 341V368M1800.5 341V368M1801.5 340V369M1802.5 341V368M1803.5 341V368M1804.5 339V370M1805.5 339V370M1806.5 339V370M1807.5 341V368M1808.5 341V368M1809.5 343V366M1810.5 343V366M1811.5 341V368M1812.5 343V366M1813.5 343V366M1814.5 343V366M1815.5 342V367M1816.5 342V367M1817.5 343V366M1818.5 342V367M1819.5 343V366M1820.5 343V366M1821.5 337V372M1822.5 339V370M1823.5 339V370M1824.5 338V371M1825.5 339V370M1826.5 341V368M1827.5 340V369M1828.5 341V368M1829.5 339V370M1830.5 341V368M1831.5 341V368M1832.5 341V368M1833.5 342V367M1834.5 342V367M1835.5 342V367M1836.5 342V367M1837.5 341V368M1838.5 342V367M1839.5 341V368M1840.5 340V369M1841.5 339V370M1842.5 341V368M1843.5 340V369M1844.5 341V368M1845.5 341V368M1846.5 342V367M1847.5 343V366M1848.5 342V367M1849.5 340V369M1850.5 340V369M1851.5 341V368M1852.5 340V369M1853.5 343V366M1854.5 342V367M1855.5 342V367M1856.5 337V372M1857.5 335V374M1858.5 338V371M1859.5 337V372M1860.5 340V369M1861.5 339V370M1862.5 340V369M1863.5 338V371M1864.5 341V368M1865.5 340V369M1866.5 341V368M1867.5 341V368M1868.5 340V369M1869.5 340V369M1870.5 341V368M1871.5 341V368M1872.5 341V368M1873.5 343V366M1874.5 341V368M1875.5 341V368M1876.5 342V367M1877.5 342V367M1878.5 342V367M1879.5 343V366M1880.5 343V366M1881.5 342V367M1882.5 341V368M1883.5 341V368M1884.5 342V367M1885.5 341V368M1886.5 341V368M1887.5 342V367M1888.5 343V366M1889.5 343V366M1890.5 342V367M1891.5 337V372M1892.5 337V372M1893.5 337V372M1894.5 338V371M1895.5 336V373M1896.5 338V371" stroke="#6464dc" stroke-width="1" fill="none"/>
</svg>
<!-- app icon & window buttons -->
<svg class="a" style="left:0;top:0" width="24" height="22">
<path d="M4.5 12 Q4.5 4.5 10.5 4.5 Q16.5 4.5 16.5 12" stroke="#000070" stroke-width="1.6" fill="none"/>
<rect x="7" y="8.5" width="6.5" height="8.5" rx="1.5" fill="#ffd000"/>
<rect x="7" y="13" width="6.5" height="1.5" fill="#f02000"/>
<path d="M3 12 Q3 10 5 10 H6.5 V17 H5 Q3 17 3 15 Z" fill="#0000a0"/>
<path d="M17.5 12 Q17.5 10 15.5 10 H14 V17 H15.5 Q17.5 17 17.5 15 Z" fill="#0000a0"/>
</svg>
<div class="a" style="left:1872px;top:0;width:45px;height:19px;background:#bdbdbd"></div>
<svg class="a" style="left:1820px;top:0" width="100" height="22">
<rect x="8" y="11" width="8" height="2" fill="#000"/>
<rect x="33.5" y="6.5" width="7" height="7" fill="none" stroke="#000" stroke-width="1"/>
<rect x="33" y="6" width="8" height="1.6" fill="#000"/>
<path d="M35.5 4.5 H42.5 V11.5" stroke="#000" stroke-width="1" fill="none"/>
<path d="M71 5.5 L79 13.5 M79 5.5 L71 13.5" stroke="#fff" stroke-width="1.5"/>
</svg>
<!-- track panel -->
<svg class="a" style="left:0;top:0" width="1920" height="1080" shape-rendering="crispEdges">
<rect x="4" y="132" width="1894" height="1" fill="#000"/>
<rect x="4" y="132" width="1" height="295" fill="#000"/>
<rect x="4" y="426" width="1895" height="1" fill="#000"/>
<rect x="6" y="427" width="1893" height="1" fill="#000"/>
<rect x="1897" y="132" width="1" height="296" fill="#000"/>
<rect x="1898" y="134" width="1" height="294" fill="#000"/>
<rect x="5" y="133" width="95" height="293" fill="#f0f0f0"/>
<rect x="5" y="149" width="1" height="277" fill="#fff"/>
<rect x="5" y="425" width="95" height="1" fill="#fff"/>
<rect x="100" y="133" width="1" height="293" fill="#000"/>
<rect x="101" y="133" width="30" height="293" fill="#f0f0f0"/>
<rect x="101" y="133" width="1" height="142" fill="#fff"/>
<rect x="101" y="283" width="1" height="142" fill="#fff"/>
<rect x="101" y="275" width="30" height="1" fill="#a0a0a0"/>
<rect x="101" y="283" width="30" height="1" fill="#fff"/>
<rect x="131" y="276" width="1767" height="1" fill="#000"/>
<rect x="131" y="277" width="1767" height="5" fill="#a0a0a0"/>
<rect x="131" y="282" width="1767" height="1" fill="#000"/>
<!-- close & name buttons -->
<rect x="5" y="133" width="15" height="1" fill="#fff"/><rect x="5" y="133" width="1" height="15" fill="#fff"/>
<rect x="19" y="133" width="2" height="16" fill="#a0a0a0"/><rect x="5" y="147" width="95" height="2" fill="#a0a0a0"/>
<rect x="21" y="133" width="79" height="1" fill="#fff"/><rect x="21" y="133" width="1" height="14" fill="#fff"/>
<rect x="5" y="182" width="95" height="1" fill="#a0a0a0"/>
<rect x="5" y="183" width="46" height="1" fill="#fff"/><rect x="5" y="183" width="1" height="14" fill="#fff"/>
<rect x="51" y="183" width="1" height="14" fill="#a0a0a0"/>
<rect x="52" y="183" width="47" height="1" fill="#fff"/><rect x="52" y="183" width="1" height="14" fill="#fff"/>
<rect x="99" y="183" width="1" height="14" fill="#a0a0a0"/>
<rect x="5" y="197" width="95" height="2" fill="#a0a0a0"/>
<!-- sliders -->
<rect x="16" y="219" width="76" height="1" fill="#a0a0a0"/>
<rect x="16" y="249" width="76" height="1" fill="#a0a0a0"/>
<g fill="#a0a0a0">
<rect x="17" y="214" width="1" height="3"/><rect x="24" y="215" width="1" height="2"/><rect x="31" y="215" width="1" height="2"/><rect x="38" y="215" width="1" height="2"/><rect x="45" y="215" width="1" height="2"/><rect x="61" y="215" width="1" height="2"/><rect x="68" y="215" width="1" height="2"/><rect x="75" y="215" width="1" height="2"/><rect x="82" y="215" width="1" height="2"/><rect x="89" y="214" width="1" height="3"/>
<rect x="17" y="244" width="1" height="3"/><rect x="24" y="245" width="1" height="2"/><rect x="31" y="245" width="1" height="2"/><rect x="38" y="245" width="1" height="2"/><rect x="45" y="245" width="1" height="2"/><rect x="61" y="245" width="1" height="2"/><rect x="68" y="245" width="1" height="2"/><rect x="75" y="245" width="1" height="2"/><rect x="82" y="245" width="1" height="2"/><rect x="89" y="244" width="1" height="3"/>
</g>
<rect x="16" y="208" width="5" height="1" fill="#000"/>
<rect x="84" y="209" width="5" height="1" fill="#000"/><rect x="86" y="207" width="1" height="5" fill="#000"/>
<!-- collapse button -->
<rect x="23" y="408" width="62" height="1" fill="#a0a0a0"/><rect x="23" y="408" width="1" height="17" fill="#a0a0a0"/><rect x="84" y="408" width="1" height="17" fill="#a0a0a0"/>
<rect x="24" y="409" width="60" height="1" fill="#fff"/><rect x="24" y="409" width="1" height="16" fill="#fff"/>
</svg>
<svg class="a" style="left:0;top:0" width="130" height="430">
<g transform="translate(48,211)"><path d="M0.5 3.5 Q0.5 0.5 3.5 0.5 H7.5 Q10.5 0.5 10.5 3.5 V9 L5.5 13.5 L0.5 9 Z" fill="#c4c4e4" stroke="#222" stroke-width="1"/><path d="M3.5 5.5H7.5M3.5 7.5H7.5M3.5 9.5H7.5" stroke="#fff" stroke-width="1"/></g>
<g transform="translate(48,241)"><path d="M0.5 3.5 Q0.5 0.5 3.5 0.5 H7.5 Q10.5 0.5 10.5 3.5 V9 L5.5 13.5 L0.5 9 Z" fill="#c4c4e4" stroke="#222" stroke-width="1"/><path d="M3.5 5.5H7.5M3.5 7.5H7.5M3.5 9.5H7.5" stroke="#fff" stroke-width="1"/></g>
<path d="M9 137 L16.5 144 M16.5 137 L9 144" stroke="#000" stroke-width="1.5"/>
<path d="M86 137.5 H96 L91 143.5 Z" fill="#000"/>
<path d="M49 420.5 L54 415.5 L59 420.5 Z" fill="#a0a0a0"/>
<rect x="128" y="169" width="2" height="1" fill="#000"/><rect x="126" y="204" width="4" height="1" fill="#000"/><rect x="128" y="240" width="2" height="1" fill="#000"/>
<rect x="128" y="319" width="2" height="1" fill="#000"/><rect x="126" y="354" width="4" height="1" fill="#000"/><rect x="128" y="390" width="2" height="1" fill="#000"/>
</svg>
<div class="lbl" style="left:23px;top:135px;font-size:11px">Audio Track</div>
<div class="lbl" style="left:8px;top:151px;font-size:11px">Stereo, 48000Hz</div>
<div class="lbl" style="left:8px;top:166px;font-size:11px">32-bit float</div>
<div class="lbl" style="left:16px;top:184px;font-size:11px">Mute</div>
<div class="lbl" style="left:65px;top:184px;font-size:11px">Solo</div>
<div class="lbl" style="left:16px;top:232px;font-size:11px">L</div>
<div class="lbl" style="left:83px;top:232px;font-size:11px">R</div>
<div class="vr" style="top:135px"><b>1.0</b></div>
<div class="vr" style="top:164px">0.5</div>
<div class="vr" style="top:199px"><b>0.0</b></div>
<div class="vr" style="top:234px">-0.5</div>
<div class="vr" style="top:262px"><b>-1.0</b></div>
<div class="vr" style="top:285px"><b>1.0</b></div>
<div class="vr" style="top:314px">0.5</div>
<div class="vr" style="top:349px"><b>0.0</b></div>
<div class="vr" style="top:384px">-0.5</div>
<div class="vr" style="top:412px"><b>-1.0</b></div>
<!-- scrollbars -->
<svg class="a" style="left:0;top:0" width="1920" height="1080" shape-rendering="crispEdges">
<rect x="1903" y="128" width="17" height="855" fill="#f0f0f0"/>
<rect x="1903" y="128" width="1" height="856" fill="#fff"/>
<rect x="1904" y="144" width="15" height="821" fill="#cdcdcd"/>
<rect x="0" y="983" width="136" height="1" fill="#f4f4f4"/><rect x="136" y="983" width="1767" height="1" fill="#fff"/>
<rect x="0" y="984" width="1920" height="16" fill="#f0f0f0"/>
<rect x="581" y="984" width="160" height="15" fill="#cdcdcd"/>
<rect x="0" y="1000" width="1920" height="1" fill="#a0a0a0"/>
</svg>
<svg class="a" style="left:0;top:0" width="1920" height="1080">
<path d="M1907.5 136.5 L1911 133 L1914.5 136.5" stroke="#505050" stroke-width="2" fill="none"/>
<path d="M1907.5 972.5 L1911 976 L1914.5 972.5" stroke="#505050" stroke-width="2" fill="none"/>
<path d="M146.5 987.5 L143 991 L146.5 994.5" stroke="#505050" stroke-width="2" fill="none"/>
<path d="M1893 987.5 L1896.5 991 L1893 994.5" stroke="#505050" stroke-width="2" fill="none"/>
</svg>
<!-- dialog -->
<div class="a" style="left:802px;top:445px;width:316px;height:189px;background:#ebebeb;border:1px solid #f2f2f2;border-right-color:#e4e4e4;border-bottom-color:#e4e4e4"></div>
<div class="a" style="left:1080px;top:446px;width:31px;height:20px;background:#bebebe"></div>
<svg class="a" style="left:1080px;top:446px" width="31" height="20"><path d="M11.5 6.5 L19.5 14.5 M19.5 6.5 L11.5 14.5" stroke="#fff" stroke-width="1.5"/></svg>
<div class="a" style="left:0;top:453px;width:1920px;text-align:center;font-size:14px;color:#333;padding-left:0px">Trap Queen</div>
<div class="a" style="left:809px;top:475px;width:302px;height:152px;background:#f0f0f0;border:1px solid #dadada"></div>
<div class="lbl" style="left:820px;top:487px;font-size:11px;letter-spacing:-0.1px">Exporting entire file at 320 Kbps</div>
<div class="a" style="left:820px;top:509px;width:280px;height:28px;background:#e6e6e6;border:1px solid #bcbcbc"></div>
<div class="a" style="left:821px;top:510px;width:83px;height:26px;background:#06b025"></div>
<div class="lbl" style="left:820px;top:548px;width:151px;text-align:right;font-size:11px;letter-spacing:-0.3px">Elapsed Time:</div>
<div class="lbl" style="left:982px;top:548px;font-size:11px">00:00:03</div>
<div class="lbl" style="left:820px;top:571px;width:151px;text-align:right;font-size:11px;letter-spacing:-0.3px">Remaining Time:</div>
<div class="lbl" style="left:982px;top:571px;font-size:11px">00:00:06</div>
<div class="a" style="left:931px;top:594px;width:73px;height:21px;border:1px solid #3399ff;background:linear-gradient(#f0f0f0,#e5e5e5);font-size:11px;text-align:center;line-height:20px">Stop</div>
<div class="a" style="left:1016px;top:594px;width:73px;height:21px;border:1px solid #adadad;background:linear-gradient(#f0f0f0,#e5e5e5);font-size:11px;text-align:center;line-height:20px">Cancel</div>
<!-- selection toolbar -->
<svg class="a" style="left:0;top:0" width="1920" height="1080" shape-rendering="crispEdges">
<rect x="0.5" y="1001.5" width="9.5" height="54" fill="#fcfcfc" stroke="#a8a8a8"/>
<rect x="3" y="1006" width="5" height="1" fill="#8a8a8a"/><rect x="3" y="1010" width="5" height="1" fill="#8a8a8a"/><rect x="3" y="1014" width="5" height="1" fill="#8a8a8a"/><rect x="3" y="1018" width="5" height="1" fill="#8a8a8a"/><rect x="3" y="1022" width="5" height="1" fill="#8a8a8a"/><rect x="3" y="1026" width="5" height="1" fill="#8a8a8a"/><rect x="3" y="1030" width="5" height="1" fill="#8a8a8a"/><rect x="3" y="1034" width="5" height="1" fill="#8a8a8a"/><rect x="3" y="1038" width="5" height="1" fill="#8a8a8a"/><rect x="3" y="1042" width="5" height="1" fill="#8a8a8a"/><rect x="3" y="1046" width="5" height="1" fill="#8a8a8a"/><rect x="3" y="1050" width="5" height="1" fill="#8a8a8a"/>
<rect x="0" y="1056" width="1920" height="1" fill="#a0a0a0"/>
<rect x="12.5" y="1025.5" width="79" height="22" fill="#fff" stroke="#acacac"/>
<rect x="113" y="1023" width="1" height="26" fill="#a0a0a0"/>
<rect x="172.5" y="1030.5" width="12" height="12" fill="#fff" stroke="#333"/>
<rect x="505" y="1023" width="1" height="26" fill="#a0a0a0"/>
<rect x="191" y="1025" width="150" height="21" fill="#fff"/><rect x="191" y="1025" width="149" height="20" fill="#808080"/><rect x="193" y="1027" width="147" height="18" fill="#c0c0c0"/><rect x="331" y="1027" width="8" height="17" fill="#c4c4c4"/><rect x="331" y="1027" width="8" height="1" fill="#fff"/><rect x="331" y="1027" width="1" height="17" fill="#fff"/><path d="M332 1034 H339 L335.5 1038 Z" fill="#000"/><rect x="348" y="1025" width="150" height="21" fill="#fff"/><rect x="348" y="1025" width="149" height="20" fill="#808080"/><rect x="350" y="1027" width="147" height="18" fill="#c0c0c0"/><rect x="488" y="1027" width="8" height="17" fill="#c4c4c4"/><rect x="488" y="1027" width="8" height="1" fill="#fff"/><rect x="488" y="1027" width="1" height="17" fill="#fff"/><path d="M489 1034 H496 L492.5 1038 Z" fill="#000"/><rect x="512" y="1025" width="150" height="21" fill="#fff"/><rect x="512" y="1025" width="149" height="20" fill="#808080"/><rect x="514" y="1027" width="147" height="18" fill="#c0c0c0"/><rect x="652" y="1027" width="8" height="17" fill="#c4c4c4"/><rect x="652" y="1027" width="8" height="1" fill="#fff"/><rect x="652" y="1027" width="1" height="17" fill="#fff"/><path d="M653 1034 H660 L656.5 1038 Z" fill="#000"/>
<rect x="0" y="1078" width="1920" height="2" fill="#a0a0a0"/>
<rect x="1776" y="1059" width="1" height="19" fill="#d0d0d0"/>
</svg>
<svg class="a" style="left:0;top:0" width="1920" height="1080">
<path d="M80 1033.5 L83.5 1037 L87 1033.5" stroke="#555" stroke-width="1.6" fill="none"/>
<circle cx="354.5" cy="1014.5" r="5.5" fill="#fff" stroke="#333" stroke-width="1"/>
<circle cx="354.5" cy="1014.5" r="3" fill="#222"/>
<circle cx="400.5" cy="1014.5" r="5.5" fill="#fff" stroke="#333" stroke-width="1"/>
</svg>
<div class="lbl" style="left:12px;top:1008px;font-size:12px">Project Rate (Hz):</div>
<div class="lbl" style="left:18px;top:1029px;font-size:12px">48000</div>
<div class="lbl" style="left:124px;top:1029px;font-size:12px">Snap To</div>
<div class="lbl" style="left:191px;top:1008px;font-size:12px">Selection Start:</div>
<div class="lbl" style="left:364px;top:1008px;font-size:12px">End</div>
<div class="lbl" style="left:410px;top:1008px;font-size:12px">Length</div>
<div class="lbl" style="left:512px;top:1008px;font-size:12px">Audio Position:</div>
<div class="lbl" style="left:195.5px;top:1030px;font-size:12.5px;color:#0000d0">0</div><div class="lbl" style="left:205.5px;top:1030px;font-size:12.5px;color:#0000d0">0</div><div class="lbl" style="left:217.5px;top:1030px;font-size:12.5px;color:#222">h</div><div class="lbl" style="left:230.0px;top:1030px;font-size:12.5px;color:#0000d0">0</div><div class="lbl" style="left:240.0px;top:1030px;font-size:12.5px;color:#0000d0">0</div><div class="lbl" style="left:253.0px;top:1030px;font-size:12.5px;color:#222">m</div><div class="lbl" style="left:268.0px;top:1030px;font-size:12.5px;color:#0000d0">0</div><div class="lbl" style="left:278.0px;top:1030px;font-size:12.5px;color:#0000d0">0</div><div class="lbl" style="left:288.0px;top:1030px;font-size:12.5px;color:#0000d0">.</div><div class="lbl" style="left:292.0px;top:1030px;font-size:12.5px;color:#0000d0">0</div><div class="lbl" style="left:302.0px;top:1030px;font-size:12.5px;color:#0000d0">0</div><div class="lbl" style="left:312.0px;top:1030px;font-size:12.5px;color:#0000d0">0</div><div class="lbl" style="left:323.5px;top:1030px;font-size:12.5px;color:#222">s</div><div class="lbl" style="left:352.5px;top:1030px;font-size:12.5px;color:#0000d0">0</div><div class="lbl" style="left:362.5px;top:1030px;font-size:12.5px;color:#0000d0">0</div><div class="lbl" style="left:374.5px;top:1030px;font-size:12.5px;color:#222">h</div><div class="lbl" style="left:387.0px;top:1030px;font-size:12.5px;color:#0000d0">0</div><div class="lbl" style="left:397.0px;top:1030px;font-size:12.5px;color:#0000d0">3</div><div class="lbl" style="left:410.0px;top:1030px;font-size:12.5px;color:#222">m</div><div class="lbl" style="left:425.0px;top:1030px;font-size:12.5px;color:#0000d0">3</div><div class="lbl" style="left:435.0px;top:1030px;font-size:12.5px;color:#0000d0">7</div><div class="lbl" style="left:445.0px;top:1030px;font-size:12.5px;color:#0000d0">.</div><div class="lbl" style="left:449.0px;top:1030px;font-size:12.5px;color:#0000d0">1</div><div class="lbl" style="left:459.0px;top:1030px;font-size:12.5px;color:#0000d0">7</div><div class="lbl" style="left:469.0px;top:1030px;font-size:12.5px;color:#0000d0">6</div><div class="lbl" style="left:480.5px;top:1030px;font-size:12.5px;color:#222">s</div><div class="lbl" style="left:516.5px;top:1030px;font-size:12.5px;color:#0000d0">0</div><div class="lbl" style="left:526.5px;top:1030px;font-size:12.5px;color:#0000d0">0</div><div class="lbl" style="left:538.5px;top:1030px;font-size:12.5px;color:#222">h</div><div class="lbl" style="left:551.0px;top:1030px;font-size:12.5px;color:#0000d0">0</div><div class="lbl" style="left:561.0px;top:1030px;font-size:12.5px;color:#0000d0">0</div><div class="lbl" style="left:574.0px;top:1030px;font-size:12.5px;color:#222">m</div><div class="lbl" style="left:589.0px;top:1030px;font-size:12.5px;color:#0000d0">0</div><div class="lbl" style="left:599.0px;top:1030px;font-size:12.5px;color:#0000d0">0</div><div class="lbl" style="left:609.0px;top:1030px;font-size:12.5px;color:#0000d0">.</div><div class="lbl" style="left:613.0px;top:1030px;font-size:12.5px;color:#0000d0">0</div><div class="lbl" style="left:623.0px;top:1030px;font-size:12.5px;color:#0000d0">0</div><div class="lbl" style="left:633.0px;top:1030px;font-size:12.5px;color:#0000d0">0</div><div class="lbl" style="left:644.5px;top:1030px;font-size:12.5px;color:#222">s</div>
<div class="lbl" style="left:1781px;top:1063px;font-size:11.5px;letter-spacing:-0.15px">Actual Rate: 48000</div>

</body></html>
